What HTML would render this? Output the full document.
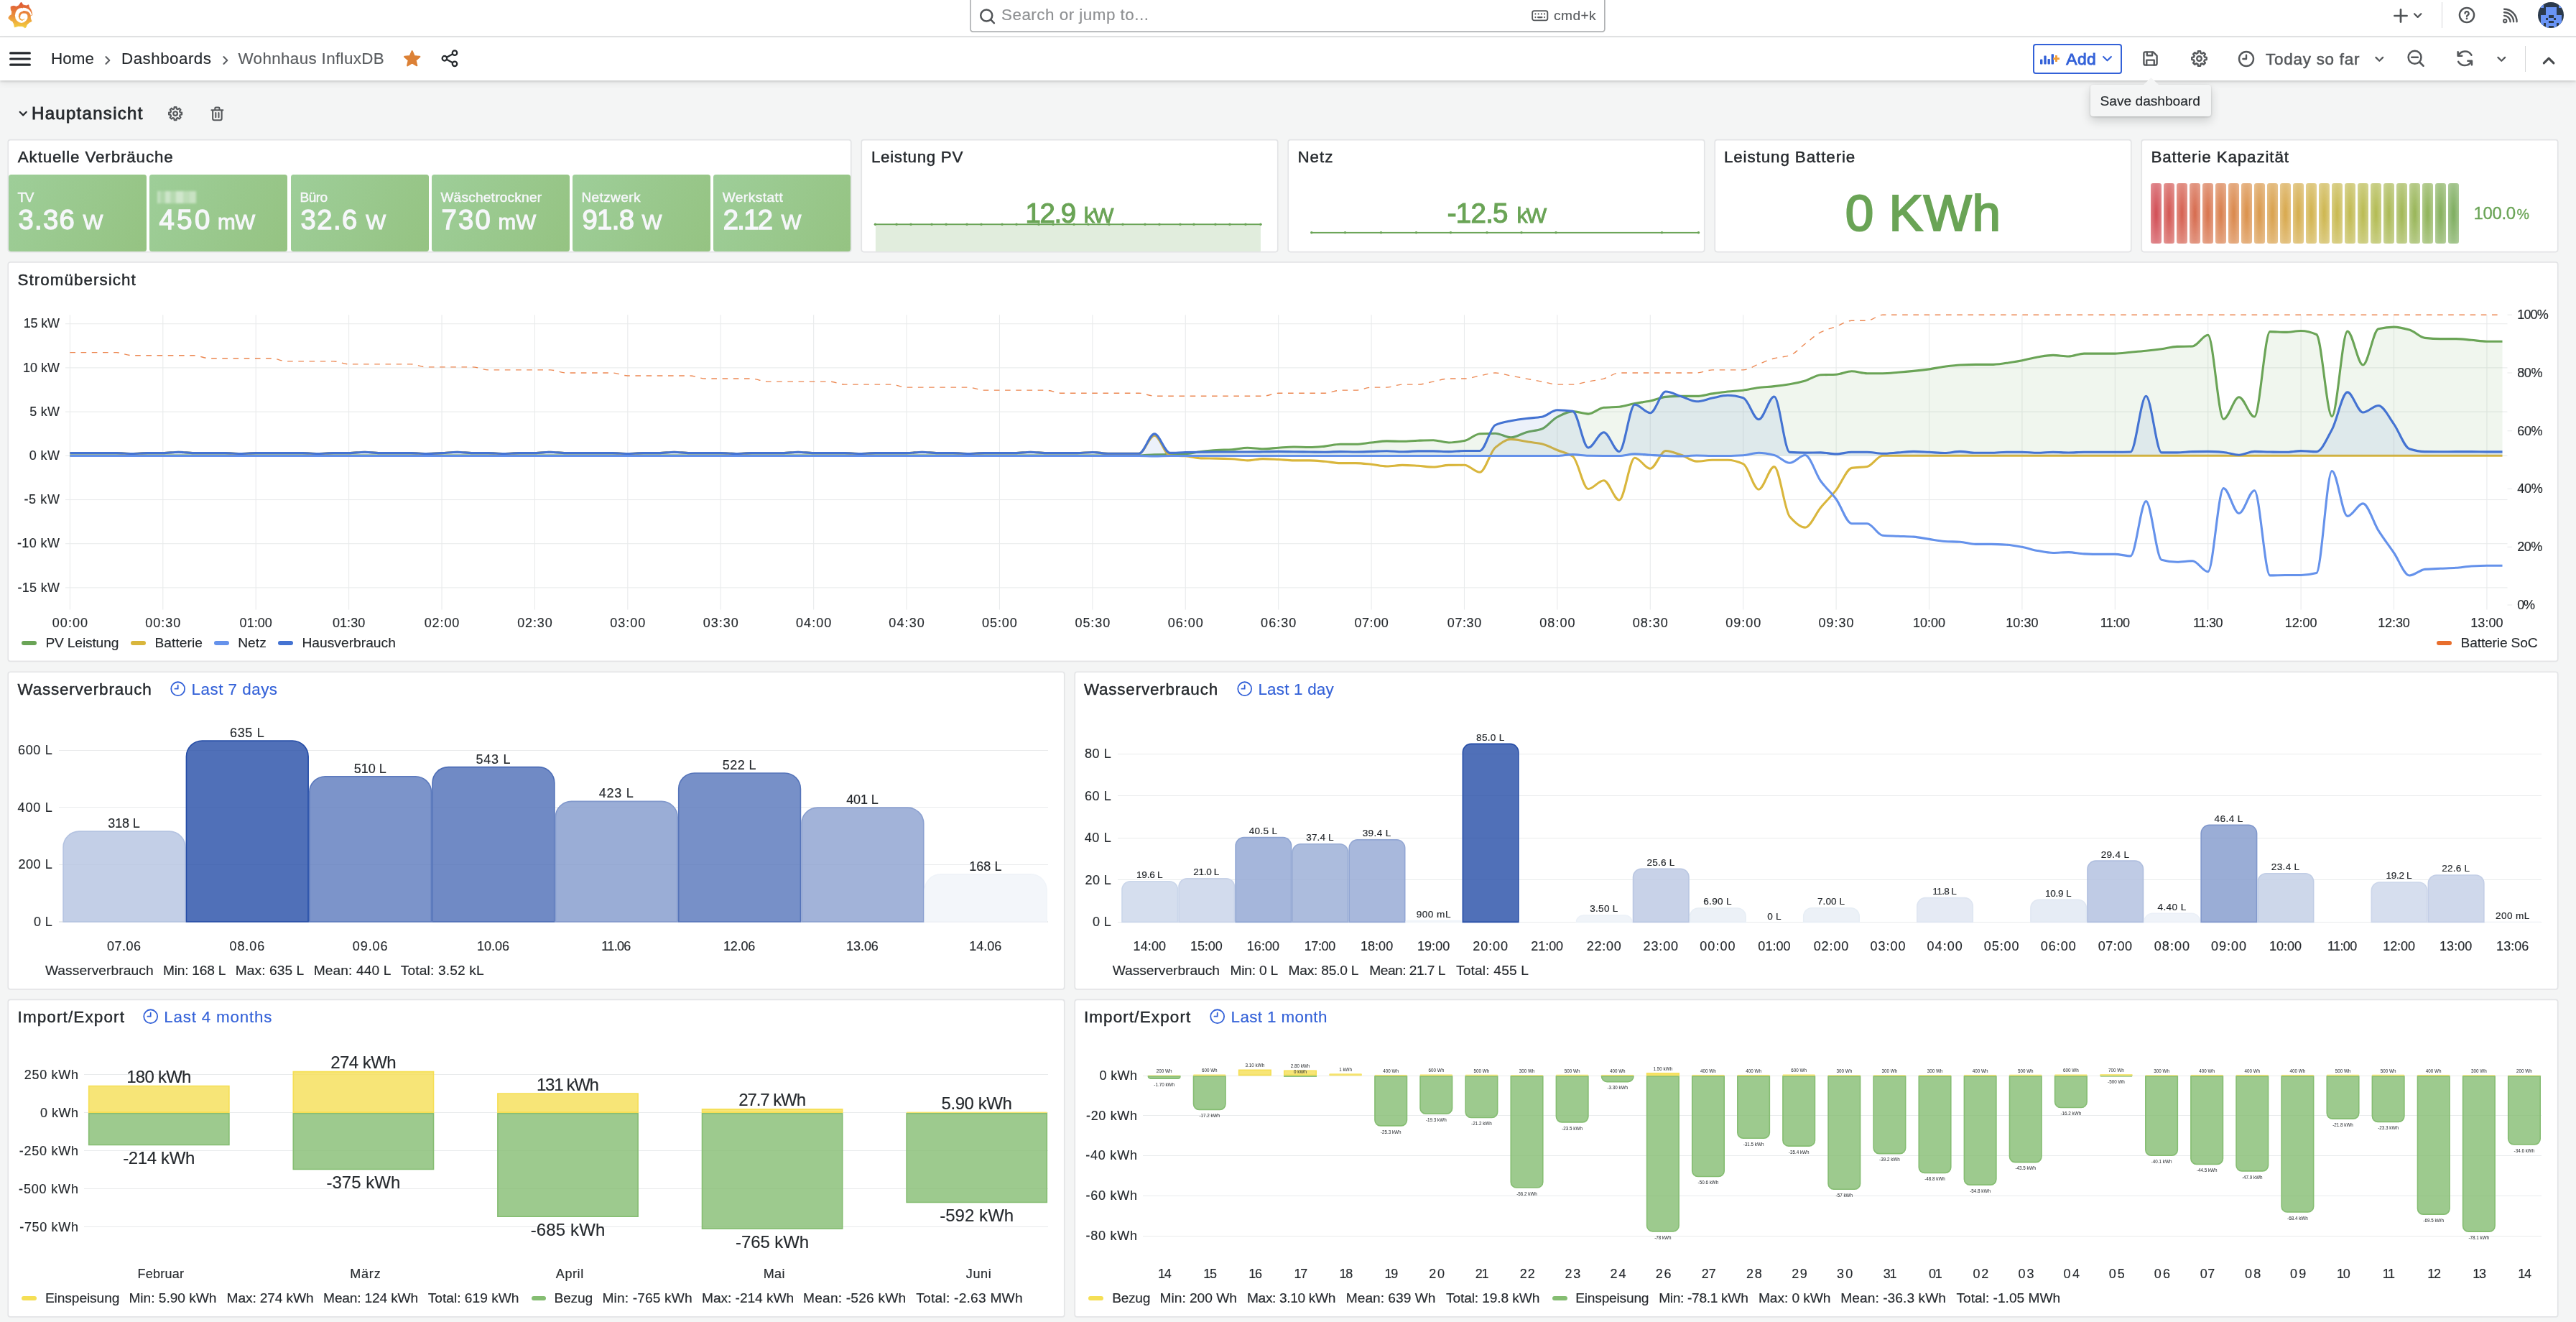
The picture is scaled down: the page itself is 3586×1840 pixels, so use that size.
<!DOCTYPE html>
<html><head><meta charset="utf-8"><title>Wohnhaus InfluxDB - Dashboards - Grafana</title><style>
html,body{margin:0;padding:0}
body{width:3586px;height:1840px;overflow:hidden;position:relative;background:rgb(244,245,245);font-family:"Liberation Sans",sans-serif;will-change:transform;}
.a{position:absolute;display:block}
.t{position:absolute;line-height:1;white-space:nowrap;}
</style></head><body>
<div class="a" style="left:0.00px;top:0.00px;width:3586.00px;height:50.40px;background:rgb(255,255,255);"></div>
<div class="a" style="left:0.00px;top:50.00px;width:3586.00px;height:1.70px;background:rgb(226,227,228);"></div>
<div class="a" style="left:0.00px;top:51.60px;width:3586.00px;height:60.40px;background:rgb(255,255,255);box-shadow:0 1.5px 3px rgba(24,26,27,0.16),0 4px 9px rgba(24,26,27,0.07);"></div>
<svg class="a" style="left:0.00px;top:0.00px;" width="56.00" height="44.00" viewBox="0 0 56 44"><defs><linearGradient id="lg" gradientUnits="userSpaceOnUse" x1="0" y1="39" x2="0" y2="3"><stop offset="0" stop-color="rgb(243,208,62)"/><stop offset="0.5" stop-color="rgb(234,140,60)"/><stop offset="1" stop-color="rgb(222,84,50)"/></linearGradient></defs><path d="M29.5 3.0L32.2 6.9L36.5 8.0L39.8 6.8L40.4 9.8L42.7 13.0L44.1 16.6L44.9 21.0L42.8 21.5L42.1 23.0L42.4 24.4L42.7 26.6L44.1 29.5L40.6 31.4L37.3 34.6L36.2 37.8L34.8 38.8L32.0 36.8L29.5 36.3L25.5 36.3L20.3 37.8L19.6 33.6L17.6 29.7L14.5 28.1L11.7 25.3L13.4 22.0L16.2 20.5L16.6 16.6L15.2 13.0L15.1 9.3L19.0 8.3L22.8 9.3L26.0 7.9Z" fill="url(#lg)" stroke="url(#lg)" stroke-width="0.9" stroke-linejoin="round"/><ellipse cx="29.9" cy="21.4" rx="9.0" ry="10.5" fill="#fff"/><path d="M32.0 10.9C35.6 10.6 38.8 12.2 40.8 13.9C42.4 15.4 43.8 18.0 44.5 20.9L42.8 21.6C42.0 19.4 40.8 17.7 39.3 16.6C37.4 15.3 35.3 15.0 32.0 15.2Z" fill="#fff"/><path d="M40.4 23.6C40.3 19.5 37.5 16.7 33.1 16.8" fill="none" stroke="url(#lg)" stroke-width="3.4" stroke-linecap="round"/><path d="M33.1 16.8C29.3 16.9 26.8 19.8 27.0 23.2" fill="none" stroke="url(#lg)" stroke-width="2.7" stroke-linecap="round"/><path d="M27.0 23.2C27.2 26.0 28.8 27.8 30.9 27.9" fill="none" stroke="url(#lg)" stroke-width="1.8" stroke-linecap="round"/><path d="M30.9 27.9C32.3 27.9 33.3 27.3 33.7 26.4" fill="none" stroke="url(#lg)" stroke-width="1.1" stroke-linecap="round"/></svg>
<svg class="a" style="left:1349.00px;top:0.00px;" width="888.00" height="47.00" viewBox="0 0 888 47"><rect x="1.95" y="-10" width="882.9" height="54.1" rx="3.6" fill="#fff" stroke="rgb(176,178,180)" stroke-width="1.7"/></svg>
<svg class="a" style="left:1362.80px;top:10.60px;overflow:visible;" width="23.20" height="23.20" viewBox="0 0 24 24"><g fill="none" stroke="rgb(81,84,87)" stroke-width="2.60" stroke-linecap="round" stroke-linejoin="round"><circle cx="10.6" cy="10.8" r="8.3"/><path d="M16.8 17.0L21.6 21.8"/></g></svg>
<div class="t" style="left:1394.00px;top:8px;font-size:22.40px;line-height:25px;color:rgb(142,144,146);letter-spacing:0.502px;-webkit-text-stroke:0.16px rgb(142,144,146);">Search or jump to...</div>
<svg class="a" style="left:2132.05px;top:10.05px;overflow:visible;" width="23.50" height="23.50" viewBox="0 0 24 24"><g fill="none" stroke="rgb(85,88,91)" stroke-width="1.90" stroke-linecap="round" stroke-linejoin="round"><rect x="1.2" y="5.2" width="21.6" height="13.6" rx="2.6"/><path d="M5.5 9.6h.1M9.8 9.6h.1M14.1 9.6h.1M18.4 9.6h.1M5.5 14.4h.1M18.4 14.4h.1M9.2 14.4h5.6" stroke-width="2.1"/></g></svg>
<div class="t" style="left:2163.00px;top:11px;font-size:19.20px;line-height:21px;color:rgb(89,92,95);letter-spacing:0.404px;-webkit-text-stroke:0.16px rgb(89,92,95);">cmd+k</div>
<svg class="a" style="left:3329.50px;top:9.60px;overflow:visible;" width="24.00" height="24.00" viewBox="0 0 24 24"><g fill="none" stroke="rgb(81,84,87)" stroke-width="2.70" stroke-linecap="round" stroke-linejoin="round"><path d="M12 3.4V20.6M3.4 12H20.6"/></g></svg>
<svg class="a" style="left:3358.30px;top:14.30px;overflow:visible;" width="15.40" height="15.40" viewBox="0 0 24 24"><g fill="none" stroke="rgb(81,84,87)" stroke-width="3.50" stroke-linecap="round" stroke-linejoin="round"><path d="M4.8 8.2L12 15.4L19.2 8.2"/></g></svg>
<div class="a" style="left:3398.80px;top:3.00px;width:1.60px;height:36.00px;background:rgb(214,215,216);"></div>
<svg class="a" style="left:3421.60px;top:9.40px;overflow:visible;" width="24.00" height="24.00" viewBox="0 0 24 24"><g fill="none" stroke="rgb(81,84,87)" stroke-width="2.40" stroke-linecap="round" stroke-linejoin="round"><circle cx="12" cy="12" r="10.1"/><path d="M9.5 9.8a2.6 2.6 0 1 1 3.9 2.2c-.8.5-1.4 1.0-1.4 1.9" stroke-width="2.2"/><path d="M12 16.8v.1" stroke-width="2.6"/></g></svg>
<svg class="a" style="left:3484.20px;top:12.20px;overflow:visible;" width="20.40" height="20.40" viewBox="0 0 24 24"><g fill="none" stroke="rgb(81,84,87)" stroke-width="2.40" stroke-linecap="round" stroke-linejoin="round"><circle cx="3.8" cy="20.2" r="2.5"/><path d="M2.4 11.6a10 10 0 0 1 10 10M2.4 6.2a15.4 15.4 0 0 1 15.4 15.4M2.4 .9a20.7 20.7 0 0 1 20.7 20.7" stroke-width="2.7"/></g></svg>
<svg class="a" style="left:3533.00px;top:3.00px;" width="36.00" height="36.00" viewBox="0 0 36 36"><defs><clipPath id="avc"><circle cx="18" cy="18" r="18"/></clipPath></defs><g clip-path="url(#avc)"><rect width="36" height="36" fill="rgb(43,58,76)"/><g shape-rendering="crispEdges"><rect x="3.60" y="3.60" width="4" height="4" fill="rgb(105,148,245)"/><rect x="28.80" y="3.60" width="4" height="4" fill="rgb(105,148,245)"/><rect x="10.80" y="7.20" width="4" height="4" fill="rgb(105,148,245)"/><rect x="14.40" y="7.20" width="4" height="4" fill="rgb(105,148,245)"/><rect x="18.00" y="7.20" width="4" height="4" fill="rgb(105,148,245)"/><rect x="21.60" y="7.20" width="4" height="4" fill="rgb(105,148,245)"/><rect x="10.80" y="10.80" width="4" height="4" fill="rgb(105,148,245)"/><rect x="14.40" y="10.80" width="4" height="4" fill="rgb(105,148,245)"/><rect x="18.00" y="10.80" width="4" height="4" fill="rgb(105,148,245)"/><rect x="21.60" y="10.80" width="4" height="4" fill="rgb(105,148,245)"/><rect x="10.80" y="14.40" width="4" height="4" fill="rgb(105,148,245)"/><rect x="14.40" y="14.40" width="4" height="4" fill="rgb(105,148,245)"/><rect x="18.00" y="14.40" width="4" height="4" fill="rgb(105,148,245)"/><rect x="21.60" y="14.40" width="4" height="4" fill="rgb(105,148,245)"/><rect x="3.60" y="18.00" width="4" height="4" fill="rgb(105,148,245)"/><rect x="7.20" y="18.00" width="4" height="4" fill="rgb(105,148,245)"/><rect x="10.80" y="18.00" width="4" height="4" fill="rgb(105,148,245)"/><rect x="21.60" y="18.00" width="4" height="4" fill="rgb(105,148,245)"/><rect x="25.20" y="18.00" width="4" height="4" fill="rgb(105,148,245)"/><rect x="28.80" y="18.00" width="4" height="4" fill="rgb(105,148,245)"/><rect x="3.60" y="21.60" width="4" height="4" fill="rgb(105,148,245)"/><rect x="7.20" y="21.60" width="4" height="4" fill="rgb(105,148,245)"/><rect x="14.40" y="21.60" width="4" height="4" fill="rgb(105,148,245)"/><rect x="18.00" y="21.60" width="4" height="4" fill="rgb(105,148,245)"/><rect x="25.20" y="21.60" width="4" height="4" fill="rgb(105,148,245)"/><rect x="28.80" y="21.60" width="4" height="4" fill="rgb(105,148,245)"/><rect x="3.60" y="25.20" width="4" height="4" fill="rgb(105,148,245)"/><rect x="7.20" y="25.20" width="4" height="4" fill="rgb(105,148,245)"/><rect x="10.80" y="25.20" width="4" height="4" fill="rgb(105,148,245)"/><rect x="21.60" y="25.20" width="4" height="4" fill="rgb(105,148,245)"/><rect x="25.20" y="25.20" width="4" height="4" fill="rgb(105,148,245)"/><rect x="28.80" y="25.20" width="4" height="4" fill="rgb(105,148,245)"/><rect x="0.00" y="28.80" width="4" height="4" fill="rgb(105,148,245)"/><rect x="3.60" y="28.80" width="4" height="4" fill="rgb(105,148,245)"/><rect x="10.80" y="28.80" width="4" height="4" fill="rgb(105,148,245)"/><rect x="14.40" y="28.80" width="4" height="4" fill="rgb(105,148,245)"/><rect x="18.00" y="28.80" width="4" height="4" fill="rgb(105,148,245)"/><rect x="21.60" y="28.80" width="4" height="4" fill="rgb(105,148,245)"/><rect x="28.80" y="28.80" width="4" height="4" fill="rgb(105,148,245)"/><rect x="32.40" y="28.80" width="4" height="4" fill="rgb(105,148,245)"/><rect x="0.00" y="32.40" width="4" height="4" fill="rgb(105,148,245)"/><rect x="3.60" y="32.40" width="4" height="4" fill="rgb(105,148,245)"/><rect x="10.80" y="32.40" width="4" height="4" fill="rgb(105,148,245)"/><rect x="21.60" y="32.40" width="4" height="4" fill="rgb(105,148,245)"/><rect x="28.80" y="32.40" width="4" height="4" fill="rgb(105,148,245)"/><rect x="32.40" y="32.40" width="4" height="4" fill="rgb(105,148,245)"/></g></g></svg>
<svg class="a" style="left:13.10px;top:66.80px;overflow:visible;" width="30.00" height="30.00" viewBox="0 0 24 24"><g fill="none" stroke="rgb(37,41,45)" stroke-width="2.50" stroke-linecap="round" stroke-linejoin="round"><path d="M1.3 5.5H22.7M1.3 12H22.7M1.3 18.5H22.7"/></g></svg>
<div class="t" style="left:71.00px;top:69px;font-size:22.40px;line-height:25px;color:rgb(37,41,45);letter-spacing:0.082px;-webkit-text-stroke:0.16px rgb(37,41,45);">Home</div>
<svg class="a" style="left:143.00px;top:76.60px;overflow:visible;" width="14.00" height="14.00" viewBox="0 0 24 24"><g fill="none" stroke="rgb(92,94,98)" stroke-width="3.50" stroke-linecap="round" stroke-linejoin="round"><path d="M7.5 3.6L16 12L7.5 20.4"/></g></svg>
<div class="t" style="left:169.00px;top:69px;font-size:22.40px;line-height:25px;color:rgb(37,41,45);letter-spacing:0.468px;-webkit-text-stroke:0.16px rgb(37,41,45);">Dashboards</div>
<svg class="a" style="left:306.60px;top:76.60px;overflow:visible;" width="14.00" height="14.00" viewBox="0 0 24 24"><g fill="none" stroke="rgb(92,94,98)" stroke-width="3.50" stroke-linecap="round" stroke-linejoin="round"><path d="M7.5 3.6L16 12L7.5 20.4"/></g></svg>
<div class="t" style="left:331.50px;top:69px;font-size:22.40px;line-height:25px;color:rgb(89,92,95);letter-spacing:0.358px;-webkit-text-stroke:0.16px rgb(89,92,95);">Wohnhaus InfluxDB</div>
<svg class="a" style="left:561.70px;top:69.90px;overflow:visible;" width="23.40" height="23.40" viewBox="0 0 24 24"><g fill="rgb(220,129,54)" stroke="rgb(220,129,54)" stroke-width="2.20" stroke-linecap="round" stroke-linejoin="round"><path d="M12.00 1.20L15.12 8.31L22.84 9.08L17.04 14.24L18.70 21.82L12.00 17.90L5.30 21.82L6.96 14.24L1.16 9.08L8.88 8.31Z"/></g></svg>
<svg class="a" style="left:613.55px;top:69.25px;overflow:visible;" width="24.50" height="24.50" viewBox="0 0 24 24"><g fill="none" stroke="rgb(37,41,45)" stroke-width="2.20" stroke-linecap="round" stroke-linejoin="round"><circle cx="18.6" cy="4.6" r="3.2"/><circle cx="4.8" cy="12" r="3.2"/><circle cx="18.6" cy="19.4" r="3.2"/><path d="M7.6 10.5L15.8 6.1M7.6 13.5L15.8 17.9"/></g></svg>
<div class="a" style="left:2830.00px;top:61.20px;width:124.00px;height:41.80px;background:rgb(255,255,255);border:2px solid rgb(51,97,216);border-radius:4px;box-sizing:border-box;"></div>
<svg class="a" style="left:2839.70px;top:74.80px;overflow:visible;" width="27.40" height="14.60" viewBox="0 0 27.4 14.6"><rect x="0.0" y="7.6" width="3.4" height="7.0" rx="0.8" fill="rgb(51,97,216)"/><rect x="5.3" y="2.6" width="3.4" height="12.0" rx="0.8" fill="rgb(51,97,216)"/><rect x="10.5" y="7.0" width="3.4" height="7.6" rx="0.8" fill="rgb(51,97,216)"/><rect x="15.6" y="0.2" width="3.4" height="14.4" rx="0.8" fill="rgb(51,97,216)"/><path d="M18.0 6.6H27.0M22.5 2.1V11.1" stroke="rgb(241,158,56)" stroke-width="2.9" fill="none"/></svg>
<div class="t" style="left:2876.30px;top:69px;font-size:22.80px;line-height:26px;color:rgb(51,97,216);letter-spacing:0.416px;-webkit-text-stroke:0.90px rgb(51,97,216);">Add</div>
<svg class="a" style="left:2925.10px;top:73.10px;overflow:visible;" width="17.00" height="17.00" viewBox="0 0 24 24"><g fill="none" stroke="rgb(51,97,216)" stroke-width="2.90" stroke-linecap="round" stroke-linejoin="round"><path d="M4.4 8.4L12 16L19.6 8.4"/></g></svg>
<svg class="a" style="left:2982.90px;top:71.10px;overflow:visible;" width="21.00" height="21.00" viewBox="0 0 24 24"><g fill="none" stroke="rgb(85,88,91)" stroke-width="2.70" stroke-linecap="round" stroke-linejoin="round"><path d="M3.5 1.6H16.5L22.4 7.5V19.6A2.8 2.8 0 0 1 19.6 22.4H4.4A2.8 2.8 0 0 1 1.6 19.6V3.5A1.9 1.9 0 0 1 3.5 1.6Z"/><path d="M6.6 1.8V7.2H15V1.8M6 22.2V14.4H18V22.2"/></g></svg>
<svg class="a" style="left:3050.10px;top:70.10px;overflow:visible;" width="23.00" height="23.00" viewBox="0 0 24 24"><g fill="none" stroke="rgb(85,88,91)" stroke-width="2.50" stroke-linecap="round" stroke-linejoin="round"><path d="M10.31 1.33L13.69 1.33L14.04 4.06L16.17 4.94L18.35 3.26L20.74 5.65L19.06 7.83L19.94 9.96L22.67 10.31L22.67 13.69L19.94 14.04L19.06 16.17L20.74 18.35L18.35 20.74L16.17 19.06L14.04 19.94L13.69 22.67L10.31 22.67L9.96 19.94L7.83 19.06L5.65 20.74L3.26 18.35L4.94 16.17L4.06 14.04L1.33 13.69L1.33 10.31L4.06 9.96L4.94 7.83L3.26 5.65L5.65 3.26L7.83 4.94L9.96 4.06Z"/><circle cx="12" cy="12" r="3.4"/></g></svg>
<svg class="a" style="left:3115.20px;top:69.60px;overflow:visible;" width="24.00" height="24.00" viewBox="0 0 24 24"><g fill="none" stroke="rgb(85,88,91)" stroke-width="2.40" stroke-linecap="round" stroke-linejoin="round"><circle cx="12" cy="12" r="10.0"/><path d="M12 6.6V12H7.4"/></g></svg>
<div class="t" style="left:3154.00px;top:70px;font-size:22.40px;line-height:25px;color:rgb(85,88,91);letter-spacing:0.780px;-webkit-text-stroke:0.50px rgb(85,88,91);">Today so far</div>
<svg class="a" style="left:3304.90px;top:74.90px;overflow:visible;" width="14.60" height="14.60" viewBox="0 0 24 24"><g fill="none" stroke="rgb(85,88,91)" stroke-width="3.70" stroke-linecap="round" stroke-linejoin="round"><path d="M4 8L12 16L20 8"/></g></svg>
<svg class="a" style="left:3351.20px;top:69.40px;overflow:visible;" width="24.40" height="24.40" viewBox="0 0 24 24"><g fill="none" stroke="rgb(85,88,91)" stroke-width="2.50" stroke-linecap="round" stroke-linejoin="round"><circle cx="10.4" cy="10.6" r="8.8"/><path d="M17 17.2L22.2 22.4M6.2 10.6H14.6"/></g></svg>
<svg class="a" style="left:3419.20px;top:69.30px;overflow:visible;" width="24.60" height="24.60" viewBox="0 0 24 24"><g fill="none" stroke="rgb(85,88,91)" stroke-width="2.50" stroke-linecap="round" stroke-linejoin="round"><path d="M20.9 7.5A10 10 0 0 0 3.2 8.2M3.1 16.5A10 10 0 0 0 20.8 15.8"/><path d="M2.6 3.2V8.6H8M21.4 20.8V15.4H16"/></g></svg>
<svg class="a" style="left:3475.00px;top:74.90px;overflow:visible;" width="14.60" height="14.60" viewBox="0 0 24 24"><g fill="none" stroke="rgb(85,88,91)" stroke-width="3.70" stroke-linecap="round" stroke-linejoin="round"><path d="M4 8L12 16L20 8"/></g></svg>
<div class="a" style="left:3514.80px;top:64.00px;width:1.60px;height:36.00px;background:rgb(214,215,216);"></div>
<svg class="a" style="left:3538.90px;top:74.70px;overflow:visible;" width="18.20" height="18.20" viewBox="0 0 24 24"><g fill="none" stroke="rgb(70,73,76)" stroke-width="4.00" stroke-linecap="round" stroke-linejoin="round"><path d="M3 17.0L12 8.0L21 17.0"/></g></svg>
<div class="a" style="left:2909.9px;top:118px;width:168.6px;height:43.8px;background:rgb(244,245,245);border-radius:4px;box-shadow:0 6px 14px rgba(24,26,27,0.18),0 1px 3px rgba(24,26,27,0.18);"></div>
<svg class="a" style="left:2982px;top:107.6px" width="25" height="12" viewBox="0 0 25 12"><path d="M0 12L12.5 0L25 12Z" fill="rgb(244,245,245)"/></svg>
<div class="t" style="left:2923.60px;top:130px;font-size:19.20px;line-height:21px;color:rgb(37,41,45);letter-spacing:-0.034px;-webkit-text-stroke:0.16px rgb(37,41,45);">Save dashboard</div>
<svg class="a" style="left:26.00px;top:151.70px;overflow:visible;" width="12.40" height="12.40" viewBox="0 0 24 24"><g fill="none" stroke="rgb(37,41,45)" stroke-width="4.20" stroke-linecap="round" stroke-linejoin="round"><path d="M3.2 7.4L12 16.2L20.8 7.4"/></g></svg>
<div class="t" style="left:44.00px;top:144px;font-size:24.00px;line-height:27px;color:rgb(37,41,45);letter-spacing:1.301px;-webkit-text-stroke:0.80px rgb(37,41,45);">Hauptansicht</div>
<svg class="a" style="left:233.90px;top:148.10px;overflow:visible;" width="20.20" height="20.20" viewBox="0 0 24 24"><g fill="none" stroke="rgb(85,88,91)" stroke-width="2.60" stroke-linecap="round" stroke-linejoin="round"><path d="M10.31 1.33L13.69 1.33L14.04 4.06L16.17 4.94L18.35 3.26L20.74 5.65L19.06 7.83L19.94 9.96L22.67 10.31L22.67 13.69L19.94 14.04L19.06 16.17L20.74 18.35L18.35 20.74L16.17 19.06L14.04 19.94L13.69 22.67L10.31 22.67L9.96 19.94L7.83 19.06L5.65 20.74L3.26 18.35L4.94 16.17L4.06 14.04L1.33 13.69L1.33 10.31L4.06 9.96L4.94 7.83L3.26 5.65L5.65 3.26L7.83 4.94L9.96 4.06Z"/><circle cx="12" cy="12" r="3.4"/></g></svg>
<svg class="a" style="left:291.60px;top:147.80px;overflow:visible;" width="20.80" height="20.80" viewBox="0 0 24 24"><g fill="none" stroke="rgb(85,88,91)" stroke-width="2.40" stroke-linecap="round" stroke-linejoin="round"><path d="M2.8 6H21.2M8.4 5.6V3.4A1.6 1.6 0 0 1 10 1.8H14A1.6 1.6 0 0 1 15.6 3.4V5.6M4.8 6.2V19.6A2.6 2.6 0 0 0 7.4 22.2H16.6A2.6 2.6 0 0 0 19.2 19.6V6.2M9.6 10.4V17.6M14.4 10.4V17.6"/></g></svg>
<svg class="a" style="left:10.00px;top:193.00px;" width="1177.00" height="160.00" viewBox="0 0 1177 160"><rect x="1.25" y="1.65" width="1173.50" height="155.90" rx="3.2" fill="#fff" stroke="rgb(227,228,230)" stroke-width="1.70"/></svg>
<div class="t" style="left:24.80px;top:206px;font-size:22.40px;line-height:25px;color:rgb(37,41,45);letter-spacing:0.862px;-webkit-text-stroke:0.45px rgb(37,41,45);">Aktuelle Verbräuche</div>
<div class="a" style="left:12.10px;top:243.00px;width:191.60px;height:106.70px;background:linear-gradient(118deg,rgb(158,206,153),rgb(149,195,130));border-radius:3.5px;"></div>
<div class="t" style="left:24.50px;top:264px;font-size:19.00px;line-height:21px;color:rgb(246,247,250);letter-spacing:-1.330px;-webkit-text-stroke:0.50px rgb(246,247,250);">TV</div>
<div class="t" style="left:25.50px;top:284px;font-size:38.20px;line-height:43px;color:rgb(246,247,250);letter-spacing:1.283px;-webkit-text-stroke:1.35px rgb(246,247,250);">3.36</div>
<div class="t" style="left:115.50px;top:292px;font-size:29.60px;line-height:33px;color:rgb(246,247,250);-webkit-text-stroke:1.00px rgb(246,247,250);">W</div>
<div class="a" style="left:208.00px;top:243.00px;width:191.60px;height:106.70px;background:linear-gradient(118deg,rgb(158,206,153),rgb(149,195,130));border-radius:3.5px;"></div>
<div class="a" style="left:219.0px;top:265.5px;width:54px;height:17px;filter:blur(1.6px);opacity:.75;background:linear-gradient(90deg,rgba(255,255,255,.55) 0 8%,rgba(255,255,255,.25) 8% 20%,rgba(255,255,255,.65) 20% 34%,rgba(255,255,255,.35) 34% 48%,rgba(255,255,255,.7) 48% 66%,rgba(255,255,255,.45) 66% 84%,rgba(255,255,255,.6) 84%);"></div>
<div class="t" style="left:221.40px;top:284px;font-size:38.20px;line-height:43px;color:rgb(246,247,250);letter-spacing:3.531px;-webkit-text-stroke:1.35px rgb(246,247,250);">450</div>
<div class="t" style="left:303.10px;top:292px;font-size:29.60px;line-height:33px;color:rgb(246,247,250);letter-spacing:-0.395px;-webkit-text-stroke:1.00px rgb(246,247,250);">mW</div>
<div class="a" style="left:405.20px;top:243.00px;width:191.60px;height:106.70px;background:linear-gradient(118deg,rgb(158,206,153),rgb(149,195,130));border-radius:3.5px;"></div>
<div class="t" style="left:417.60px;top:264px;font-size:19.00px;line-height:21px;color:rgb(246,247,250);letter-spacing:-0.512px;-webkit-text-stroke:0.50px rgb(246,247,250);">Büro</div>
<div class="t" style="left:418.60px;top:284px;font-size:38.20px;line-height:43px;color:rgb(246,247,250);letter-spacing:1.416px;-webkit-text-stroke:1.35px rgb(246,247,250);">32.6</div>
<div class="t" style="left:509.30px;top:292px;font-size:29.60px;line-height:33px;color:rgb(246,247,250);-webkit-text-stroke:1.00px rgb(246,247,250);">W</div>
<div class="a" style="left:601.00px;top:243.00px;width:191.60px;height:106.70px;background:linear-gradient(118deg,rgb(158,206,153),rgb(149,195,130));border-radius:3.5px;"></div>
<div class="t" style="left:613.40px;top:264px;font-size:19.00px;line-height:21px;color:rgb(246,247,250);letter-spacing:0.264px;-webkit-text-stroke:0.50px rgb(246,247,250);">Wäschetrockner</div>
<div class="t" style="left:614.40px;top:284px;font-size:38.20px;line-height:43px;color:rgb(246,247,250);letter-spacing:2.281px;-webkit-text-stroke:1.35px rgb(246,247,250);">730</div>
<div class="t" style="left:693.50px;top:292px;font-size:29.60px;line-height:33px;color:rgb(246,247,250);letter-spacing:0.204px;-webkit-text-stroke:1.00px rgb(246,247,250);">mW</div>
<div class="a" style="left:797.00px;top:243.00px;width:191.60px;height:106.70px;background:linear-gradient(118deg,rgb(158,206,153),rgb(149,195,130));border-radius:3.5px;"></div>
<div class="t" style="left:809.40px;top:264px;font-size:19.00px;line-height:21px;color:rgb(246,247,250);letter-spacing:0.402px;-webkit-text-stroke:0.50px rgb(246,247,250);">Netzwerk</div>
<div class="t" style="left:810.40px;top:284px;font-size:38.20px;line-height:43px;color:rgb(246,247,250);letter-spacing:-0.617px;-webkit-text-stroke:1.35px rgb(246,247,250);">91.8</div>
<div class="t" style="left:893.60px;top:292px;font-size:29.60px;line-height:33px;color:rgb(246,247,250);-webkit-text-stroke:1.00px rgb(246,247,250);">W</div>
<div class="a" style="left:993.30px;top:243.00px;width:190.80px;height:106.70px;background:linear-gradient(118deg,rgb(158,206,153),rgb(149,195,130));border-radius:3.5px;"></div>
<div class="t" style="left:1005.70px;top:264px;font-size:19.00px;line-height:21px;color:rgb(246,247,250);letter-spacing:0.514px;-webkit-text-stroke:0.50px rgb(246,247,250);">Werkstatt</div>
<div class="t" style="left:1006.70px;top:284px;font-size:38.20px;line-height:43px;color:rgb(246,247,250);letter-spacing:-1.684px;-webkit-text-stroke:1.35px rgb(246,247,250);">2.12</div>
<div class="t" style="left:1087.60px;top:292px;font-size:29.60px;line-height:33px;color:rgb(246,247,250);-webkit-text-stroke:1.00px rgb(246,247,250);">W</div>
<svg class="a" style="left:1198.00px;top:193.00px;" width="583.00" height="160.00" viewBox="0 0 583 160"><rect x="1.25" y="1.65" width="579.50" height="155.90" rx="3.2" fill="#fff" stroke="rgb(227,228,230)" stroke-width="1.70"/></svg>
<div class="t" style="left:1212.90px;top:206px;font-size:22.40px;line-height:25px;color:rgb(37,41,45);letter-spacing:0.670px;-webkit-text-stroke:0.45px rgb(37,41,45);">Leistung PV</div>
<svg class="a" style="left:1200.00px;top:300.00px;" width="570.00" height="49.70" viewBox="0 0 570 49.7"><rect x="18.8" y="12.3" width="536.2" height="38" fill="rgb(225,237,221)"/><rect x="18.2" y="11.3" width="537.4" height="1.9" fill="rgb(106,164,86)"/><circle cx="18.4" cy="12.25" r="1.75" fill="rgb(106,164,86)"/><circle cx="48.0" cy="12.25" r="1.75" fill="rgb(106,164,86)"/><circle cx="68.0" cy="12.25" r="1.75" fill="rgb(106,164,86)"/><circle cx="97.0" cy="12.25" r="1.75" fill="rgb(106,164,86)"/><circle cx="117.0" cy="12.25" r="1.75" fill="rgb(106,164,86)"/><circle cx="146.0" cy="12.25" r="1.75" fill="rgb(106,164,86)"/><circle cx="166.0" cy="12.25" r="1.75" fill="rgb(106,164,86)"/><circle cx="195.0" cy="12.25" r="1.75" fill="rgb(106,164,86)"/><circle cx="215.0" cy="12.25" r="1.75" fill="rgb(106,164,86)"/><circle cx="246.0" cy="12.25" r="1.75" fill="rgb(106,164,86)"/><circle cx="266.0" cy="12.25" r="1.75" fill="rgb(106,164,86)"/><circle cx="295.0" cy="12.25" r="1.75" fill="rgb(106,164,86)"/><circle cx="315.0" cy="12.25" r="1.75" fill="rgb(106,164,86)"/><circle cx="344.0" cy="12.25" r="1.75" fill="rgb(106,164,86)"/><circle cx="363.0" cy="12.25" r="1.75" fill="rgb(106,164,86)"/><circle cx="394.0" cy="12.25" r="1.75" fill="rgb(106,164,86)"/><circle cx="414.0" cy="12.25" r="1.75" fill="rgb(106,164,86)"/><circle cx="443.0" cy="12.25" r="1.75" fill="rgb(106,164,86)"/><circle cx="462.0" cy="12.25" r="1.75" fill="rgb(106,164,86)"/><circle cx="492.0" cy="12.25" r="1.75" fill="rgb(106,164,86)"/><circle cx="512.0" cy="12.25" r="1.75" fill="rgb(106,164,86)"/><circle cx="534.0" cy="12.25" r="1.75" fill="rgb(106,164,86)"/><circle cx="555.0" cy="12.25" r="1.75" fill="rgb(106,164,86)"/></svg>
<div class="t" style="left:1427.50px;top:275px;font-size:38.40px;line-height:43px;color:rgb(106,164,86);letter-spacing:-1.413px;-webkit-text-stroke:1.20px rgb(106,164,86);">12.9</div>
<div class="t" style="left:1508.70px;top:282px;font-size:30.40px;line-height:34px;color:rgb(106,164,86);letter-spacing:-2.128px;-webkit-text-stroke:0.90px rgb(106,164,86);">kW</div>
<svg class="a" style="left:1792.00px;top:193.00px;" width="583.00" height="160.00" viewBox="0 0 583 160"><rect x="1.25" y="1.65" width="579.50" height="155.90" rx="3.2" fill="#fff" stroke="rgb(227,228,230)" stroke-width="1.70"/></svg>
<div class="t" style="left:1806.40px;top:206px;font-size:22.40px;line-height:25px;color:rgb(37,41,45);letter-spacing:0.980px;-webkit-text-stroke:0.45px rgb(37,41,45);">Netz</div>
<svg class="a" style="left:1800.00px;top:300.00px;" width="570.00" height="40.00" viewBox="0 0 570 40"><rect x="25.4" y="22.9" width="539.6" height="1.9" fill="rgb(106,164,86)"/><circle cx="25.8" cy="23.85" r="1.75" fill="rgb(106,164,86)"/><circle cx="72.5" cy="23.85" r="1.75" fill="rgb(106,164,86)"/><circle cx="122.5" cy="23.85" r="1.75" fill="rgb(106,164,86)"/><circle cx="171.5" cy="23.85" r="1.75" fill="rgb(106,164,86)"/><circle cx="219.5" cy="23.85" r="1.75" fill="rgb(106,164,86)"/><circle cx="270.0" cy="23.85" r="1.75" fill="rgb(106,164,86)"/><circle cx="318.0" cy="23.85" r="1.75" fill="rgb(106,164,86)"/><circle cx="366.0" cy="23.85" r="1.75" fill="rgb(106,164,86)"/><circle cx="513.5" cy="23.85" r="1.75" fill="rgb(106,164,86)"/><circle cx="564.5" cy="23.85" r="1.75" fill="rgb(106,164,86)"/></svg>
<div class="t" style="left:2014.80px;top:275px;font-size:38.40px;line-height:43px;color:rgb(106,164,86);letter-spacing:-0.707px;-webkit-text-stroke:1.20px rgb(106,164,86);">-12.5</div>
<div class="t" style="left:2111.40px;top:282px;font-size:30.40px;line-height:34px;color:rgb(106,164,86);letter-spacing:-2.128px;-webkit-text-stroke:0.90px rgb(106,164,86);">kW</div>
<svg class="a" style="left:2386.00px;top:193.00px;" width="583.00" height="160.00" viewBox="0 0 583 160"><rect x="1.25" y="1.65" width="579.50" height="155.90" rx="3.2" fill="#fff" stroke="rgb(227,228,230)" stroke-width="1.70"/></svg>
<div class="t" style="left:2399.90px;top:206px;font-size:22.40px;line-height:25px;color:rgb(37,41,45);letter-spacing:0.899px;-webkit-text-stroke:0.45px rgb(37,41,45);">Leistung Batterie</div>
<div class="t" style="left:2568.80px;top:257px;font-size:71.00px;line-height:79px;color:rgb(106,164,86);letter-spacing:0.781px;-webkit-text-stroke:2.20px rgb(106,164,86);">0 KWh</div>
<svg class="a" style="left:2980.00px;top:193.00px;" width="583.00" height="160.00" viewBox="0 0 583 160"><rect x="1.25" y="1.65" width="579.50" height="155.90" rx="3.2" fill="#fff" stroke="rgb(227,228,230)" stroke-width="1.70"/></svg>
<div class="t" style="left:2994.50px;top:206px;font-size:22.40px;line-height:25px;color:rgb(37,41,45);letter-spacing:0.863px;-webkit-text-stroke:0.45px rgb(37,41,45);">Batterie Kapazität</div>
<div class="a" style="left:2994.00px;top:255.00px;width:14.70px;height:83.60px;background:radial-gradient(rgba(206,65,73,0.9) 10%,rgba(206,65,73,0.56));border-radius:3px;"></div>
<div class="a" style="left:3012.00px;top:255.00px;width:14.70px;height:83.60px;background:radial-gradient(rgba(208,74,70,0.9) 10%,rgba(208,74,70,0.56));border-radius:3px;"></div>
<div class="a" style="left:3030.00px;top:255.00px;width:14.70px;height:83.60px;background:radial-gradient(rgba(210,85,68,0.9) 10%,rgba(210,85,68,0.56));border-radius:3px;"></div>
<div class="a" style="left:3048.00px;top:255.00px;width:14.70px;height:83.60px;background:radial-gradient(rgba(211,96,65,0.9) 10%,rgba(211,96,65,0.56));border-radius:3px;"></div>
<div class="a" style="left:3066.00px;top:255.00px;width:14.70px;height:83.60px;background:radial-gradient(rgba(213,106,64,0.9) 10%,rgba(213,106,64,0.56));border-radius:3px;"></div>
<div class="a" style="left:3084.00px;top:255.00px;width:14.70px;height:83.60px;background:radial-gradient(rgba(214,117,63,0.9) 10%,rgba(214,117,63,0.56));border-radius:3px;"></div>
<div class="a" style="left:3102.00px;top:255.00px;width:14.70px;height:83.60px;background:radial-gradient(rgba(215,127,62,0.9) 10%,rgba(215,127,62,0.56));border-radius:3px;"></div>
<div class="a" style="left:3120.00px;top:255.00px;width:14.70px;height:83.60px;background:radial-gradient(rgba(216,137,62,0.9) 10%,rgba(216,137,62,0.56));border-radius:3px;"></div>
<div class="a" style="left:3138.00px;top:255.00px;width:14.70px;height:83.60px;background:radial-gradient(rgba(215,146,63,0.9) 10%,rgba(215,146,63,0.56));border-radius:3px;"></div>
<div class="a" style="left:3156.00px;top:255.00px;width:14.70px;height:83.60px;background:radial-gradient(rgba(214,154,63,0.9) 10%,rgba(214,154,63,0.56));border-radius:3px;"></div>
<div class="a" style="left:3174.00px;top:255.00px;width:14.70px;height:83.60px;background:radial-gradient(rgba(213,162,64,0.9) 10%,rgba(213,162,64,0.56));border-radius:3px;"></div>
<div class="a" style="left:3192.00px;top:255.00px;width:14.70px;height:83.60px;background:radial-gradient(rgba(210,168,65,0.9) 10%,rgba(210,168,65,0.56));border-radius:3px;"></div>
<div class="a" style="left:3210.00px;top:255.00px;width:14.70px;height:83.60px;background:radial-gradient(rgba(207,174,66,0.9) 10%,rgba(207,174,66,0.56));border-radius:3px;"></div>
<div class="a" style="left:3228.00px;top:255.00px;width:14.70px;height:83.60px;background:radial-gradient(rgba(202,177,67,0.9) 10%,rgba(202,177,67,0.56));border-radius:3px;"></div>
<div class="a" style="left:3246.00px;top:255.00px;width:14.70px;height:83.60px;background:radial-gradient(rgba(196,180,67,0.9) 10%,rgba(196,180,67,0.56));border-radius:3px;"></div>
<div class="a" style="left:3264.00px;top:255.00px;width:14.70px;height:83.60px;background:radial-gradient(rgba(189,181,68,0.9) 10%,rgba(189,181,68,0.56));border-radius:3px;"></div>
<div class="a" style="left:3282.00px;top:255.00px;width:14.70px;height:83.60px;background:radial-gradient(rgba(181,182,69,0.9) 10%,rgba(181,182,69,0.56));border-radius:3px;"></div>
<div class="a" style="left:3300.00px;top:255.00px;width:14.70px;height:83.60px;background:radial-gradient(rgba(173,182,70,0.9) 10%,rgba(173,182,70,0.56));border-radius:3px;"></div>
<div class="a" style="left:3318.00px;top:255.00px;width:14.70px;height:83.60px;background:radial-gradient(rgba(164,180,72,0.9) 10%,rgba(164,180,72,0.56));border-radius:3px;"></div>
<div class="a" style="left:3336.00px;top:255.00px;width:14.70px;height:83.60px;background:radial-gradient(rgba(155,178,73,0.9) 10%,rgba(155,178,73,0.56));border-radius:3px;"></div>
<div class="a" style="left:3354.00px;top:255.00px;width:14.70px;height:83.60px;background:radial-gradient(rgba(145,176,75,0.9) 10%,rgba(145,176,75,0.56));border-radius:3px;"></div>
<div class="a" style="left:3372.00px;top:255.00px;width:14.70px;height:83.60px;background:radial-gradient(rgba(136,174,78,0.9) 10%,rgba(136,174,78,0.56));border-radius:3px;"></div>
<div class="a" style="left:3390.00px;top:255.00px;width:14.70px;height:83.60px;background:radial-gradient(rgba(125,170,80,0.9) 10%,rgba(125,170,80,0.56));border-radius:3px;"></div>
<div class="a" style="left:3408.00px;top:255.00px;width:14.70px;height:83.60px;background:radial-gradient(rgba(116,167,83,0.9) 10%,rgba(116,167,83,0.56));border-radius:3px;"></div>
<div class="t" style="left:3443.60px;top:283px;font-size:24.00px;line-height:27px;color:rgb(106,164,86);letter-spacing:-0.390px;-webkit-text-stroke:0.30px rgb(106,164,86);">100.0</div>
<div class="t" style="left:3503.40px;top:287px;font-size:19.60px;line-height:22px;color:rgb(106,164,86);-webkit-text-stroke:0.30px rgb(106,164,86);">%</div>
<svg class="a" style="left:10.00px;top:364.00px;" width="3553.00" height="559.00" viewBox="0 0 3553 559"><rect x="1.25" y="0.85" width="3549.50" height="555.50" rx="3.2" fill="#fff" stroke="rgb(227,228,230)" stroke-width="1.70"/></svg>
<div class="t" style="left:24.50px;top:377px;font-size:22.40px;line-height:25px;color:rgb(37,41,45);letter-spacing:1.043px;-webkit-text-stroke:0.45px rgb(37,41,45);">Stromübersicht</div>
<svg class="a" style="left:0.00px;top:365.00px;" width="3586.00" height="560.00" viewBox="0 0 3586 560"><rect x="96.85" y="73.20" width="1.1" height="410.40" fill="rgb(233,235,236)"/><rect x="226.25" y="73.20" width="1.1" height="410.40" fill="rgb(233,235,236)"/><rect x="355.66" y="73.20" width="1.1" height="410.40" fill="rgb(233,235,236)"/><rect x="485.06" y="73.20" width="1.1" height="410.40" fill="rgb(233,235,236)"/><rect x="614.47" y="73.20" width="1.1" height="410.40" fill="rgb(233,235,236)"/><rect x="743.88" y="73.20" width="1.1" height="410.40" fill="rgb(233,235,236)"/><rect x="873.28" y="73.20" width="1.1" height="410.40" fill="rgb(233,235,236)"/><rect x="1002.69" y="73.20" width="1.1" height="410.40" fill="rgb(233,235,236)"/><rect x="1132.09" y="73.20" width="1.1" height="410.40" fill="rgb(233,235,236)"/><rect x="1261.50" y="73.20" width="1.1" height="410.40" fill="rgb(233,235,236)"/><rect x="1390.90" y="73.20" width="1.1" height="410.40" fill="rgb(233,235,236)"/><rect x="1520.31" y="73.20" width="1.1" height="410.40" fill="rgb(233,235,236)"/><rect x="1649.71" y="73.20" width="1.1" height="410.40" fill="rgb(233,235,236)"/><rect x="1779.12" y="73.20" width="1.1" height="410.40" fill="rgb(233,235,236)"/><rect x="1908.52" y="73.20" width="1.1" height="410.40" fill="rgb(233,235,236)"/><rect x="2037.93" y="73.20" width="1.1" height="410.40" fill="rgb(233,235,236)"/><rect x="2167.33" y="73.20" width="1.1" height="410.40" fill="rgb(233,235,236)"/><rect x="2296.74" y="73.20" width="1.1" height="410.40" fill="rgb(233,235,236)"/><rect x="2426.14" y="73.20" width="1.1" height="410.40" fill="rgb(233,235,236)"/><rect x="2555.55" y="73.20" width="1.1" height="410.40" fill="rgb(233,235,236)"/><rect x="2684.95" y="73.20" width="1.1" height="410.40" fill="rgb(233,235,236)"/><rect x="2814.36" y="73.20" width="1.1" height="410.40" fill="rgb(233,235,236)"/><rect x="2943.76" y="73.20" width="1.1" height="410.40" fill="rgb(233,235,236)"/><rect x="3073.16" y="73.20" width="1.1" height="410.40" fill="rgb(233,235,236)"/><rect x="3202.57" y="73.20" width="1.1" height="410.40" fill="rgb(233,235,236)"/><rect x="3331.98" y="73.20" width="1.1" height="410.40" fill="rgb(233,235,236)"/><rect x="3461.38" y="73.20" width="1.1" height="410.40" fill="rgb(233,235,236)"/><rect x="91.00" y="85.15" width="3399.50" height="1.1" fill="rgb(233,235,236)"/><rect x="91.00" y="146.35" width="3399.50" height="1.1" fill="rgb(233,235,236)"/><rect x="91.00" y="207.55" width="3399.50" height="1.1" fill="rgb(233,235,236)"/><rect x="91.00" y="268.75" width="3399.50" height="1.1" fill="rgb(233,235,236)"/><rect x="91.00" y="329.95" width="3399.50" height="1.1" fill="rgb(233,235,236)"/><rect x="91.00" y="391.15" width="3399.50" height="1.1" fill="rgb(233,235,236)"/><rect x="91.00" y="452.35" width="3399.50" height="1.1" fill="rgb(233,235,236)"/><rect x="3490.50" y="72.65" width="6.6" height="1.1" fill="rgb(233,235,236)"/><rect x="3490.50" y="153.41" width="6.6" height="1.1" fill="rgb(233,235,236)"/><rect x="3490.50" y="234.17" width="6.6" height="1.1" fill="rgb(233,235,236)"/><rect x="3490.50" y="314.93" width="6.6" height="1.1" fill="rgb(233,235,236)"/><rect x="3490.50" y="395.69" width="6.6" height="1.1" fill="rgb(233,235,236)"/><rect x="3490.50" y="476.45" width="6.6" height="1.1" fill="rgb(233,235,236)"/><path d="M97.40 269.00C104.59 269.00 111.78 269.00 118.97 269.00C126.16 269.00 133.35 269.00 140.54 269.00C147.72 269.00 154.91 269.00 162.10 269.00C169.29 269.00 176.48 269.00 183.67 269.00C190.86 269.00 198.05 269.00 205.24 269.00C212.43 269.00 219.62 269.00 226.81 269.00C233.99 269.00 241.18 269.00 248.37 269.00C255.56 269.00 262.75 269.00 269.94 269.00C277.13 269.00 284.32 269.00 291.51 269.00C298.70 269.00 305.89 269.00 313.08 269.00C320.26 269.00 327.45 269.00 334.64 269.00C341.83 269.00 349.02 269.00 356.21 269.00C363.40 269.00 370.59 269.00 377.78 269.00C384.97 269.00 392.16 269.00 399.35 269.00C406.53 269.00 413.72 269.00 420.91 269.00C428.10 269.00 435.29 269.00 442.48 269.00C449.67 269.00 456.86 269.00 464.05 269.00C471.24 269.00 478.43 269.00 485.62 269.00C492.80 269.00 499.99 269.00 507.18 269.00C514.37 269.00 521.56 269.00 528.75 269.00C535.94 269.00 543.13 269.00 550.32 269.00C557.51 269.00 564.70 269.00 571.88 269.00C579.07 269.00 586.26 269.00 593.45 269.00C600.64 269.00 607.83 269.00 615.02 269.00C622.21 269.00 629.40 269.00 636.59 269.00C643.78 269.00 650.97 269.00 658.15 269.00C665.34 269.00 672.53 269.00 679.72 269.00C686.91 269.00 694.10 269.00 701.29 269.00C708.48 269.00 715.67 269.00 722.86 269.00C730.05 269.00 737.24 269.00 744.43 269.00C751.61 269.00 758.80 269.00 765.99 269.00C773.18 269.00 780.37 269.00 787.56 269.00C794.75 269.00 801.94 269.00 809.13 269.00C816.32 269.00 823.51 269.00 830.70 269.00C837.88 269.00 845.07 269.00 852.26 269.00C859.45 269.00 866.64 269.00 873.83 269.00C881.02 269.00 888.21 269.00 895.40 269.00C902.59 269.00 909.78 269.00 916.97 269.00C924.15 269.00 931.34 269.00 938.53 269.00C945.72 269.00 952.91 269.00 960.10 269.00C967.29 269.00 974.48 269.00 981.67 269.00C988.86 269.00 996.05 269.00 1003.24 269.00C1010.42 269.00 1017.61 269.00 1024.80 269.00C1031.99 269.00 1039.18 269.00 1046.37 269.00C1053.56 269.00 1060.75 269.00 1067.94 269.00C1075.13 269.00 1082.32 269.00 1089.51 269.00C1096.69 269.00 1103.88 269.00 1111.07 269.00C1118.26 269.00 1125.45 269.00 1132.64 269.00C1139.83 269.00 1147.02 269.00 1154.21 269.00C1161.40 269.00 1168.59 269.00 1175.78 269.00C1182.96 269.00 1190.15 269.00 1197.34 269.00C1204.53 269.00 1211.72 269.00 1218.91 269.00C1226.10 269.00 1233.29 269.00 1240.48 269.00C1247.67 269.00 1254.86 269.00 1262.05 269.00C1269.23 269.00 1276.42 269.00 1283.61 269.00C1290.80 269.00 1297.99 269.00 1305.18 269.00C1312.37 269.00 1319.56 269.00 1326.75 269.00C1333.94 269.00 1341.13 269.00 1348.32 269.00C1355.50 269.00 1362.69 269.00 1369.88 269.00C1377.07 269.00 1384.26 269.00 1391.45 269.00C1398.64 269.00 1405.83 269.00 1413.02 269.00C1420.21 269.00 1427.40 269.00 1434.59 269.00C1441.77 269.00 1448.96 269.00 1456.15 269.00C1463.34 269.00 1470.53 269.00 1477.72 269.00C1484.91 269.00 1492.10 269.00 1499.29 269.00C1506.48 269.00 1513.67 269.00 1520.86 269.00C1528.04 269.00 1535.23 269.00 1542.42 269.00C1549.61 269.00 1556.80 269.00 1563.99 269.00C1571.18 269.00 1578.37 269.00 1585.56 269.00C1592.75 269.00 1599.94 267.91 1607.13 267.80C1614.31 267.69 1621.50 267.71 1628.69 267.60C1635.88 267.49 1643.07 267.23 1650.26 266.80C1657.45 266.37 1664.64 264.33 1671.83 263.50C1679.02 262.67 1686.21 261.85 1693.40 261.50C1700.58 261.15 1707.77 261.17 1714.96 260.80C1722.15 260.43 1729.34 258.20 1736.53 258.20C1743.72 258.20 1750.91 259.80 1758.10 259.80C1765.29 259.80 1772.48 258.66 1779.67 258.20C1786.85 257.74 1794.04 257.00 1801.23 257.00C1808.42 257.00 1815.61 257.50 1822.80 257.50C1829.99 257.50 1837.18 256.72 1844.37 256.10C1851.56 255.48 1858.75 253.30 1865.94 253.30C1873.12 253.30 1880.31 253.30 1887.50 253.30C1894.69 253.30 1901.88 251.73 1909.07 251.00C1916.26 250.27 1923.45 248.90 1930.64 248.90C1937.83 248.90 1945.02 249.30 1952.21 249.30C1959.39 249.30 1966.58 248.43 1973.77 248.20C1980.96 247.97 1988.15 247.70 1995.34 247.70C2002.53 247.70 2009.72 251.00 2016.91 251.00C2024.10 251.00 2031.29 249.83 2038.48 248.50C2045.66 247.17 2052.85 239.02 2060.04 238.70C2067.23 238.38 2074.42 238.20 2081.61 238.20C2088.80 238.20 2095.99 243.90 2103.18 243.90C2110.37 243.90 2117.56 238.60 2124.75 236.70C2131.93 234.80 2139.12 234.45 2146.31 232.00C2153.50 229.55 2160.69 218.81 2167.88 215.30C2175.07 211.79 2182.26 207.60 2189.45 207.60C2196.64 207.60 2203.83 211.10 2211.02 211.10C2218.20 211.10 2225.39 202.95 2232.58 202.30C2239.77 201.65 2246.96 201.79 2254.15 201.20C2261.34 200.61 2268.53 197.84 2275.72 196.50C2282.91 195.16 2290.10 194.44 2297.29 193.00C2304.47 191.56 2311.66 187.97 2318.85 187.40C2326.04 186.83 2333.23 186.40 2340.42 186.40C2347.61 186.40 2354.80 186.40 2361.99 186.40C2369.18 186.40 2376.37 183.96 2383.56 182.90C2390.74 181.84 2397.93 180.74 2405.12 180.00C2412.31 179.26 2419.50 179.01 2426.69 178.20C2433.88 177.39 2441.07 175.34 2448.26 174.50C2455.45 173.66 2462.64 173.35 2469.83 172.60C2477.01 171.85 2484.20 170.98 2491.39 169.80C2498.58 168.62 2505.77 167.02 2512.96 165.00C2520.15 162.98 2527.34 157.17 2534.53 156.80C2541.72 156.43 2548.91 156.55 2556.10 156.20C2563.28 155.85 2570.47 151.80 2577.66 151.80C2584.85 151.80 2592.04 154.70 2599.23 154.70C2606.42 154.70 2613.61 154.70 2620.80 154.70C2627.99 154.70 2635.18 153.84 2642.37 153.30C2649.55 152.76 2656.74 152.12 2663.93 151.40C2671.12 150.68 2678.31 149.89 2685.50 148.90C2692.69 147.91 2699.88 146.12 2707.07 145.20C2714.26 144.28 2721.45 143.31 2728.64 143.00C2735.82 142.69 2743.01 142.40 2750.20 142.40C2757.39 142.40 2764.58 142.40 2771.77 142.40C2778.96 142.40 2786.15 141.17 2793.34 140.30C2800.53 139.43 2807.72 138.15 2814.91 136.80C2822.09 135.45 2829.28 133.12 2836.47 132.00C2843.66 130.88 2850.85 129.40 2858.04 129.40C2865.23 129.40 2872.42 131.00 2879.61 131.00C2886.80 131.00 2893.99 127.10 2901.18 127.10C2908.36 127.10 2915.55 127.10 2922.74 127.10C2929.93 127.10 2937.12 127.10 2944.31 127.10C2951.50 127.10 2958.69 125.85 2965.88 125.20C2973.07 124.55 2980.26 123.94 2987.45 123.20C2994.63 122.46 3001.82 121.65 3009.01 120.70C3016.20 119.75 3023.39 117.64 3030.58 117.40C3037.77 117.16 3044.96 117.26 3052.15 117.00C3059.34 116.74 3066.53 101.30 3073.72 101.30C3080.90 101.30 3088.09 218.30 3095.28 218.30C3102.47 218.30 3109.66 187.70 3116.85 187.70C3124.04 187.70 3131.23 215.00 3138.42 215.00C3145.61 215.00 3152.80 96.60 3159.99 96.60C3167.17 96.60 3174.36 97.40 3181.55 97.40C3188.74 97.40 3195.93 95.50 3203.12 95.50C3210.31 95.50 3217.50 97.31 3224.69 100.50C3231.88 103.69 3239.07 214.50 3246.26 214.50C3253.44 214.50 3260.63 96.10 3267.82 96.10C3275.01 96.10 3282.20 143.00 3289.39 143.00C3296.58 143.00 3303.77 94.51 3310.96 92.80C3318.15 91.09 3325.34 90.10 3332.53 90.10C3339.71 90.10 3346.90 92.06 3354.09 94.00C3361.28 95.94 3368.47 104.68 3375.66 105.40C3382.85 106.12 3390.04 106.60 3397.23 106.60C3404.42 106.60 3411.61 106.60 3418.80 106.60C3425.98 106.60 3433.17 107.69 3440.36 108.30C3447.55 108.91 3454.74 110.30 3461.93 110.30C3469.12 110.30 3476.31 110.30 3483.50 110.30L3483.50 269.30 L97.40 269.30Z" fill="rgba(106,164,86,0.1)"/><path d="M97.40 269.00C104.59 269.00 111.78 269.00 118.97 269.00C126.16 269.00 133.35 269.00 140.54 269.00C147.72 269.00 154.91 269.00 162.10 269.00C169.29 269.00 176.48 269.00 183.67 269.00C190.86 269.00 198.05 269.00 205.24 269.00C212.43 269.00 219.62 269.00 226.81 269.00C233.99 269.00 241.18 269.00 248.37 269.00C255.56 269.00 262.75 269.00 269.94 269.00C277.13 269.00 284.32 269.00 291.51 269.00C298.70 269.00 305.89 269.00 313.08 269.00C320.26 269.00 327.45 269.00 334.64 269.00C341.83 269.00 349.02 269.00 356.21 269.00C363.40 269.00 370.59 269.00 377.78 269.00C384.97 269.00 392.16 269.00 399.35 269.00C406.53 269.00 413.72 269.00 420.91 269.00C428.10 269.00 435.29 269.00 442.48 269.00C449.67 269.00 456.86 269.00 464.05 269.00C471.24 269.00 478.43 269.00 485.62 269.00C492.80 269.00 499.99 269.00 507.18 269.00C514.37 269.00 521.56 269.00 528.75 269.00C535.94 269.00 543.13 269.00 550.32 269.00C557.51 269.00 564.70 269.00 571.88 269.00C579.07 269.00 586.26 269.00 593.45 269.00C600.64 269.00 607.83 269.00 615.02 269.00C622.21 269.00 629.40 269.00 636.59 269.00C643.78 269.00 650.97 269.00 658.15 269.00C665.34 269.00 672.53 269.00 679.72 269.00C686.91 269.00 694.10 269.00 701.29 269.00C708.48 269.00 715.67 269.00 722.86 269.00C730.05 269.00 737.24 269.00 744.43 269.00C751.61 269.00 758.80 269.00 765.99 269.00C773.18 269.00 780.37 269.00 787.56 269.00C794.75 269.00 801.94 269.00 809.13 269.00C816.32 269.00 823.51 269.00 830.70 269.00C837.88 269.00 845.07 269.00 852.26 269.00C859.45 269.00 866.64 269.00 873.83 269.00C881.02 269.00 888.21 269.00 895.40 269.00C902.59 269.00 909.78 269.00 916.97 269.00C924.15 269.00 931.34 269.00 938.53 269.00C945.72 269.00 952.91 269.00 960.10 269.00C967.29 269.00 974.48 269.00 981.67 269.00C988.86 269.00 996.05 269.00 1003.24 269.00C1010.42 269.00 1017.61 269.00 1024.80 269.00C1031.99 269.00 1039.18 269.00 1046.37 269.00C1053.56 269.00 1060.75 269.00 1067.94 269.00C1075.13 269.00 1082.32 269.00 1089.51 269.00C1096.69 269.00 1103.88 269.00 1111.07 269.00C1118.26 269.00 1125.45 269.00 1132.64 269.00C1139.83 269.00 1147.02 269.00 1154.21 269.00C1161.40 269.00 1168.59 269.00 1175.78 269.00C1182.96 269.00 1190.15 269.00 1197.34 269.00C1204.53 269.00 1211.72 269.00 1218.91 269.00C1226.10 269.00 1233.29 269.00 1240.48 269.00C1247.67 269.00 1254.86 269.00 1262.05 269.00C1269.23 269.00 1276.42 269.00 1283.61 269.00C1290.80 269.00 1297.99 269.00 1305.18 269.00C1312.37 269.00 1319.56 269.00 1326.75 269.00C1333.94 269.00 1341.13 269.00 1348.32 269.00C1355.50 269.00 1362.69 269.00 1369.88 269.00C1377.07 269.00 1384.26 269.00 1391.45 269.00C1398.64 269.00 1405.83 269.00 1413.02 269.00C1420.21 269.00 1427.40 269.00 1434.59 269.00C1441.77 269.00 1448.96 269.00 1456.15 269.00C1463.34 269.00 1470.53 269.00 1477.72 269.00C1484.91 269.00 1492.10 269.00 1499.29 269.00C1506.48 269.00 1513.67 269.00 1520.86 269.00C1528.04 269.00 1535.23 269.00 1542.42 269.00C1549.61 269.00 1556.80 269.00 1563.99 269.00C1571.18 269.00 1578.37 269.00 1585.56 269.00C1592.75 269.00 1599.94 267.91 1607.13 267.80C1614.31 267.69 1621.50 267.71 1628.69 267.60C1635.88 267.49 1643.07 267.23 1650.26 266.80C1657.45 266.37 1664.64 264.33 1671.83 263.50C1679.02 262.67 1686.21 261.85 1693.40 261.50C1700.58 261.15 1707.77 261.17 1714.96 260.80C1722.15 260.43 1729.34 258.20 1736.53 258.20C1743.72 258.20 1750.91 259.80 1758.10 259.80C1765.29 259.80 1772.48 258.66 1779.67 258.20C1786.85 257.74 1794.04 257.00 1801.23 257.00C1808.42 257.00 1815.61 257.50 1822.80 257.50C1829.99 257.50 1837.18 256.72 1844.37 256.10C1851.56 255.48 1858.75 253.30 1865.94 253.30C1873.12 253.30 1880.31 253.30 1887.50 253.30C1894.69 253.30 1901.88 251.73 1909.07 251.00C1916.26 250.27 1923.45 248.90 1930.64 248.90C1937.83 248.90 1945.02 249.30 1952.21 249.30C1959.39 249.30 1966.58 248.43 1973.77 248.20C1980.96 247.97 1988.15 247.70 1995.34 247.70C2002.53 247.70 2009.72 251.00 2016.91 251.00C2024.10 251.00 2031.29 249.83 2038.48 248.50C2045.66 247.17 2052.85 239.02 2060.04 238.70C2067.23 238.38 2074.42 238.20 2081.61 238.20C2088.80 238.20 2095.99 243.90 2103.18 243.90C2110.37 243.90 2117.56 238.60 2124.75 236.70C2131.93 234.80 2139.12 234.45 2146.31 232.00C2153.50 229.55 2160.69 218.81 2167.88 215.30C2175.07 211.79 2182.26 207.60 2189.45 207.60C2196.64 207.60 2203.83 211.10 2211.02 211.10C2218.20 211.10 2225.39 202.95 2232.58 202.30C2239.77 201.65 2246.96 201.79 2254.15 201.20C2261.34 200.61 2268.53 197.84 2275.72 196.50C2282.91 195.16 2290.10 194.44 2297.29 193.00C2304.47 191.56 2311.66 187.97 2318.85 187.40C2326.04 186.83 2333.23 186.40 2340.42 186.40C2347.61 186.40 2354.80 186.40 2361.99 186.40C2369.18 186.40 2376.37 183.96 2383.56 182.90C2390.74 181.84 2397.93 180.74 2405.12 180.00C2412.31 179.26 2419.50 179.01 2426.69 178.20C2433.88 177.39 2441.07 175.34 2448.26 174.50C2455.45 173.66 2462.64 173.35 2469.83 172.60C2477.01 171.85 2484.20 170.98 2491.39 169.80C2498.58 168.62 2505.77 167.02 2512.96 165.00C2520.15 162.98 2527.34 157.17 2534.53 156.80C2541.72 156.43 2548.91 156.55 2556.10 156.20C2563.28 155.85 2570.47 151.80 2577.66 151.80C2584.85 151.80 2592.04 154.70 2599.23 154.70C2606.42 154.70 2613.61 154.70 2620.80 154.70C2627.99 154.70 2635.18 153.84 2642.37 153.30C2649.55 152.76 2656.74 152.12 2663.93 151.40C2671.12 150.68 2678.31 149.89 2685.50 148.90C2692.69 147.91 2699.88 146.12 2707.07 145.20C2714.26 144.28 2721.45 143.31 2728.64 143.00C2735.82 142.69 2743.01 142.40 2750.20 142.40C2757.39 142.40 2764.58 142.40 2771.77 142.40C2778.96 142.40 2786.15 141.17 2793.34 140.30C2800.53 139.43 2807.72 138.15 2814.91 136.80C2822.09 135.45 2829.28 133.12 2836.47 132.00C2843.66 130.88 2850.85 129.40 2858.04 129.40C2865.23 129.40 2872.42 131.00 2879.61 131.00C2886.80 131.00 2893.99 127.10 2901.18 127.10C2908.36 127.10 2915.55 127.10 2922.74 127.10C2929.93 127.10 2937.12 127.10 2944.31 127.10C2951.50 127.10 2958.69 125.85 2965.88 125.20C2973.07 124.55 2980.26 123.94 2987.45 123.20C2994.63 122.46 3001.82 121.65 3009.01 120.70C3016.20 119.75 3023.39 117.64 3030.58 117.40C3037.77 117.16 3044.96 117.26 3052.15 117.00C3059.34 116.74 3066.53 101.30 3073.72 101.30C3080.90 101.30 3088.09 218.30 3095.28 218.30C3102.47 218.30 3109.66 187.70 3116.85 187.70C3124.04 187.70 3131.23 215.00 3138.42 215.00C3145.61 215.00 3152.80 96.60 3159.99 96.60C3167.17 96.60 3174.36 97.40 3181.55 97.40C3188.74 97.40 3195.93 95.50 3203.12 95.50C3210.31 95.50 3217.50 97.31 3224.69 100.50C3231.88 103.69 3239.07 214.50 3246.26 214.50C3253.44 214.50 3260.63 96.10 3267.82 96.10C3275.01 96.10 3282.20 143.00 3289.39 143.00C3296.58 143.00 3303.77 94.51 3310.96 92.80C3318.15 91.09 3325.34 90.10 3332.53 90.10C3339.71 90.10 3346.90 92.06 3354.09 94.00C3361.28 95.94 3368.47 104.68 3375.66 105.40C3382.85 106.12 3390.04 106.60 3397.23 106.60C3404.42 106.60 3411.61 106.60 3418.80 106.60C3425.98 106.60 3433.17 107.69 3440.36 108.30C3447.55 108.91 3454.74 110.30 3461.93 110.30C3469.12 110.30 3476.31 110.30 3483.50 110.30" fill="none" stroke="rgb(106,164,86)" stroke-width="3.1" stroke-linejoin="round"/><path d="M97.40 265.60C104.59 265.60 111.78 265.60 118.97 265.60C126.16 265.60 133.35 265.60 140.54 265.60C147.72 265.60 154.91 265.60 162.10 265.60C169.29 265.60 176.48 266.50 183.67 266.50C190.86 266.50 198.05 265.60 205.24 265.60C212.43 265.60 219.62 265.60 226.81 265.60C233.99 265.60 241.18 264.20 248.37 264.20C255.56 264.20 262.75 265.60 269.94 265.60C277.13 265.60 284.32 265.60 291.51 265.60C298.70 265.60 305.89 265.60 313.08 265.60C320.26 265.60 327.45 266.50 334.64 266.50C341.83 266.50 349.02 265.60 356.21 265.60C363.40 265.60 370.59 265.60 377.78 265.60C384.97 265.60 392.16 265.60 399.35 265.60C406.53 265.60 413.72 265.60 420.91 265.60C428.10 265.60 435.29 266.50 442.48 266.50C449.67 266.50 456.86 265.60 464.05 265.60C471.24 265.60 478.43 265.60 485.62 265.60C492.80 265.60 499.99 264.20 507.18 264.20C514.37 264.20 521.56 265.60 528.75 265.60C535.94 265.60 543.13 265.60 550.32 265.60C557.51 265.60 564.70 265.60 571.88 265.60C579.07 265.60 586.26 266.50 593.45 266.50C600.64 266.50 607.83 265.97 615.02 265.60C622.21 265.23 629.40 264.20 636.59 264.20C643.78 264.20 650.97 265.60 658.15 265.60C665.34 265.60 672.53 265.60 679.72 265.60C686.91 265.60 694.10 266.50 701.29 266.50C708.48 266.50 715.67 265.60 722.86 265.60C730.05 265.60 737.24 265.60 744.43 265.60C751.61 265.60 758.80 264.20 765.99 264.20C773.18 264.20 780.37 265.60 787.56 265.60C794.75 265.60 801.94 265.60 809.13 265.60C816.32 265.60 823.51 265.60 830.70 265.60C837.88 265.60 845.07 265.60 852.26 265.60C859.45 265.60 866.64 266.50 873.83 266.50C881.02 266.50 888.21 265.60 895.40 265.60C902.59 265.60 909.78 265.60 916.97 265.60C924.15 265.60 931.34 264.20 938.53 264.20C945.72 264.20 952.91 265.60 960.10 265.60C967.29 265.60 974.48 265.60 981.67 265.60C988.86 265.60 996.05 265.60 1003.24 265.60C1010.42 265.60 1017.61 266.50 1024.80 266.50C1031.99 266.50 1039.18 265.60 1046.37 265.60C1053.56 265.60 1060.75 265.60 1067.94 265.60C1075.13 265.60 1082.32 265.60 1089.51 265.60C1096.69 265.60 1103.88 264.20 1111.07 264.20C1118.26 264.20 1125.45 265.60 1132.64 265.60C1139.83 265.60 1147.02 265.60 1154.21 265.60C1161.40 265.60 1168.59 265.60 1175.78 265.60C1182.96 265.60 1190.15 266.50 1197.34 266.50C1204.53 266.50 1211.72 265.60 1218.91 265.60C1226.10 265.60 1233.29 265.60 1240.48 265.60C1247.67 265.60 1254.86 265.60 1262.05 265.60C1269.23 265.60 1276.42 264.20 1283.61 264.20C1290.80 264.20 1297.99 265.60 1305.18 265.60C1312.37 265.60 1319.56 265.60 1326.75 265.60C1333.94 265.60 1341.13 266.50 1348.32 266.50C1355.50 266.50 1362.69 265.60 1369.88 265.60C1377.07 265.60 1384.26 265.60 1391.45 265.60C1398.64 265.60 1405.83 265.60 1413.02 265.60C1420.21 265.60 1427.40 264.20 1434.59 264.20C1441.77 264.20 1448.96 265.60 1456.15 265.60C1463.34 265.60 1470.53 265.60 1477.72 265.60C1484.91 265.60 1492.10 265.60 1499.29 265.60C1506.48 265.60 1513.67 264.50 1520.86 264.50C1528.04 264.50 1535.23 266.30 1542.42 266.30C1549.61 266.30 1556.80 266.30 1563.99 266.30C1571.18 266.30 1578.37 266.30 1585.56 266.30C1592.75 266.30 1599.94 241.20 1607.13 241.20C1614.31 241.20 1621.50 268.64 1628.69 269.10C1635.88 269.56 1643.07 269.42 1650.26 269.80C1657.45 270.18 1664.64 272.77 1671.83 272.90C1679.02 273.03 1686.21 273.00 1693.40 273.10C1700.58 273.20 1707.77 273.45 1714.96 273.80C1722.15 274.15 1729.34 275.90 1736.53 275.90C1743.72 275.90 1750.91 273.60 1758.10 273.60C1765.29 273.60 1772.48 274.13 1779.67 274.50C1786.85 274.87 1794.04 275.90 1801.23 275.90C1808.42 275.90 1815.61 275.90 1822.80 275.90C1829.99 275.90 1837.18 276.72 1844.37 277.30C1851.56 277.88 1858.75 279.60 1865.94 279.60C1873.12 279.60 1880.31 279.60 1887.50 279.60C1894.69 279.60 1901.88 280.60 1909.07 281.30C1916.26 282.00 1923.45 284.00 1930.64 284.00C1937.83 284.00 1945.02 282.40 1952.21 282.40C1959.39 282.40 1966.58 282.91 1973.77 283.30C1980.96 283.69 1988.15 285.00 1995.34 285.00C2002.53 285.00 2009.72 282.46 2016.91 282.40C2024.10 282.34 2031.29 282.30 2038.48 282.30C2045.66 282.30 2052.85 292.30 2060.04 292.30C2067.23 292.30 2074.42 263.65 2081.61 257.90C2088.80 252.15 2095.99 246.40 2103.18 246.40C2110.37 246.40 2117.56 248.43 2124.75 249.50C2131.93 250.57 2139.12 251.20 2146.31 252.80C2153.50 254.39 2160.69 258.58 2167.88 261.50C2175.07 264.42 2182.26 265.39 2189.45 270.30C2196.64 275.21 2203.83 315.50 2211.02 315.50C2218.20 315.50 2225.39 303.70 2232.58 303.70C2239.77 303.70 2246.96 331.00 2254.15 331.00C2261.34 331.00 2268.53 272.20 2275.72 272.20C2282.91 272.20 2290.10 287.20 2297.29 287.20C2304.47 287.20 2311.66 262.50 2318.85 262.50C2326.04 262.50 2333.23 265.97 2340.42 268.30C2347.61 270.63 2354.80 277.10 2361.99 277.10C2369.18 277.10 2376.37 275.36 2383.56 275.30C2390.74 275.24 2397.93 275.20 2405.12 275.20C2412.31 275.20 2419.50 277.47 2426.69 280.60C2433.88 283.73 2441.07 316.20 2448.26 316.20C2455.45 316.20 2462.64 284.60 2469.83 284.60C2477.01 284.60 2484.20 345.73 2491.39 354.00C2498.58 362.27 2505.77 369.10 2512.96 369.10C2520.15 369.10 2527.34 350.03 2534.53 341.40C2541.72 332.77 2548.91 326.14 2556.10 317.10C2563.28 308.06 2570.47 287.59 2577.66 286.40C2584.85 285.21 2592.04 285.63 2599.23 284.50C2606.42 283.37 2613.61 269.30 2620.80 269.30C2627.99 269.30 2635.18 269.30 2642.37 269.30C2649.55 269.30 2656.74 269.30 2663.93 269.30C2671.12 269.30 2678.31 269.30 2685.50 269.30C2692.69 269.30 2699.88 269.30 2707.07 269.30C2714.26 269.30 2721.45 269.30 2728.64 269.30C2735.82 269.30 2743.01 269.30 2750.20 269.30C2757.39 269.30 2764.58 269.30 2771.77 269.30C2778.96 269.30 2786.15 269.30 2793.34 269.30C2800.53 269.30 2807.72 269.30 2814.91 269.30C2822.09 269.30 2829.28 269.30 2836.47 269.30C2843.66 269.30 2850.85 269.30 2858.04 269.30C2865.23 269.30 2872.42 269.30 2879.61 269.30C2886.80 269.30 2893.99 269.30 2901.18 269.30C2908.36 269.30 2915.55 269.30 2922.74 269.30C2929.93 269.30 2937.12 269.30 2944.31 269.30C2951.50 269.30 2958.69 269.30 2965.88 269.30C2973.07 269.30 2980.26 269.30 2987.45 269.30C2994.63 269.30 3001.82 269.30 3009.01 269.30C3016.20 269.30 3023.39 269.30 3030.58 269.30C3037.77 269.30 3044.96 269.30 3052.15 269.30C3059.34 269.30 3066.53 269.30 3073.72 269.30C3080.90 269.30 3088.09 269.30 3095.28 269.30C3102.47 269.30 3109.66 269.30 3116.85 269.30C3124.04 269.30 3131.23 269.30 3138.42 269.30C3145.61 269.30 3152.80 269.30 3159.99 269.30C3167.17 269.30 3174.36 269.30 3181.55 269.30C3188.74 269.30 3195.93 269.30 3203.12 269.30C3210.31 269.30 3217.50 269.30 3224.69 269.30C3231.88 269.30 3239.07 269.30 3246.26 269.30C3253.44 269.30 3260.63 269.30 3267.82 269.30C3275.01 269.30 3282.20 269.30 3289.39 269.30C3296.58 269.30 3303.77 269.30 3310.96 269.30C3318.15 269.30 3325.34 269.30 3332.53 269.30C3339.71 269.30 3346.90 269.30 3354.09 269.30C3361.28 269.30 3368.47 269.30 3375.66 269.30C3382.85 269.30 3390.04 269.30 3397.23 269.30C3404.42 269.30 3411.61 269.30 3418.80 269.30C3425.98 269.30 3433.17 269.30 3440.36 269.30C3447.55 269.30 3454.74 269.30 3461.93 269.30C3469.12 269.30 3476.31 269.30 3483.50 269.30" fill="none" stroke="rgb(217,182,60)" stroke-width="3.1" stroke-linejoin="round"/><path d="M97.40 269.50C104.59 269.50 111.78 269.50 118.97 269.50C126.16 269.50 133.35 269.50 140.54 269.50C147.72 269.50 154.91 269.50 162.10 269.50C169.29 269.50 176.48 269.50 183.67 269.50C190.86 269.50 198.05 269.50 205.24 269.50C212.43 269.50 219.62 269.50 226.81 269.50C233.99 269.50 241.18 269.50 248.37 269.50C255.56 269.50 262.75 269.50 269.94 269.50C277.13 269.50 284.32 269.50 291.51 269.50C298.70 269.50 305.89 269.50 313.08 269.50C320.26 269.50 327.45 269.50 334.64 269.50C341.83 269.50 349.02 269.50 356.21 269.50C363.40 269.50 370.59 269.50 377.78 269.50C384.97 269.50 392.16 269.50 399.35 269.50C406.53 269.50 413.72 269.50 420.91 269.50C428.10 269.50 435.29 269.50 442.48 269.50C449.67 269.50 456.86 269.50 464.05 269.50C471.24 269.50 478.43 269.50 485.62 269.50C492.80 269.50 499.99 269.50 507.18 269.50C514.37 269.50 521.56 269.50 528.75 269.50C535.94 269.50 543.13 269.50 550.32 269.50C557.51 269.50 564.70 269.50 571.88 269.50C579.07 269.50 586.26 269.50 593.45 269.50C600.64 269.50 607.83 269.50 615.02 269.50C622.21 269.50 629.40 269.50 636.59 269.50C643.78 269.50 650.97 269.50 658.15 269.50C665.34 269.50 672.53 269.50 679.72 269.50C686.91 269.50 694.10 269.50 701.29 269.50C708.48 269.50 715.67 269.50 722.86 269.50C730.05 269.50 737.24 269.50 744.43 269.50C751.61 269.50 758.80 269.50 765.99 269.50C773.18 269.50 780.37 269.50 787.56 269.50C794.75 269.50 801.94 269.50 809.13 269.50C816.32 269.50 823.51 269.50 830.70 269.50C837.88 269.50 845.07 269.50 852.26 269.50C859.45 269.50 866.64 269.50 873.83 269.50C881.02 269.50 888.21 269.50 895.40 269.50C902.59 269.50 909.78 269.50 916.97 269.50C924.15 269.50 931.34 269.50 938.53 269.50C945.72 269.50 952.91 269.50 960.10 269.50C967.29 269.50 974.48 269.50 981.67 269.50C988.86 269.50 996.05 269.50 1003.24 269.50C1010.42 269.50 1017.61 269.50 1024.80 269.50C1031.99 269.50 1039.18 269.50 1046.37 269.50C1053.56 269.50 1060.75 269.50 1067.94 269.50C1075.13 269.50 1082.32 269.50 1089.51 269.50C1096.69 269.50 1103.88 269.50 1111.07 269.50C1118.26 269.50 1125.45 269.50 1132.64 269.50C1139.83 269.50 1147.02 269.50 1154.21 269.50C1161.40 269.50 1168.59 269.50 1175.78 269.50C1182.96 269.50 1190.15 269.50 1197.34 269.50C1204.53 269.50 1211.72 269.50 1218.91 269.50C1226.10 269.50 1233.29 269.50 1240.48 269.50C1247.67 269.50 1254.86 269.50 1262.05 269.50C1269.23 269.50 1276.42 269.50 1283.61 269.50C1290.80 269.50 1297.99 269.50 1305.18 269.50C1312.37 269.50 1319.56 269.50 1326.75 269.50C1333.94 269.50 1341.13 269.50 1348.32 269.50C1355.50 269.50 1362.69 269.50 1369.88 269.50C1377.07 269.50 1384.26 269.50 1391.45 269.50C1398.64 269.50 1405.83 269.50 1413.02 269.50C1420.21 269.50 1427.40 269.50 1434.59 269.50C1441.77 269.50 1448.96 269.50 1456.15 269.50C1463.34 269.50 1470.53 269.50 1477.72 269.50C1484.91 269.50 1492.10 269.50 1499.29 269.50C1506.48 269.50 1513.67 269.50 1520.86 269.50C1528.04 269.50 1535.23 269.50 1542.42 269.50C1549.61 269.50 1556.80 269.50 1563.99 269.50C1571.18 269.50 1578.37 269.50 1585.56 269.50C1592.75 269.50 1599.94 270.00 1607.13 270.00C1614.31 270.00 1621.50 269.50 1628.69 269.50C1635.88 269.50 1643.07 269.50 1650.26 269.50C1657.45 269.50 1664.64 269.50 1671.83 269.50C1679.02 269.50 1686.21 269.50 1693.40 269.50C1700.58 269.50 1707.77 269.50 1714.96 269.50C1722.15 269.50 1729.34 269.50 1736.53 269.50C1743.72 269.50 1750.91 269.50 1758.10 269.50C1765.29 269.50 1772.48 269.50 1779.67 269.50C1786.85 269.50 1794.04 269.50 1801.23 269.50C1808.42 269.50 1815.61 269.50 1822.80 269.50C1829.99 269.50 1837.18 269.50 1844.37 269.50C1851.56 269.50 1858.75 269.50 1865.94 269.50C1873.12 269.50 1880.31 269.50 1887.50 269.50C1894.69 269.50 1901.88 269.50 1909.07 269.50C1916.26 269.50 1923.45 269.50 1930.64 269.50C1937.83 269.50 1945.02 269.50 1952.21 269.50C1959.39 269.50 1966.58 269.50 1973.77 269.50C1980.96 269.50 1988.15 269.50 1995.34 269.50C2002.53 269.50 2009.72 269.50 2016.91 269.50C2024.10 269.50 2031.29 269.50 2038.48 269.50C2045.66 269.50 2052.85 269.50 2060.04 269.50C2067.23 269.50 2074.42 269.50 2081.61 269.50C2088.80 269.50 2095.99 269.50 2103.18 269.50C2110.37 269.50 2117.56 269.50 2124.75 269.50C2131.93 269.50 2139.12 269.50 2146.31 269.50C2153.50 269.50 2160.69 269.50 2167.88 269.50C2175.07 269.50 2182.26 267.60 2189.45 267.60C2196.64 267.60 2203.83 269.18 2211.02 269.30C2218.20 269.42 2225.39 269.50 2232.58 269.50C2239.77 269.50 2246.96 269.50 2254.15 269.50C2261.34 269.50 2268.53 266.80 2275.72 266.80C2282.91 266.80 2290.10 267.86 2297.29 268.30C2304.47 268.74 2311.66 269.30 2318.85 269.50C2326.04 269.70 2333.23 269.90 2340.42 269.90C2347.61 269.90 2354.80 269.00 2361.99 269.00C2369.18 269.00 2376.37 269.50 2383.56 269.50C2390.74 269.50 2397.93 269.50 2405.12 269.50C2412.31 269.50 2419.50 269.13 2426.69 268.70C2433.88 268.27 2441.07 265.20 2448.26 265.20C2455.45 265.20 2462.64 266.75 2469.83 268.40C2477.01 270.05 2484.20 279.30 2491.39 279.30C2498.58 279.30 2505.77 268.50 2512.96 268.50C2520.15 268.50 2527.34 294.62 2534.53 304.50C2541.72 314.38 2548.91 320.05 2556.10 329.70C2563.28 339.35 2570.47 363.70 2577.66 363.70C2584.85 363.70 2592.04 363.70 2599.23 363.70C2606.42 363.70 2613.61 379.57 2620.80 380.20C2627.99 380.83 2635.18 380.88 2642.37 381.20C2649.55 381.52 2656.74 381.63 2663.93 382.10C2671.12 382.57 2678.31 384.33 2685.50 385.40C2692.69 386.47 2699.88 388.08 2707.07 388.50C2714.26 388.92 2721.45 388.88 2728.64 389.30C2735.82 389.72 2743.01 392.40 2750.20 392.40C2757.39 392.40 2764.58 392.40 2771.77 392.40C2778.96 392.40 2786.15 392.78 2793.34 393.20C2800.53 393.62 2807.72 395.01 2814.91 396.30C2822.09 397.59 2829.28 400.23 2836.47 401.50C2843.66 402.77 2850.85 404.50 2858.04 404.50C2865.23 404.50 2872.42 403.60 2879.61 403.60C2886.80 403.60 2893.99 405.63 2901.18 405.90C2908.36 406.17 2915.55 406.40 2922.74 406.40C2929.93 406.40 2937.12 406.40 2944.31 406.40C2951.50 406.40 2958.69 408.90 2965.88 408.90C2973.07 408.90 2980.26 332.60 2987.45 332.60C2994.63 332.60 3001.82 412.21 3009.01 414.20C3016.20 416.19 3023.39 417.30 3030.58 417.30C3037.77 417.30 3044.96 415.70 3052.15 415.70C3059.34 415.70 3066.53 430.70 3073.72 430.70C3080.90 430.70 3088.09 314.60 3095.28 314.60C3102.47 314.60 3109.66 349.50 3116.85 349.50C3124.04 349.50 3131.23 317.70 3138.42 317.70C3145.61 317.70 3152.80 435.90 3159.99 435.90C3167.17 435.90 3174.36 435.50 3181.55 435.50C3188.74 435.50 3195.93 435.50 3203.12 435.50C3210.31 435.50 3217.50 434.49 3224.69 432.60C3231.88 430.71 3239.07 290.50 3246.26 290.50C3253.44 290.50 3260.63 353.40 3267.82 353.40C3275.01 353.40 3282.20 335.90 3289.39 335.90C3296.58 335.90 3303.77 362.07 3310.96 373.40C3318.15 384.73 3325.34 394.07 3332.53 404.50C3339.71 414.93 3346.90 436.00 3354.09 436.00C3361.28 436.00 3368.47 428.05 3375.66 427.40C3382.85 426.75 3390.04 426.65 3397.23 426.30C3404.42 425.95 3411.61 425.76 3418.80 425.30C3425.98 424.84 3433.17 423.36 3440.36 423.00C3447.55 422.64 3454.74 422.30 3461.93 422.30C3469.12 422.30 3476.31 422.30 3483.50 422.30" fill="none" stroke="rgb(101,146,235)" stroke-width="3.1" stroke-linejoin="round"/><path d="M97.40 265.60C104.59 265.60 111.78 265.60 118.97 265.60C126.16 265.60 133.35 265.60 140.54 265.60C147.72 265.60 154.91 265.60 162.10 265.60C169.29 265.60 176.48 266.50 183.67 266.50C190.86 266.50 198.05 265.60 205.24 265.60C212.43 265.60 219.62 265.60 226.81 265.60C233.99 265.60 241.18 264.20 248.37 264.20C255.56 264.20 262.75 265.60 269.94 265.60C277.13 265.60 284.32 265.60 291.51 265.60C298.70 265.60 305.89 265.60 313.08 265.60C320.26 265.60 327.45 266.50 334.64 266.50C341.83 266.50 349.02 265.60 356.21 265.60C363.40 265.60 370.59 265.60 377.78 265.60C384.97 265.60 392.16 265.60 399.35 265.60C406.53 265.60 413.72 265.60 420.91 265.60C428.10 265.60 435.29 266.50 442.48 266.50C449.67 266.50 456.86 265.60 464.05 265.60C471.24 265.60 478.43 265.60 485.62 265.60C492.80 265.60 499.99 264.20 507.18 264.20C514.37 264.20 521.56 265.60 528.75 265.60C535.94 265.60 543.13 265.60 550.32 265.60C557.51 265.60 564.70 265.60 571.88 265.60C579.07 265.60 586.26 266.50 593.45 266.50C600.64 266.50 607.83 265.97 615.02 265.60C622.21 265.23 629.40 264.20 636.59 264.20C643.78 264.20 650.97 265.60 658.15 265.60C665.34 265.60 672.53 265.60 679.72 265.60C686.91 265.60 694.10 266.50 701.29 266.50C708.48 266.50 715.67 265.60 722.86 265.60C730.05 265.60 737.24 265.60 744.43 265.60C751.61 265.60 758.80 264.20 765.99 264.20C773.18 264.20 780.37 265.60 787.56 265.60C794.75 265.60 801.94 265.60 809.13 265.60C816.32 265.60 823.51 265.60 830.70 265.60C837.88 265.60 845.07 265.60 852.26 265.60C859.45 265.60 866.64 266.50 873.83 266.50C881.02 266.50 888.21 265.60 895.40 265.60C902.59 265.60 909.78 265.60 916.97 265.60C924.15 265.60 931.34 264.20 938.53 264.20C945.72 264.20 952.91 265.60 960.10 265.60C967.29 265.60 974.48 265.60 981.67 265.60C988.86 265.60 996.05 265.60 1003.24 265.60C1010.42 265.60 1017.61 266.50 1024.80 266.50C1031.99 266.50 1039.18 265.60 1046.37 265.60C1053.56 265.60 1060.75 265.60 1067.94 265.60C1075.13 265.60 1082.32 265.60 1089.51 265.60C1096.69 265.60 1103.88 264.20 1111.07 264.20C1118.26 264.20 1125.45 265.60 1132.64 265.60C1139.83 265.60 1147.02 265.60 1154.21 265.60C1161.40 265.60 1168.59 265.60 1175.78 265.60C1182.96 265.60 1190.15 266.50 1197.34 266.50C1204.53 266.50 1211.72 265.60 1218.91 265.60C1226.10 265.60 1233.29 265.60 1240.48 265.60C1247.67 265.60 1254.86 265.60 1262.05 265.60C1269.23 265.60 1276.42 264.20 1283.61 264.20C1290.80 264.20 1297.99 265.60 1305.18 265.60C1312.37 265.60 1319.56 265.60 1326.75 265.60C1333.94 265.60 1341.13 266.50 1348.32 266.50C1355.50 266.50 1362.69 265.60 1369.88 265.60C1377.07 265.60 1384.26 265.60 1391.45 265.60C1398.64 265.60 1405.83 265.60 1413.02 265.60C1420.21 265.60 1427.40 264.20 1434.59 264.20C1441.77 264.20 1448.96 265.60 1456.15 265.60C1463.34 265.60 1470.53 265.60 1477.72 265.60C1484.91 265.60 1492.10 265.60 1499.29 265.60C1506.48 265.60 1513.67 264.50 1520.86 264.50C1528.04 264.50 1535.23 266.30 1542.42 266.30C1549.61 266.30 1556.80 266.30 1563.99 266.30C1571.18 266.30 1578.37 266.30 1585.56 266.30C1592.75 266.30 1599.94 238.90 1607.13 238.90C1614.31 238.90 1621.50 265.40 1628.69 265.40C1635.88 265.40 1643.07 264.65 1650.26 264.50C1657.45 264.35 1664.64 264.28 1671.83 264.20C1679.02 264.12 1686.21 264.00 1693.40 264.00C1700.58 264.00 1707.77 264.00 1714.96 264.00C1722.15 264.00 1729.34 264.00 1736.53 264.00C1743.72 264.00 1750.91 263.89 1758.10 263.80C1765.29 263.71 1772.48 263.40 1779.67 263.40C1786.85 263.40 1794.04 263.71 1801.23 263.80C1808.42 263.89 1815.61 263.93 1822.80 264.00C1829.99 264.07 1837.18 264.20 1844.37 264.20C1851.56 264.20 1858.75 263.60 1865.94 263.60C1873.12 263.60 1880.31 264.00 1887.50 264.00C1894.69 264.00 1901.88 263.62 1909.07 263.40C1916.26 263.18 1923.45 262.70 1930.64 262.70C1937.83 262.70 1945.02 263.80 1952.21 263.80C1959.39 263.80 1966.58 262.90 1973.77 262.90C1980.96 262.90 1988.15 262.90 1995.34 262.90C2002.53 262.90 2009.72 263.60 2016.91 263.60C2024.10 263.60 2031.29 262.50 2038.48 262.50C2045.66 262.50 2052.85 262.50 2060.04 262.50C2067.23 262.50 2074.42 229.93 2081.61 226.60C2088.80 223.27 2095.99 222.20 2103.18 220.80C2110.37 219.40 2117.56 218.38 2124.75 217.50C2131.93 216.62 2139.12 216.49 2146.31 215.30C2153.50 214.11 2160.69 205.80 2167.88 205.80C2175.07 205.80 2182.26 206.37 2189.45 207.40C2196.64 208.43 2203.83 258.10 2211.02 258.10C2218.20 258.10 2225.39 236.70 2232.58 236.70C2239.77 236.70 2246.96 263.50 2254.15 263.50C2261.34 263.50 2268.53 198.10 2275.72 198.10C2282.91 198.10 2290.10 209.70 2297.29 209.70C2304.47 209.70 2311.66 180.00 2318.85 180.00C2326.04 180.00 2333.23 184.50 2340.42 186.80C2347.61 189.10 2354.80 193.80 2361.99 193.80C2369.18 193.80 2376.37 190.50 2383.56 189.10C2390.74 187.70 2397.93 185.30 2405.12 185.30C2412.31 185.30 2419.50 186.66 2426.69 188.70C2433.88 190.74 2441.07 218.80 2448.26 218.80C2455.45 218.80 2462.64 187.00 2469.83 187.00C2477.01 187.00 2484.20 263.94 2491.39 264.40C2498.58 264.86 2505.77 265.10 2512.96 265.10C2520.15 265.10 2527.34 264.90 2534.53 264.90C2541.72 264.90 2548.91 266.90 2556.10 266.90C2563.28 266.90 2570.47 264.30 2577.66 264.30C2584.85 264.30 2592.04 264.30 2599.23 264.30C2606.42 264.30 2613.61 266.30 2620.80 266.30C2627.99 266.30 2635.18 265.38 2642.37 264.90C2649.55 264.42 2656.74 263.40 2663.93 263.40C2671.12 263.40 2678.31 263.96 2685.50 264.30C2692.69 264.64 2699.88 265.50 2707.07 265.50C2714.26 265.50 2721.45 263.40 2728.64 263.40C2735.82 263.40 2743.01 265.30 2750.20 265.30C2757.39 265.30 2764.58 265.30 2771.77 265.30C2778.96 265.30 2786.15 264.30 2793.34 264.30C2800.53 264.30 2807.72 264.30 2814.91 264.30C2822.09 264.30 2829.28 265.30 2836.47 265.30C2843.66 265.30 2850.85 264.30 2858.04 264.30C2865.23 264.30 2872.42 265.00 2879.61 265.00C2886.80 265.00 2893.99 264.30 2901.18 264.30C2908.36 264.30 2915.55 264.30 2922.74 264.30C2929.93 264.30 2937.12 264.30 2944.31 264.30C2951.50 264.30 2958.69 264.20 2965.88 264.00C2973.07 263.80 2980.26 186.30 2987.45 186.30C2994.63 186.30 3001.82 264.90 3009.01 264.90C3016.20 264.90 3023.39 264.90 3030.58 264.90C3037.77 264.90 3044.96 263.72 3052.15 263.60C3059.34 263.48 3066.53 263.40 3073.72 263.40C3080.90 263.40 3088.09 263.93 3095.28 264.50C3102.47 265.07 3109.66 268.20 3116.85 268.20C3124.04 268.20 3131.23 263.40 3138.42 263.40C3145.61 263.40 3152.80 263.87 3159.99 264.00C3167.17 264.13 3174.36 264.30 3181.55 264.30C3188.74 264.30 3195.93 262.60 3203.12 262.60C3210.31 262.60 3217.50 263.60 3224.69 263.60C3231.88 263.60 3239.07 245.77 3246.26 232.90C3253.44 220.03 3260.63 180.90 3267.82 180.90C3275.01 180.90 3282.20 209.00 3289.39 209.00C3296.58 209.00 3303.77 199.50 3310.96 199.50C3318.15 199.50 3325.34 215.47 3332.53 225.30C3339.71 235.13 3346.90 257.36 3354.09 259.70C3361.28 262.04 3368.47 263.47 3375.66 263.60C3382.85 263.73 3390.04 263.80 3397.23 263.80C3404.42 263.80 3411.61 263.60 3418.80 263.60C3425.98 263.60 3433.17 263.60 3440.36 263.60C3447.55 263.60 3454.74 263.90 3461.93 263.90C3469.12 263.90 3476.31 263.90 3483.50 263.90L3483.50 269.30 L97.40 269.30Z" fill="rgba(68,115,210,0.1)"/><path d="M97.40 265.60C104.59 265.60 111.78 265.60 118.97 265.60C126.16 265.60 133.35 265.60 140.54 265.60C147.72 265.60 154.91 265.60 162.10 265.60C169.29 265.60 176.48 266.50 183.67 266.50C190.86 266.50 198.05 265.60 205.24 265.60C212.43 265.60 219.62 265.60 226.81 265.60C233.99 265.60 241.18 264.20 248.37 264.20C255.56 264.20 262.75 265.60 269.94 265.60C277.13 265.60 284.32 265.60 291.51 265.60C298.70 265.60 305.89 265.60 313.08 265.60C320.26 265.60 327.45 266.50 334.64 266.50C341.83 266.50 349.02 265.60 356.21 265.60C363.40 265.60 370.59 265.60 377.78 265.60C384.97 265.60 392.16 265.60 399.35 265.60C406.53 265.60 413.72 265.60 420.91 265.60C428.10 265.60 435.29 266.50 442.48 266.50C449.67 266.50 456.86 265.60 464.05 265.60C471.24 265.60 478.43 265.60 485.62 265.60C492.80 265.60 499.99 264.20 507.18 264.20C514.37 264.20 521.56 265.60 528.75 265.60C535.94 265.60 543.13 265.60 550.32 265.60C557.51 265.60 564.70 265.60 571.88 265.60C579.07 265.60 586.26 266.50 593.45 266.50C600.64 266.50 607.83 265.97 615.02 265.60C622.21 265.23 629.40 264.20 636.59 264.20C643.78 264.20 650.97 265.60 658.15 265.60C665.34 265.60 672.53 265.60 679.72 265.60C686.91 265.60 694.10 266.50 701.29 266.50C708.48 266.50 715.67 265.60 722.86 265.60C730.05 265.60 737.24 265.60 744.43 265.60C751.61 265.60 758.80 264.20 765.99 264.20C773.18 264.20 780.37 265.60 787.56 265.60C794.75 265.60 801.94 265.60 809.13 265.60C816.32 265.60 823.51 265.60 830.70 265.60C837.88 265.60 845.07 265.60 852.26 265.60C859.45 265.60 866.64 266.50 873.83 266.50C881.02 266.50 888.21 265.60 895.40 265.60C902.59 265.60 909.78 265.60 916.97 265.60C924.15 265.60 931.34 264.20 938.53 264.20C945.72 264.20 952.91 265.60 960.10 265.60C967.29 265.60 974.48 265.60 981.67 265.60C988.86 265.60 996.05 265.60 1003.24 265.60C1010.42 265.60 1017.61 266.50 1024.80 266.50C1031.99 266.50 1039.18 265.60 1046.37 265.60C1053.56 265.60 1060.75 265.60 1067.94 265.60C1075.13 265.60 1082.32 265.60 1089.51 265.60C1096.69 265.60 1103.88 264.20 1111.07 264.20C1118.26 264.20 1125.45 265.60 1132.64 265.60C1139.83 265.60 1147.02 265.60 1154.21 265.60C1161.40 265.60 1168.59 265.60 1175.78 265.60C1182.96 265.60 1190.15 266.50 1197.34 266.50C1204.53 266.50 1211.72 265.60 1218.91 265.60C1226.10 265.60 1233.29 265.60 1240.48 265.60C1247.67 265.60 1254.86 265.60 1262.05 265.60C1269.23 265.60 1276.42 264.20 1283.61 264.20C1290.80 264.20 1297.99 265.60 1305.18 265.60C1312.37 265.60 1319.56 265.60 1326.75 265.60C1333.94 265.60 1341.13 266.50 1348.32 266.50C1355.50 266.50 1362.69 265.60 1369.88 265.60C1377.07 265.60 1384.26 265.60 1391.45 265.60C1398.64 265.60 1405.83 265.60 1413.02 265.60C1420.21 265.60 1427.40 264.20 1434.59 264.20C1441.77 264.20 1448.96 265.60 1456.15 265.60C1463.34 265.60 1470.53 265.60 1477.72 265.60C1484.91 265.60 1492.10 265.60 1499.29 265.60C1506.48 265.60 1513.67 264.50 1520.86 264.50C1528.04 264.50 1535.23 266.30 1542.42 266.30C1549.61 266.30 1556.80 266.30 1563.99 266.30C1571.18 266.30 1578.37 266.30 1585.56 266.30C1592.75 266.30 1599.94 238.90 1607.13 238.90C1614.31 238.90 1621.50 265.40 1628.69 265.40C1635.88 265.40 1643.07 264.65 1650.26 264.50C1657.45 264.35 1664.64 264.28 1671.83 264.20C1679.02 264.12 1686.21 264.00 1693.40 264.00C1700.58 264.00 1707.77 264.00 1714.96 264.00C1722.15 264.00 1729.34 264.00 1736.53 264.00C1743.72 264.00 1750.91 263.89 1758.10 263.80C1765.29 263.71 1772.48 263.40 1779.67 263.40C1786.85 263.40 1794.04 263.71 1801.23 263.80C1808.42 263.89 1815.61 263.93 1822.80 264.00C1829.99 264.07 1837.18 264.20 1844.37 264.20C1851.56 264.20 1858.75 263.60 1865.94 263.60C1873.12 263.60 1880.31 264.00 1887.50 264.00C1894.69 264.00 1901.88 263.62 1909.07 263.40C1916.26 263.18 1923.45 262.70 1930.64 262.70C1937.83 262.70 1945.02 263.80 1952.21 263.80C1959.39 263.80 1966.58 262.90 1973.77 262.90C1980.96 262.90 1988.15 262.90 1995.34 262.90C2002.53 262.90 2009.72 263.60 2016.91 263.60C2024.10 263.60 2031.29 262.50 2038.48 262.50C2045.66 262.50 2052.85 262.50 2060.04 262.50C2067.23 262.50 2074.42 229.93 2081.61 226.60C2088.80 223.27 2095.99 222.20 2103.18 220.80C2110.37 219.40 2117.56 218.38 2124.75 217.50C2131.93 216.62 2139.12 216.49 2146.31 215.30C2153.50 214.11 2160.69 205.80 2167.88 205.80C2175.07 205.80 2182.26 206.37 2189.45 207.40C2196.64 208.43 2203.83 258.10 2211.02 258.10C2218.20 258.10 2225.39 236.70 2232.58 236.70C2239.77 236.70 2246.96 263.50 2254.15 263.50C2261.34 263.50 2268.53 198.10 2275.72 198.10C2282.91 198.10 2290.10 209.70 2297.29 209.70C2304.47 209.70 2311.66 180.00 2318.85 180.00C2326.04 180.00 2333.23 184.50 2340.42 186.80C2347.61 189.10 2354.80 193.80 2361.99 193.80C2369.18 193.80 2376.37 190.50 2383.56 189.10C2390.74 187.70 2397.93 185.30 2405.12 185.30C2412.31 185.30 2419.50 186.66 2426.69 188.70C2433.88 190.74 2441.07 218.80 2448.26 218.80C2455.45 218.80 2462.64 187.00 2469.83 187.00C2477.01 187.00 2484.20 263.94 2491.39 264.40C2498.58 264.86 2505.77 265.10 2512.96 265.10C2520.15 265.10 2527.34 264.90 2534.53 264.90C2541.72 264.90 2548.91 266.90 2556.10 266.90C2563.28 266.90 2570.47 264.30 2577.66 264.30C2584.85 264.30 2592.04 264.30 2599.23 264.30C2606.42 264.30 2613.61 266.30 2620.80 266.30C2627.99 266.30 2635.18 265.38 2642.37 264.90C2649.55 264.42 2656.74 263.40 2663.93 263.40C2671.12 263.40 2678.31 263.96 2685.50 264.30C2692.69 264.64 2699.88 265.50 2707.07 265.50C2714.26 265.50 2721.45 263.40 2728.64 263.40C2735.82 263.40 2743.01 265.30 2750.20 265.30C2757.39 265.30 2764.58 265.30 2771.77 265.30C2778.96 265.30 2786.15 264.30 2793.34 264.30C2800.53 264.30 2807.72 264.30 2814.91 264.30C2822.09 264.30 2829.28 265.30 2836.47 265.30C2843.66 265.30 2850.85 264.30 2858.04 264.30C2865.23 264.30 2872.42 265.00 2879.61 265.00C2886.80 265.00 2893.99 264.30 2901.18 264.30C2908.36 264.30 2915.55 264.30 2922.74 264.30C2929.93 264.30 2937.12 264.30 2944.31 264.30C2951.50 264.30 2958.69 264.20 2965.88 264.00C2973.07 263.80 2980.26 186.30 2987.45 186.30C2994.63 186.30 3001.82 264.90 3009.01 264.90C3016.20 264.90 3023.39 264.90 3030.58 264.90C3037.77 264.90 3044.96 263.72 3052.15 263.60C3059.34 263.48 3066.53 263.40 3073.72 263.40C3080.90 263.40 3088.09 263.93 3095.28 264.50C3102.47 265.07 3109.66 268.20 3116.85 268.20C3124.04 268.20 3131.23 263.40 3138.42 263.40C3145.61 263.40 3152.80 263.87 3159.99 264.00C3167.17 264.13 3174.36 264.30 3181.55 264.30C3188.74 264.30 3195.93 262.60 3203.12 262.60C3210.31 262.60 3217.50 263.60 3224.69 263.60C3231.88 263.60 3239.07 245.77 3246.26 232.90C3253.44 220.03 3260.63 180.90 3267.82 180.90C3275.01 180.90 3282.20 209.00 3289.39 209.00C3296.58 209.00 3303.77 199.50 3310.96 199.50C3318.15 199.50 3325.34 215.47 3332.53 225.30C3339.71 235.13 3346.90 257.36 3354.09 259.70C3361.28 262.04 3368.47 263.47 3375.66 263.60C3382.85 263.73 3390.04 263.80 3397.23 263.80C3404.42 263.80 3411.61 263.60 3418.80 263.60C3425.98 263.60 3433.17 263.60 3440.36 263.60C3447.55 263.60 3454.74 263.90 3461.93 263.90C3469.12 263.90 3476.31 263.90 3483.50 263.90" fill="none" stroke="rgb(68,115,210)" stroke-width="3.1" stroke-linejoin="round"/><path d="M97.40 125.69C104.59 125.69 111.78 125.69 118.97 125.69C126.16 125.69 133.35 125.69 140.54 125.69C147.72 125.69 154.91 125.69 162.10 125.69C169.29 125.69 176.48 129.73 183.67 129.73C190.86 129.73 198.05 129.73 205.24 129.73C212.43 129.73 219.62 129.73 226.81 129.73C233.99 129.73 241.18 129.73 248.37 129.73C255.56 129.73 262.75 129.73 269.94 129.73C277.13 129.73 284.32 133.77 291.51 133.77C298.70 133.77 305.89 133.77 313.08 133.77C320.26 133.77 327.45 133.77 334.64 133.77C341.83 133.77 349.02 133.77 356.21 133.77C363.40 133.77 370.59 133.77 377.78 133.77C384.97 133.77 392.16 137.81 399.35 137.81C406.53 137.81 413.72 137.81 420.91 137.81C428.10 137.81 435.29 137.81 442.48 137.81C449.67 137.81 456.86 137.81 464.05 137.81C471.24 137.81 478.43 141.85 485.62 141.85C492.80 141.85 499.99 141.85 507.18 141.85C514.37 141.85 521.56 141.85 528.75 141.85C535.94 141.85 543.13 141.85 550.32 141.85C557.51 141.85 564.70 141.85 571.88 141.85C579.07 141.85 586.26 145.88 593.45 145.88C600.64 145.88 607.83 145.88 615.02 145.88C622.21 145.88 629.40 145.88 636.59 145.88C643.78 145.88 650.97 145.88 658.15 145.88C665.34 145.88 672.53 149.92 679.72 149.92C686.91 149.92 694.10 149.92 701.29 149.92C708.48 149.92 715.67 149.92 722.86 149.92C730.05 149.92 737.24 149.92 744.43 149.92C751.61 149.92 758.80 149.92 765.99 149.92C773.18 149.92 780.37 153.96 787.56 153.96C794.75 153.96 801.94 153.96 809.13 153.96C816.32 153.96 823.51 153.96 830.70 153.96C837.88 153.96 845.07 153.96 852.26 153.96C859.45 153.96 866.64 158.00 873.83 158.00C881.02 158.00 888.21 158.00 895.40 158.00C902.59 158.00 909.78 158.00 916.97 158.00C924.15 158.00 931.34 158.00 938.53 158.00C945.72 158.00 952.91 158.00 960.10 158.00C967.29 158.00 974.48 162.04 981.67 162.04C988.86 162.04 996.05 162.04 1003.24 162.04C1010.42 162.04 1017.61 162.04 1024.80 162.04C1031.99 162.04 1039.18 162.04 1046.37 162.04C1053.56 162.04 1060.75 166.07 1067.94 166.07C1075.13 166.07 1082.32 166.07 1089.51 166.07C1096.69 166.07 1103.88 166.07 1111.07 166.07C1118.26 166.07 1125.45 166.07 1132.64 166.07C1139.83 166.07 1147.02 166.07 1154.21 166.07C1161.40 166.07 1168.59 170.11 1175.78 170.11C1182.96 170.11 1190.15 170.11 1197.34 170.11C1204.53 170.11 1211.72 170.11 1218.91 170.11C1226.10 170.11 1233.29 170.11 1240.48 170.11C1247.67 170.11 1254.86 174.15 1262.05 174.15C1269.23 174.15 1276.42 174.15 1283.61 174.15C1290.80 174.15 1297.99 174.15 1305.18 174.15C1312.37 174.15 1319.56 174.15 1326.75 174.15C1333.94 174.15 1341.13 174.15 1348.32 174.15C1355.50 174.15 1362.69 178.19 1369.88 178.19C1377.07 178.19 1384.26 178.19 1391.45 178.19C1398.64 178.19 1405.83 178.19 1413.02 178.19C1420.21 178.19 1427.40 178.19 1434.59 178.19C1441.77 178.19 1448.96 178.19 1456.15 178.19C1463.34 178.19 1470.53 182.23 1477.72 182.23C1484.91 182.23 1492.10 182.23 1499.29 182.23C1506.48 182.23 1513.67 182.23 1520.86 182.23C1528.04 182.23 1535.23 182.23 1542.42 182.23C1549.61 182.23 1556.80 182.23 1563.99 182.23C1571.18 182.23 1578.37 182.23 1585.56 182.23C1592.75 182.23 1599.94 186.26 1607.13 186.26C1614.31 186.26 1621.50 186.26 1628.69 186.26C1635.88 186.26 1643.07 186.26 1650.26 186.26C1657.45 186.26 1664.64 186.26 1671.83 186.26C1679.02 186.26 1686.21 186.26 1693.40 186.26C1700.58 186.26 1707.77 186.26 1714.96 186.26C1722.15 186.26 1729.34 186.26 1736.53 186.26C1743.72 186.26 1750.91 186.26 1758.10 186.26C1765.29 186.26 1772.48 182.23 1779.67 182.23C1786.85 182.23 1794.04 182.23 1801.23 182.23C1808.42 182.23 1815.61 182.23 1822.80 182.23C1829.99 182.23 1837.18 182.23 1844.37 182.23C1851.56 182.23 1858.75 178.19 1865.94 178.19C1873.12 178.19 1880.31 178.19 1887.50 178.19C1894.69 178.19 1901.88 174.15 1909.07 174.15C1916.26 174.15 1923.45 174.15 1930.64 174.15C1937.83 174.15 1945.02 170.11 1952.21 170.11C1959.39 170.11 1966.58 170.11 1973.77 170.11C1980.96 170.11 1988.15 167.42 1995.34 166.07C2002.53 164.73 2009.72 162.04 2016.91 162.04C2024.10 162.04 2031.29 162.04 2038.48 162.04C2045.66 162.04 2052.85 159.34 2060.04 158.00C2067.23 156.65 2074.42 153.96 2081.61 153.96C2088.80 153.96 2095.99 156.65 2103.18 158.00C2110.37 159.34 2117.56 160.69 2124.75 162.04C2131.93 163.38 2139.12 164.73 2146.31 166.07C2153.50 167.42 2160.69 170.11 2167.88 170.11C2175.07 170.11 2182.26 170.11 2189.45 170.11C2196.64 170.11 2203.83 167.42 2211.02 166.07C2218.20 164.73 2225.39 163.83 2232.58 162.04C2239.77 160.24 2246.96 153.96 2254.15 153.96C2261.34 153.96 2268.53 153.96 2275.72 153.96C2282.91 153.96 2290.10 153.96 2297.29 153.96C2304.47 153.96 2311.66 153.96 2318.85 153.96C2326.04 153.96 2333.23 153.96 2340.42 153.96C2347.61 153.96 2354.80 153.96 2361.99 153.96C2369.18 153.96 2376.37 149.92 2383.56 149.92C2390.74 149.92 2397.93 149.92 2405.12 149.92C2412.31 149.92 2419.50 149.92 2426.69 149.92C2433.88 149.92 2441.07 144.54 2448.26 141.85C2455.45 139.15 2462.64 135.56 2469.83 133.77C2477.01 131.98 2484.20 131.89 2491.39 129.73C2498.58 127.58 2505.77 118.96 2512.96 113.58C2520.15 108.20 2527.34 101.02 2534.53 97.43C2541.72 93.84 2548.91 92.04 2556.10 89.35C2563.28 86.66 2570.47 81.28 2577.66 81.28C2584.85 81.28 2592.04 81.28 2599.23 81.28C2606.42 81.28 2613.61 73.20 2620.80 73.20C2627.99 73.20 2635.18 73.20 2642.37 73.20C2649.55 73.20 2656.74 73.20 2663.93 73.20C2671.12 73.20 2678.31 73.20 2685.50 73.20C2692.69 73.20 2699.88 73.20 2707.07 73.20C2714.26 73.20 2721.45 73.20 2728.64 73.20C2735.82 73.20 2743.01 73.20 2750.20 73.20C2757.39 73.20 2764.58 73.20 2771.77 73.20C2778.96 73.20 2786.15 73.20 2793.34 73.20C2800.53 73.20 2807.72 73.20 2814.91 73.20C2822.09 73.20 2829.28 73.20 2836.47 73.20C2843.66 73.20 2850.85 73.20 2858.04 73.20C2865.23 73.20 2872.42 73.20 2879.61 73.20C2886.80 73.20 2893.99 73.20 2901.18 73.20C2908.36 73.20 2915.55 73.20 2922.74 73.20C2929.93 73.20 2937.12 73.20 2944.31 73.20C2951.50 73.20 2958.69 73.20 2965.88 73.20C2973.07 73.20 2980.26 73.20 2987.45 73.20C2994.63 73.20 3001.82 73.20 3009.01 73.20C3016.20 73.20 3023.39 73.20 3030.58 73.20C3037.77 73.20 3044.96 73.20 3052.15 73.20C3059.34 73.20 3066.53 73.20 3073.72 73.20C3080.90 73.20 3088.09 73.20 3095.28 73.20C3102.47 73.20 3109.66 73.20 3116.85 73.20C3124.04 73.20 3131.23 73.20 3138.42 73.20C3145.61 73.20 3152.80 73.20 3159.99 73.20C3167.17 73.20 3174.36 73.20 3181.55 73.20C3188.74 73.20 3195.93 73.20 3203.12 73.20C3210.31 73.20 3217.50 73.20 3224.69 73.20C3231.88 73.20 3239.07 73.20 3246.26 73.20C3253.44 73.20 3260.63 73.20 3267.82 73.20C3275.01 73.20 3282.20 73.20 3289.39 73.20C3296.58 73.20 3303.77 73.20 3310.96 73.20C3318.15 73.20 3325.34 73.20 3332.53 73.20C3339.71 73.20 3346.90 73.20 3354.09 73.20C3361.28 73.20 3368.47 73.20 3375.66 73.20C3382.85 73.20 3390.04 73.20 3397.23 73.20C3404.42 73.20 3411.61 73.20 3418.80 73.20C3425.98 73.20 3433.17 73.20 3440.36 73.20C3447.55 73.20 3454.74 73.20 3461.93 73.20C3469.12 73.20 3476.31 73.20 3483.50 73.20" fill="none" stroke="rgba(232,110,44,0.82)" stroke-width="1.35" stroke-dasharray="7.6 7.6"/></svg>
<div class="t" style="left:32.80px;top:440px;font-size:18.00px;line-height:20px;color:rgb(37,41,45);letter-spacing:-0.228px;-webkit-text-stroke:0.16px rgb(37,41,45);">15 kW</div>
<div class="t" style="left:31.90px;top:502px;font-size:18.00px;line-height:20px;color:rgb(37,41,45);-webkit-text-stroke:0.16px rgb(37,41,45);">10 kW</div>
<div class="t" style="left:41.30px;top:563px;font-size:18.00px;line-height:20px;color:rgb(37,41,45);letter-spacing:0.199px;-webkit-text-stroke:0.16px rgb(37,41,45);">5 kW</div>
<div class="t" style="left:40.70px;top:624px;font-size:18.00px;line-height:20px;color:rgb(37,41,45);letter-spacing:0.399px;-webkit-text-stroke:0.16px rgb(37,41,45);">0 kW</div>
<div class="t" style="left:33.40px;top:685px;font-size:18.00px;line-height:20px;color:rgb(37,41,45);letter-spacing:0.626px;-webkit-text-stroke:0.16px rgb(37,41,45);">-5 kW</div>
<div class="t" style="left:23.90px;top:746px;font-size:18.00px;line-height:20px;color:rgb(37,41,45);letter-spacing:0.399px;-webkit-text-stroke:0.16px rgb(37,41,45);">-10 kW</div>
<div class="t" style="left:24.60px;top:808px;font-size:18.00px;line-height:20px;color:rgb(37,41,45);letter-spacing:0.259px;-webkit-text-stroke:0.16px rgb(37,41,45);">-15 kW</div>
<div class="t" style="left:72.85px;top:857px;font-size:18.00px;line-height:20px;color:rgb(37,41,45);letter-spacing:1.015px;-webkit-text-stroke:0.16px rgb(37,41,45);">00:00</div>
<div class="t" style="left:202.25px;top:857px;font-size:18.00px;line-height:20px;color:rgb(37,41,45);letter-spacing:1.015px;-webkit-text-stroke:0.16px rgb(37,41,45);">00:30</div>
<div class="t" style="left:333.59px;top:857px;font-size:18.00px;line-height:20px;color:rgb(37,41,45);letter-spacing:0.047px;-webkit-text-stroke:0.16px rgb(37,41,45);">01:00</div>
<div class="t" style="left:463.00px;top:857px;font-size:18.00px;line-height:20px;color:rgb(37,41,45);letter-spacing:0.047px;-webkit-text-stroke:0.16px rgb(37,41,45);">01:30</div>
<div class="t" style="left:590.73px;top:857px;font-size:18.00px;line-height:20px;color:rgb(37,41,45);letter-spacing:0.883px;-webkit-text-stroke:0.16px rgb(37,41,45);">02:00</div>
<div class="t" style="left:720.14px;top:857px;font-size:18.00px;line-height:20px;color:rgb(37,41,45);letter-spacing:0.883px;-webkit-text-stroke:0.16px rgb(37,41,45);">02:30</div>
<div class="t" style="left:849.28px;top:857px;font-size:18.00px;line-height:20px;color:rgb(37,41,45);letter-spacing:1.015px;-webkit-text-stroke:0.16px rgb(37,41,45);">03:00</div>
<div class="t" style="left:978.68px;top:857px;font-size:18.00px;line-height:20px;color:rgb(37,41,45);letter-spacing:1.015px;-webkit-text-stroke:0.16px rgb(37,41,45);">03:30</div>
<div class="t" style="left:1107.91px;top:857px;font-size:18.00px;line-height:20px;color:rgb(37,41,45);letter-spacing:1.103px;-webkit-text-stroke:0.16px rgb(37,41,45);">04:00</div>
<div class="t" style="left:1237.32px;top:857px;font-size:18.00px;line-height:20px;color:rgb(37,41,45);letter-spacing:1.103px;-webkit-text-stroke:0.16px rgb(37,41,45);">04:30</div>
<div class="t" style="left:1367.07px;top:857px;font-size:18.00px;line-height:20px;color:rgb(37,41,45);letter-spacing:0.927px;-webkit-text-stroke:0.16px rgb(37,41,45);">05:00</div>
<div class="t" style="left:1496.48px;top:857px;font-size:18.00px;line-height:20px;color:rgb(37,41,45);letter-spacing:0.927px;-webkit-text-stroke:0.16px rgb(37,41,45);">05:30</div>
<div class="t" style="left:1625.71px;top:857px;font-size:18.00px;line-height:20px;color:rgb(37,41,45);letter-spacing:1.015px;-webkit-text-stroke:0.16px rgb(37,41,45);">06:00</div>
<div class="t" style="left:1755.11px;top:857px;font-size:18.00px;line-height:20px;color:rgb(37,41,45);letter-spacing:1.015px;-webkit-text-stroke:0.16px rgb(37,41,45);">06:30</div>
<div class="t" style="left:1885.40px;top:857px;font-size:18.00px;line-height:20px;color:rgb(37,41,45);letter-spacing:0.575px;-webkit-text-stroke:0.16px rgb(37,41,45);">07:00</div>
<div class="t" style="left:2014.80px;top:857px;font-size:18.00px;line-height:20px;color:rgb(37,41,45);letter-spacing:0.575px;-webkit-text-stroke:0.16px rgb(37,41,45);">07:30</div>
<div class="t" style="left:2143.33px;top:857px;font-size:18.00px;line-height:20px;color:rgb(37,41,45);letter-spacing:1.015px;-webkit-text-stroke:0.16px rgb(37,41,45);">08:00</div>
<div class="t" style="left:2272.73px;top:857px;font-size:18.00px;line-height:20px;color:rgb(37,41,45);letter-spacing:1.015px;-webkit-text-stroke:0.16px rgb(37,41,45);">08:30</div>
<div class="t" style="left:2402.14px;top:857px;font-size:18.00px;line-height:20px;color:rgb(37,41,45);letter-spacing:1.015px;-webkit-text-stroke:0.16px rgb(37,41,45);">09:00</div>
<div class="t" style="left:2531.54px;top:857px;font-size:18.00px;line-height:20px;color:rgb(37,41,45);letter-spacing:1.015px;-webkit-text-stroke:0.16px rgb(37,41,45);">09:30</div>
<div class="t" style="left:2662.88px;top:857px;font-size:18.00px;line-height:20px;color:rgb(37,41,45);letter-spacing:0.047px;-webkit-text-stroke:0.16px rgb(37,41,45);">10:00</div>
<div class="t" style="left:2792.29px;top:857px;font-size:18.00px;line-height:20px;color:rgb(37,41,45);letter-spacing:0.047px;-webkit-text-stroke:0.16px rgb(37,41,45);">10:30</div>
<div class="t" style="left:2923.63px;top:857px;font-size:18.00px;line-height:20px;color:rgb(37,41,45);letter-spacing:-0.587px;-webkit-text-stroke:0.16px rgb(37,41,45);">11:00</div>
<div class="t" style="left:3053.04px;top:857px;font-size:18.00px;line-height:20px;color:rgb(37,41,45);letter-spacing:-0.587px;-webkit-text-stroke:0.16px rgb(37,41,45);">11:30</div>
<div class="t" style="left:3180.77px;top:857px;font-size:18.00px;line-height:20px;color:rgb(37,41,45);letter-spacing:-0.085px;-webkit-text-stroke:0.16px rgb(37,41,45);">12:00</div>
<div class="t" style="left:3310.17px;top:857px;font-size:18.00px;line-height:20px;color:rgb(37,41,45);letter-spacing:-0.085px;-webkit-text-stroke:0.16px rgb(37,41,45);">12:30</div>
<div class="t" style="left:3439.31px;top:857px;font-size:18.00px;line-height:20px;color:rgb(37,41,45);letter-spacing:0.047px;-webkit-text-stroke:0.16px rgb(37,41,45);">13:00</div>
<div class="t" style="left:3504.20px;top:428px;font-size:18.00px;line-height:20px;color:rgb(37,41,45);letter-spacing:-0.813px;-webkit-text-stroke:0.16px rgb(37,41,45);">100%</div>
<div class="t" style="left:3504.20px;top:509px;font-size:18.00px;line-height:20px;color:rgb(37,41,45);letter-spacing:-0.414px;-webkit-text-stroke:0.16px rgb(37,41,45);">80%</div>
<div class="t" style="left:3504.20px;top:590px;font-size:18.00px;line-height:20px;color:rgb(37,41,45);letter-spacing:-0.314px;-webkit-text-stroke:0.16px rgb(37,41,45);">60%</div>
<div class="t" style="left:3504.20px;top:670px;font-size:18.00px;line-height:20px;color:rgb(37,41,45);letter-spacing:-0.214px;-webkit-text-stroke:0.16px rgb(37,41,45);">40%</div>
<div class="t" style="left:3504.20px;top:751px;font-size:18.00px;line-height:20px;color:rgb(37,41,45);letter-spacing:-0.514px;-webkit-text-stroke:0.16px rgb(37,41,45);">20%</div>
<div class="t" style="left:3504.20px;top:832px;font-size:18.00px;line-height:20px;color:rgb(37,41,45);letter-spacing:-1.260px;-webkit-text-stroke:0.16px rgb(37,41,45);">0%</div>
<div class="a" style="left:30.30px;top:892.40px;width:20.60px;height:5.80px;background:rgb(106,164,86);border-radius:3px;"></div>
<div class="t" style="left:63.40px;top:884px;font-size:19.20px;line-height:21px;color:rgb(37,41,45);letter-spacing:-0.154px;-webkit-text-stroke:0.16px rgb(37,41,45);">PV Leistung</div>
<div class="a" style="left:182.20px;top:892.40px;width:20.60px;height:5.80px;background:rgb(217,182,60);border-radius:3px;"></div>
<div class="t" style="left:215.50px;top:884px;font-size:19.20px;line-height:21px;color:rgb(37,41,45);letter-spacing:0.033px;-webkit-text-stroke:0.16px rgb(37,41,45);">Batterie</div>
<div class="a" style="left:298.20px;top:892.40px;width:20.60px;height:5.80px;background:rgb(101,146,235);border-radius:3px;"></div>
<div class="t" style="left:331.20px;top:884px;font-size:19.20px;line-height:21px;color:rgb(37,41,45);letter-spacing:0.040px;-webkit-text-stroke:0.16px rgb(37,41,45);">Netz</div>
<div class="a" style="left:387.00px;top:892.40px;width:20.60px;height:5.80px;background:rgb(68,115,210);border-radius:3px;"></div>
<div class="t" style="left:420.50px;top:884px;font-size:19.20px;line-height:21px;color:rgb(37,41,45);letter-spacing:0.016px;-webkit-text-stroke:0.16px rgb(37,41,45);">Hausverbrauch</div>
<div class="a" style="left:3392.20px;top:892.40px;width:20.60px;height:5.80px;background:rgb(232,110,44);border-radius:3px;"></div>
<div class="t" style="left:3425.60px;top:884px;font-size:19.20px;line-height:21px;color:rgb(37,41,45);letter-spacing:-0.160px;-webkit-text-stroke:0.16px rgb(37,41,45);">Batterie SoC</div>
<svg class="a" style="left:10.00px;top:934.00px;" width="1474.00" height="445.00" viewBox="0 0 1474 445"><rect x="1.25" y="1.25" width="1470.50" height="441.70" rx="3.2" fill="#fff" stroke="rgb(227,228,230)" stroke-width="1.70"/></svg>
<div class="t" style="left:24.50px;top:947px;font-size:22.40px;line-height:25px;color:rgb(37,41,45);letter-spacing:0.829px;-webkit-text-stroke:0.45px rgb(37,41,45);">Wasserverbrauch</div>
<svg class="a" style="left:237.30px;top:948.40px;overflow:visible;" width="21.40" height="21.40" viewBox="0 0 24 24"><g fill="none" stroke="rgb(51,97,216)" stroke-width="2.00" stroke-linecap="round" stroke-linejoin="round"><circle cx="12" cy="12" r="10.6"/><path d="M12 6.4V12H7.2"/></g></svg>
<div class="t" style="left:266.60px;top:947px;font-size:22.40px;line-height:25px;color:rgb(51,97,216);letter-spacing:0.494px;-webkit-text-stroke:0.16px rgb(51,97,216);">Last 7 days</div>
<div class="a" style="left:81.50px;top:1043.53px;width:1377.20px;height:1.10px;background:rgb(233,235,236);"></div>
<div class="t" style="left:24.93px;top:1034px;font-size:18.00px;line-height:20px;color:rgb(37,41,45);letter-spacing:0.707px;-webkit-text-stroke:0.16px rgb(37,41,45);">600 L</div>
<div class="a" style="left:81.50px;top:1123.17px;width:1377.20px;height:1.10px;background:rgb(233,235,236);"></div>
<div class="t" style="left:24.58px;top:1114px;font-size:18.00px;line-height:20px;color:rgb(37,41,45);letter-spacing:0.795px;-webkit-text-stroke:0.16px rgb(37,41,45);">400 L</div>
<div class="a" style="left:81.50px;top:1202.81px;width:1377.20px;height:1.10px;background:rgb(233,235,236);"></div>
<div class="t" style="left:25.46px;top:1193px;font-size:18.00px;line-height:20px;color:rgb(37,41,45);letter-spacing:0.575px;-webkit-text-stroke:0.16px rgb(37,41,45);">200 L</div>
<div class="a" style="left:81.50px;top:1282.45px;width:1377.20px;height:1.10px;background:rgb(233,235,236);"></div>
<div class="t" style="left:47.10px;top:1273px;font-size:18.00px;line-height:20px;color:rgb(37,41,45);letter-spacing:0.336px;-webkit-text-stroke:0.16px rgb(37,41,45);">0 L</div>
<svg class="a" style="left:0;top:1000px" width="3586" height="290" viewBox="0 1000 3586 290"><path d="M88.10 1283.00L88.10 1179.17A22.00 22.00 0 0 1 110.10 1157.17L235.82 1157.17A22.00 22.00 0 0 1 257.82 1179.17L257.82 1283.00L88.10 1283.00Z" fill="rgba(180,195,225,0.8)" stroke="rgb(180,195,225)" stroke-width="1.6"/><path d="M259.42 1283.00L259.42 1052.94A22.00 22.00 0 0 1 281.42 1030.94L407.14 1030.94A22.00 22.00 0 0 1 429.14 1052.94L429.14 1283.00L259.42 1283.00Z" fill="rgba(36,76,166,0.8)" stroke="rgb(36,76,166)" stroke-width="1.6"/><path d="M430.74 1283.00L430.74 1102.72A22.00 22.00 0 0 1 452.74 1080.72L578.46 1080.72A22.00 22.00 0 0 1 600.46 1102.72L600.46 1283.00L430.74 1283.00Z" fill="rgba(91,121,189,0.8)" stroke="rgb(91,121,189)" stroke-width="1.6"/><path d="M602.06 1283.00L602.06 1089.58A22.00 22.00 0 0 1 624.06 1067.58L749.78 1067.58A22.00 22.00 0 0 1 771.78 1089.58L771.78 1283.00L602.06 1283.00Z" fill="rgba(76,109,182,0.8)" stroke="rgb(76,109,182)" stroke-width="1.6"/><path d="M773.38 1283.00L773.38 1137.36A22.00 22.00 0 0 1 795.38 1115.36L921.10 1115.36A22.00 22.00 0 0 1 943.10 1137.36L943.10 1283.00L773.38 1283.00Z" fill="rgba(129,152,204,0.8)" stroke="rgb(129,152,204)" stroke-width="1.6"/><path d="M944.70 1283.00L944.70 1097.94A22.00 22.00 0 0 1 966.70 1075.94L1092.42 1075.94A22.00 22.00 0 0 1 1114.42 1097.94L1114.42 1283.00L944.70 1283.00Z" fill="rgba(85,116,186,0.8)" stroke="rgb(85,116,186)" stroke-width="1.6"/><path d="M1116.02 1283.00L1116.02 1146.12A22.00 22.00 0 0 1 1138.02 1124.12L1263.74 1124.12A22.00 22.00 0 0 1 1285.74 1146.12L1285.74 1283.00L1116.02 1283.00Z" fill="rgba(139,160,208,0.8)" stroke="rgb(139,160,208)" stroke-width="1.6"/><path d="M1287.34 1283.00L1287.34 1238.90A22.00 22.00 0 0 1 1309.34 1216.90L1435.06 1216.90A22.00 22.00 0 0 1 1457.06 1238.90L1457.06 1283.00L1287.34 1283.00Z" fill="rgba(240,244,249,0.8)" stroke="rgb(240,244,249)" stroke-width="1.6"/></svg>
<div class="t" style="left:150.25px;top:1136px;font-size:18.00px;line-height:20px;color:rgb(37,41,45);letter-spacing:-0.111px;-webkit-text-stroke:0.16px rgb(37,41,45);">318 L</div>
<div class="t" style="left:149.10px;top:1307px;font-size:18.00px;line-height:20px;color:rgb(37,41,45);letter-spacing:0.465px;-webkit-text-stroke:0.16px rgb(37,41,45);">07.06</div>
<div class="t" style="left:320.02px;top:1010px;font-size:18.00px;line-height:20px;color:rgb(37,41,45);letter-spacing:0.664px;-webkit-text-stroke:0.16px rgb(37,41,45);">635 L</div>
<div class="t" style="left:319.54px;top:1307px;font-size:18.00px;line-height:20px;color:rgb(37,41,45);letter-spacing:0.905px;-webkit-text-stroke:0.16px rgb(37,41,45);">08.06</div>
<div class="t" style="left:492.69px;top:1060px;font-size:18.00px;line-height:20px;color:rgb(37,41,45);letter-spacing:-0.011px;-webkit-text-stroke:0.16px rgb(37,41,45);">510 L</div>
<div class="t" style="left:490.86px;top:1307px;font-size:18.00px;line-height:20px;color:rgb(37,41,45);letter-spacing:0.905px;-webkit-text-stroke:0.16px rgb(37,41,45);">09.06</div>
<div class="t" style="left:662.51px;top:1047px;font-size:18.00px;line-height:20px;color:rgb(37,41,45);letter-spacing:0.739px;-webkit-text-stroke:0.16px rgb(37,41,45);">543 L</div>
<div class="t" style="left:664.11px;top:1307px;font-size:18.00px;line-height:20px;color:rgb(37,41,45);letter-spacing:-0.063px;-webkit-text-stroke:0.16px rgb(37,41,45);">10.06</div>
<div class="t" style="left:833.83px;top:1094px;font-size:18.00px;line-height:20px;color:rgb(37,41,45);letter-spacing:0.739px;-webkit-text-stroke:0.16px rgb(37,41,45);">423 L</div>
<div class="t" style="left:837.37px;top:1307px;font-size:18.00px;line-height:20px;color:rgb(37,41,45);letter-spacing:-0.697px;-webkit-text-stroke:0.16px rgb(37,41,45);">11.06</div>
<div class="t" style="left:1005.85px;top:1055px;font-size:18.00px;line-height:20px;color:rgb(37,41,45);letter-spacing:0.389px;-webkit-text-stroke:0.16px rgb(37,41,45);">522 L</div>
<div class="t" style="left:1007.02px;top:1307px;font-size:18.00px;line-height:20px;color:rgb(37,41,45);letter-spacing:-0.195px;-webkit-text-stroke:0.16px rgb(37,41,45);">12.06</div>
<div class="t" style="left:1178.17px;top:1103px;font-size:18.00px;line-height:20px;color:rgb(37,41,45);letter-spacing:-0.111px;-webkit-text-stroke:0.16px rgb(37,41,45);">401 L</div>
<div class="t" style="left:1178.07px;top:1307px;font-size:18.00px;line-height:20px;color:rgb(37,41,45);letter-spacing:-0.063px;-webkit-text-stroke:0.16px rgb(37,41,45);">13.06</div>
<div class="t" style="left:1349.19px;top:1196px;font-size:18.00px;line-height:20px;color:rgb(37,41,45);letter-spacing:0.039px;-webkit-text-stroke:0.16px rgb(37,41,45);">168 L</div>
<div class="t" style="left:1349.22px;top:1307px;font-size:18.00px;line-height:20px;color:rgb(37,41,45);letter-spacing:0.025px;-webkit-text-stroke:0.16px rgb(37,41,45);">14.06</div>
<div class="t" style="left:62.90px;top:1340px;font-size:19.20px;line-height:21px;color:rgb(37,41,45);letter-spacing:0.076px;-webkit-text-stroke:0.16px rgb(37,41,45);">Wasserverbrauch</div>
<div class="t" style="left:227.10px;top:1340px;font-size:19.20px;line-height:21px;color:rgb(37,41,45);letter-spacing:-0.262px;-webkit-text-stroke:0.16px rgb(37,41,45);">Min: 168 L</div>
<div class="t" style="left:327.80px;top:1340px;font-size:19.20px;line-height:21px;color:rgb(37,41,45);letter-spacing:0.057px;-webkit-text-stroke:0.16px rgb(37,41,45);">Max: 635 L</div>
<div class="t" style="left:436.70px;top:1340px;font-size:19.20px;line-height:21px;color:rgb(37,41,45);letter-spacing:0.105px;-webkit-text-stroke:0.16px rgb(37,41,45);">Mean: 440 L</div>
<div class="t" style="left:557.80px;top:1340px;font-size:19.20px;line-height:21px;color:rgb(37,41,45);letter-spacing:0.130px;-webkit-text-stroke:0.16px rgb(37,41,45);">Total: 3.52 kL</div>
<svg class="a" style="left:1495.00px;top:934.00px;" width="2068.00" height="445.00" viewBox="0 0 2068 445"><rect x="1.25" y="1.25" width="2064.50" height="441.70" rx="3.2" fill="#fff" stroke="rgb(227,228,230)" stroke-width="1.70"/></svg>
<div class="t" style="left:1508.90px;top:947px;font-size:22.40px;line-height:25px;color:rgb(37,41,45);letter-spacing:0.829px;-webkit-text-stroke:0.45px rgb(37,41,45);">Wasserverbrauch</div>
<svg class="a" style="left:1722.10px;top:948.40px;overflow:visible;" width="21.40" height="21.40" viewBox="0 0 24 24"><g fill="none" stroke="rgb(51,97,216)" stroke-width="2.00" stroke-linecap="round" stroke-linejoin="round"><circle cx="12" cy="12" r="10.6"/><path d="M12 6.4V12H7.2"/></g></svg>
<div class="t" style="left:1751.40px;top:947px;font-size:22.40px;line-height:25px;color:rgb(51,97,216);letter-spacing:0.226px;-webkit-text-stroke:0.16px rgb(51,97,216);">Last 1 day</div>
<div class="a" style="left:1556.00px;top:1048.65px;width:1981.60px;height:1.10px;background:rgb(233,235,236);"></div>
<div class="t" style="left:1510.02px;top:1039px;font-size:18.00px;line-height:20px;color:rgb(37,41,45);letter-spacing:0.583px;-webkit-text-stroke:0.16px rgb(37,41,45);">80 L</div>
<div class="a" style="left:1556.00px;top:1107.20px;width:1981.60px;height:1.10px;background:rgb(233,235,236);"></div>
<div class="t" style="left:1510.02px;top:1098px;font-size:18.00px;line-height:20px;color:rgb(37,41,45);letter-spacing:0.583px;-webkit-text-stroke:0.16px rgb(37,41,45);">60 L</div>
<div class="a" style="left:1556.00px;top:1165.75px;width:1981.60px;height:1.10px;background:rgb(233,235,236);"></div>
<div class="t" style="left:1509.66px;top:1156px;font-size:18.00px;line-height:20px;color:rgb(37,41,45);letter-spacing:0.700px;-webkit-text-stroke:0.16px rgb(37,41,45);">40 L</div>
<div class="a" style="left:1556.00px;top:1224.30px;width:1981.60px;height:1.10px;background:rgb(233,235,236);"></div>
<div class="t" style="left:1510.54px;top:1215px;font-size:18.00px;line-height:20px;color:rgb(37,41,45);letter-spacing:0.407px;-webkit-text-stroke:0.16px rgb(37,41,45);">20 L</div>
<div class="a" style="left:1556.00px;top:1282.85px;width:1981.60px;height:1.10px;background:rgb(233,235,236);"></div>
<div class="t" style="left:1521.10px;top:1273px;font-size:18.00px;line-height:20px;color:rgb(37,41,45);letter-spacing:0.336px;-webkit-text-stroke:0.16px rgb(37,41,45);">0 L</div>
<svg class="a" style="left:0;top:1000px" width="3586" height="290" viewBox="0 1000 3586 290"><path d="M1562.00 1283.40L1562.00 1238.32A11.50 11.50 0 0 1 1573.50 1226.82L1627.96 1226.82A11.50 11.50 0 0 1 1639.46 1238.32L1639.46 1283.40L1562.00 1283.40Z" fill="rgba(202,214,234,0.8)" stroke="rgb(202,214,234)" stroke-width="1.6"/><path d="M1641.06 1283.40L1641.06 1234.22A11.50 11.50 0 0 1 1652.56 1222.72L1707.02 1222.72A11.50 11.50 0 0 1 1718.52 1234.22L1718.52 1283.40L1641.06 1283.40Z" fill="rgba(199,210,232,0.8)" stroke="rgb(199,210,232)" stroke-width="1.6"/><path d="M1720.12 1283.40L1720.12 1177.14A11.50 11.50 0 0 1 1731.62 1165.64L1786.08 1165.64A11.50 11.50 0 0 1 1797.58 1177.14L1797.58 1283.40L1720.12 1283.40Z" fill="rgba(142,164,210,0.8)" stroke="rgb(142,164,210)" stroke-width="1.6"/><path d="M1799.18 1283.40L1799.18 1186.21A11.50 11.50 0 0 1 1810.68 1174.71L1865.14 1174.71A11.50 11.50 0 0 1 1876.64 1186.21L1876.64 1283.40L1799.18 1283.40Z" fill="rgba(151,171,212,0.8)" stroke="rgb(151,171,212)" stroke-width="1.6"/><path d="M1878.24 1283.40L1878.24 1180.36A11.50 11.50 0 0 1 1889.74 1168.86L1944.20 1168.86A11.50 11.50 0 0 1 1955.70 1180.36L1955.70 1283.40L1878.24 1283.40Z" fill="rgba(146,166,211,0.8)" stroke="rgb(146,166,211)" stroke-width="1.6"/><path d="M1957.30 1283.40L1957.30 1283.40A1.83 1.83 0 0 1 1959.13 1281.57L2032.93 1281.57A1.83 1.83 0 0 1 2034.76 1283.40L2034.76 1283.40L1957.30 1283.40Z" fill="rgba(239,244,249,0.8)" stroke="rgb(239,244,249)" stroke-width="1.6"/><path d="M2036.36 1283.40L2036.36 1046.86A11.50 11.50 0 0 1 2047.86 1035.36L2102.32 1035.36A11.50 11.50 0 0 1 2113.82 1046.86L2113.82 1283.40L2036.36 1283.40Z" fill="rgba(36,76,166,0.8)" stroke="rgb(36,76,166)" stroke-width="1.6"/><path d="M2194.48 1283.40L2194.48 1283.40A9.45 9.45 0 0 1 2203.93 1273.95L2262.49 1273.95A9.45 9.45 0 0 1 2271.94 1283.40L2271.94 1283.40L2194.48 1283.40Z" fill="rgba(236,241,248,0.8)" stroke="rgb(236,241,248)" stroke-width="1.6"/><path d="M2273.54 1283.40L2273.54 1220.76A11.50 11.50 0 0 1 2285.04 1209.26L2339.50 1209.26A11.50 11.50 0 0 1 2351.00 1220.76L2351.00 1283.40L2273.54 1283.40Z" fill="rgba(186,199,226,0.8)" stroke="rgb(186,199,226)" stroke-width="1.6"/><path d="M2352.60 1283.40L2352.60 1275.50A11.50 11.50 0 0 1 2364.10 1264.00L2418.56 1264.00A11.50 11.50 0 0 1 2430.06 1275.50L2430.06 1283.40L2352.60 1283.40Z" fill="rgba(231,238,245,0.8)" stroke="rgb(231,238,245)" stroke-width="1.6"/><path d="M2510.72 1283.40L2510.72 1275.21A11.50 11.50 0 0 1 2522.22 1263.71L2576.68 1263.71A11.50 11.50 0 0 1 2588.18 1275.21L2588.18 1283.40L2510.72 1283.40Z" fill="rgba(231,238,245,0.8)" stroke="rgb(231,238,245)" stroke-width="1.6"/><path d="M2668.84 1283.40L2668.84 1261.16A11.50 11.50 0 0 1 2680.34 1249.66L2734.80 1249.66A11.50 11.50 0 0 1 2746.30 1261.16L2746.30 1283.40L2668.84 1283.40Z" fill="rgba(222,229,241,0.8)" stroke="rgb(222,229,241)" stroke-width="1.6"/><path d="M2826.96 1283.40L2826.96 1263.79A11.50 11.50 0 0 1 2838.46 1252.29L2892.92 1252.29A11.50 11.50 0 0 1 2904.42 1263.79L2904.42 1283.40L2826.96 1283.40Z" fill="rgba(224,231,242,0.8)" stroke="rgb(224,231,242)" stroke-width="1.6"/><path d="M2906.02 1283.40L2906.02 1209.63A11.50 11.50 0 0 1 2917.52 1198.13L2971.98 1198.13A11.50 11.50 0 0 1 2983.48 1209.63L2983.48 1283.40L2906.02 1283.40Z" fill="rgba(175,190,222,0.8)" stroke="rgb(175,190,222)" stroke-width="1.6"/><path d="M2985.08 1283.40L2985.08 1282.82A11.50 11.50 0 0 1 2996.58 1271.32L3051.04 1271.32A11.50 11.50 0 0 1 3062.54 1282.82L3062.54 1283.40L2985.08 1283.40Z" fill="rgba(235,240,248,0.8)" stroke="rgb(235,240,248)" stroke-width="1.6"/><path d="M3064.14 1283.40L3064.14 1159.86A11.50 11.50 0 0 1 3075.64 1148.36L3130.10 1148.36A11.50 11.50 0 0 1 3141.60 1159.86L3141.60 1283.40L3064.14 1283.40Z" fill="rgba(129,152,204,0.8)" stroke="rgb(129,152,204)" stroke-width="1.6"/><path d="M3143.20 1283.40L3143.20 1227.20A11.50 11.50 0 0 1 3154.70 1215.70L3209.16 1215.70A11.50 11.50 0 0 1 3220.66 1227.20L3220.66 1283.40L3143.20 1283.40Z" fill="rgba(192,205,229,0.8)" stroke="rgb(192,205,229)" stroke-width="1.6"/><path d="M3301.32 1283.40L3301.32 1239.49A11.50 11.50 0 0 1 3312.82 1227.99L3367.28 1227.99A11.50 11.50 0 0 1 3378.78 1239.49L3378.78 1283.40L3301.32 1283.40Z" fill="rgba(204,214,234,0.8)" stroke="rgb(204,214,234)" stroke-width="1.6"/><path d="M3380.38 1283.40L3380.38 1229.54A11.50 11.50 0 0 1 3391.88 1218.04L3446.34 1218.04A11.50 11.50 0 0 1 3457.84 1229.54L3457.84 1283.40L3380.38 1283.40Z" fill="rgba(195,206,230,0.8)" stroke="rgb(195,206,230)" stroke-width="1.6"/><path d="M3459.44 1283.40L3459.44 1283.40A0.29 0.29 0 0 1 3459.73 1283.11L3536.61 1283.11A0.29 0.29 0 0 1 3536.90 1283.40L3536.90 1283.40L3459.44 1283.40Z" fill="rgba(240,244,249,0.8)" stroke="rgb(240,244,249)" stroke-width="0.6"/></svg>
<div class="t" style="left:1577.51px;top:1307px;font-size:18.00px;line-height:20px;color:rgb(37,41,45);letter-spacing:0.135px;-webkit-text-stroke:0.16px rgb(37,41,45);">14:00</div>
<div class="t" style="left:1582.05px;top:1210px;font-size:13.60px;line-height:15px;color:rgb(37,41,45);letter-spacing:-0.261px;-webkit-text-stroke:0.16px rgb(37,41,45);">19.6 L</div>
<div class="t" style="left:1656.92px;top:1307px;font-size:18.00px;line-height:20px;color:rgb(37,41,45);letter-spacing:-0.041px;-webkit-text-stroke:0.16px rgb(37,41,45);">15:00</div>
<div class="t" style="left:1661.31px;top:1206px;font-size:13.60px;line-height:15px;color:rgb(37,41,45);letter-spacing:-0.341px;-webkit-text-stroke:0.16px rgb(37,41,45);">21.0 L</div>
<div class="t" style="left:1735.80px;top:1307px;font-size:18.00px;line-height:20px;color:rgb(37,41,45);letter-spacing:0.047px;-webkit-text-stroke:0.16px rgb(37,41,45);">16:00</div>
<div class="t" style="left:1738.70px;top:1149px;font-size:13.60px;line-height:15px;color:rgb(37,41,45);letter-spacing:0.324px;-webkit-text-stroke:0.16px rgb(37,41,45);">40.5 L</div>
<div class="t" style="left:1815.74px;top:1307px;font-size:18.00px;line-height:20px;color:rgb(37,41,45);letter-spacing:-0.393px;-webkit-text-stroke:0.16px rgb(37,41,45);">17:00</div>
<div class="t" style="left:1818.29px;top:1158px;font-size:13.60px;line-height:15px;color:rgb(37,41,45);letter-spacing:0.111px;-webkit-text-stroke:0.16px rgb(37,41,45);">37.4 L</div>
<div class="t" style="left:1893.92px;top:1307px;font-size:18.00px;line-height:20px;color:rgb(37,41,45);letter-spacing:0.047px;-webkit-text-stroke:0.16px rgb(37,41,45);">18:00</div>
<div class="t" style="left:1896.69px;top:1152px;font-size:13.60px;line-height:15px;color:rgb(37,41,45);letter-spacing:0.377px;-webkit-text-stroke:0.16px rgb(37,41,45);">39.4 L</div>
<div class="t" style="left:1972.98px;top:1307px;font-size:18.00px;line-height:20px;color:rgb(37,41,45);letter-spacing:0.047px;-webkit-text-stroke:0.16px rgb(37,41,45);">19:00</div>
<div class="t" style="left:1971.73px;top:1265px;font-size:13.60px;line-height:15px;color:rgb(37,41,45);letter-spacing:0.477px;-webkit-text-stroke:0.16px rgb(37,41,45);">900 mL</div>
<div class="t" style="left:2050.37px;top:1307px;font-size:18.00px;line-height:20px;color:rgb(37,41,45);letter-spacing:0.883px;-webkit-text-stroke:0.16px rgb(37,41,45);">20:00</div>
<div class="t" style="left:2055.08px;top:1019px;font-size:13.60px;line-height:15px;color:rgb(37,41,45);letter-spacing:0.271px;-webkit-text-stroke:0.16px rgb(37,41,45);">85.0 L</div>
<div class="t" style="left:2131.37px;top:1307px;font-size:18.00px;line-height:20px;color:rgb(37,41,45);letter-spacing:-0.085px;-webkit-text-stroke:0.16px rgb(37,41,45);">21:00</div>
<div class="t" style="left:2208.76px;top:1307px;font-size:18.00px;line-height:20px;color:rgb(37,41,45);letter-spacing:0.751px;-webkit-text-stroke:0.16px rgb(37,41,45);">22:00</div>
<div class="t" style="left:2213.20px;top:1257px;font-size:13.60px;line-height:15px;color:rgb(37,41,45);letter-spacing:0.271px;-webkit-text-stroke:0.16px rgb(37,41,45);">3.50 L</div>
<div class="t" style="left:2287.55px;top:1307px;font-size:18.00px;line-height:20px;color:rgb(37,41,45);letter-spacing:0.883px;-webkit-text-stroke:0.16px rgb(37,41,45);">23:00</div>
<div class="t" style="left:2292.46px;top:1193px;font-size:13.60px;line-height:15px;color:rgb(37,41,45);letter-spacing:0.191px;-webkit-text-stroke:0.16px rgb(37,41,45);">25.6 L</div>
<div class="t" style="left:2366.35px;top:1307px;font-size:18.00px;line-height:20px;color:rgb(37,41,45);letter-spacing:1.015px;-webkit-text-stroke:0.16px rgb(37,41,45);">00:00</div>
<div class="t" style="left:2371.18px;top:1247px;font-size:13.60px;line-height:15px;color:rgb(37,41,45);letter-spacing:0.324px;-webkit-text-stroke:0.16px rgb(37,41,45);">6.90 L</div>
<div class="t" style="left:2447.34px;top:1307px;font-size:18.00px;line-height:20px;color:rgb(37,41,45);letter-spacing:0.047px;-webkit-text-stroke:0.16px rgb(37,41,45);">01:00</div>
<div class="t" style="left:2460.25px;top:1268px;font-size:13.60px;line-height:15px;color:rgb(37,41,45);letter-spacing:0.256px;-webkit-text-stroke:0.16px rgb(37,41,45);">0 L</div>
<div class="t" style="left:2524.73px;top:1307px;font-size:18.00px;line-height:20px;color:rgb(37,41,45);letter-spacing:0.883px;-webkit-text-stroke:0.16px rgb(37,41,45);">02:00</div>
<div class="t" style="left:2529.97px;top:1247px;font-size:13.60px;line-height:15px;color:rgb(37,41,45);letter-spacing:0.058px;-webkit-text-stroke:0.16px rgb(37,41,45);">7.00 L</div>
<div class="t" style="left:2603.53px;top:1307px;font-size:18.00px;line-height:20px;color:rgb(37,41,45);letter-spacing:1.015px;-webkit-text-stroke:0.16px rgb(37,41,45);">03:00</div>
<div class="t" style="left:2682.41px;top:1307px;font-size:18.00px;line-height:20px;color:rgb(37,41,45);letter-spacing:1.103px;-webkit-text-stroke:0.16px rgb(37,41,45);">04:00</div>
<div class="t" style="left:2690.35px;top:1233px;font-size:13.60px;line-height:15px;color:rgb(37,41,45);letter-spacing:-0.644px;-webkit-text-stroke:0.16px rgb(37,41,45);">11.8 L</div>
<div class="t" style="left:2761.82px;top:1307px;font-size:18.00px;line-height:20px;color:rgb(37,41,45);letter-spacing:0.927px;-webkit-text-stroke:0.16px rgb(37,41,45);">05:00</div>
<div class="t" style="left:2840.71px;top:1307px;font-size:18.00px;line-height:20px;color:rgb(37,41,45);letter-spacing:1.015px;-webkit-text-stroke:0.16px rgb(37,41,45);">06:00</div>
<div class="t" style="left:2847.01px;top:1236px;font-size:13.60px;line-height:15px;color:rgb(37,41,45);letter-spacing:-0.261px;-webkit-text-stroke:0.16px rgb(37,41,45);">10.9 L</div>
<div class="t" style="left:2920.65px;top:1307px;font-size:18.00px;line-height:20px;color:rgb(37,41,45);letter-spacing:0.575px;-webkit-text-stroke:0.16px rgb(37,41,45);">07:00</div>
<div class="t" style="left:2924.67px;top:1182px;font-size:13.60px;line-height:15px;color:rgb(37,41,45);letter-spacing:0.298px;-webkit-text-stroke:0.16px rgb(37,41,45);">29.4 L</div>
<div class="t" style="left:2998.83px;top:1307px;font-size:18.00px;line-height:20px;color:rgb(37,41,45);letter-spacing:1.015px;-webkit-text-stroke:0.16px rgb(37,41,45);">08:00</div>
<div class="t" style="left:3003.40px;top:1255px;font-size:13.60px;line-height:15px;color:rgb(37,41,45);letter-spacing:0.431px;-webkit-text-stroke:0.16px rgb(37,41,45);">4.40 L</div>
<div class="t" style="left:3077.89px;top:1307px;font-size:18.00px;line-height:20px;color:rgb(37,41,45);letter-spacing:1.015px;-webkit-text-stroke:0.16px rgb(37,41,45);">09:00</div>
<div class="t" style="left:3082.46px;top:1132px;font-size:13.60px;line-height:15px;color:rgb(37,41,45);letter-spacing:0.431px;-webkit-text-stroke:0.16px rgb(37,41,45);">46.4 L</div>
<div class="t" style="left:3158.88px;top:1307px;font-size:18.00px;line-height:20px;color:rgb(37,41,45);letter-spacing:0.047px;-webkit-text-stroke:0.16px rgb(37,41,45);">10:00</div>
<div class="t" style="left:3161.85px;top:1199px;font-size:13.60px;line-height:15px;color:rgb(37,41,45);letter-spacing:0.298px;-webkit-text-stroke:0.16px rgb(37,41,45);">23.4 L</div>
<div class="t" style="left:3239.88px;top:1307px;font-size:18.00px;line-height:20px;color:rgb(37,41,45);letter-spacing:-0.587px;-webkit-text-stroke:0.16px rgb(37,41,45);">11:00</div>
<div class="t" style="left:3317.27px;top:1307px;font-size:18.00px;line-height:20px;color:rgb(37,41,45);letter-spacing:-0.085px;-webkit-text-stroke:0.16px rgb(37,41,45);">12:00</div>
<div class="t" style="left:3321.57px;top:1211px;font-size:13.60px;line-height:15px;color:rgb(37,41,45);letter-spacing:-0.341px;-webkit-text-stroke:0.16px rgb(37,41,45);">19.2 L</div>
<div class="t" style="left:3396.06px;top:1307px;font-size:18.00px;line-height:20px;color:rgb(37,41,45);letter-spacing:0.047px;-webkit-text-stroke:0.16px rgb(37,41,45);">13:00</div>
<div class="t" style="left:3399.36px;top:1201px;font-size:13.60px;line-height:15px;color:rgb(37,41,45);letter-spacing:0.165px;-webkit-text-stroke:0.16px rgb(37,41,45);">22.6 L</div>
<div class="t" style="left:3475.12px;top:1307px;font-size:18.00px;line-height:20px;color:rgb(37,41,45);letter-spacing:0.047px;-webkit-text-stroke:0.16px rgb(37,41,45);">13:06</div>
<div class="t" style="left:3474.07px;top:1267px;font-size:13.60px;line-height:15px;color:rgb(37,41,45);letter-spacing:0.397px;-webkit-text-stroke:0.16px rgb(37,41,45);">200 mL</div>
<div class="t" style="left:1548.70px;top:1340px;font-size:19.20px;line-height:21px;color:rgb(37,41,45);letter-spacing:-0.024px;-webkit-text-stroke:0.16px rgb(37,41,45);">Wasserverbrauch</div>
<div class="t" style="left:1712.50px;top:1340px;font-size:19.20px;line-height:21px;color:rgb(37,41,45);letter-spacing:-0.228px;-webkit-text-stroke:0.16px rgb(37,41,45);">Min: 0 L</div>
<div class="t" style="left:1793.60px;top:1340px;font-size:19.20px;line-height:21px;color:rgb(37,41,45);letter-spacing:-0.243px;-webkit-text-stroke:0.16px rgb(37,41,45);">Max: 85.0 L</div>
<div class="t" style="left:1906.30px;top:1340px;font-size:19.20px;line-height:21px;color:rgb(37,41,45);letter-spacing:-0.535px;-webkit-text-stroke:0.16px rgb(37,41,45);">Mean: 21.7 L</div>
<div class="t" style="left:2026.90px;top:1340px;font-size:19.20px;line-height:21px;color:rgb(37,41,45);letter-spacing:0.175px;-webkit-text-stroke:0.16px rgb(37,41,45);">Total: 455 L</div>
<svg class="a" style="left:10.00px;top:1390.00px;" width="1474.00" height="445.00" viewBox="0 0 1474 445"><rect x="1.25" y="1.35" width="1470.50" height="441.60" rx="3.2" fill="#fff" stroke="rgb(227,228,230)" stroke-width="1.70"/></svg>
<div class="t" style="left:24.50px;top:1403px;font-size:22.40px;line-height:25px;color:rgb(37,41,45);letter-spacing:1.171px;-webkit-text-stroke:0.45px rgb(37,41,45);">Import/Export</div>
<svg class="a" style="left:199.00px;top:1404.40px;overflow:visible;" width="21.40" height="21.40" viewBox="0 0 24 24"><g fill="none" stroke="rgb(51,97,216)" stroke-width="2.00" stroke-linecap="round" stroke-linejoin="round"><circle cx="12" cy="12" r="10.6"/><path d="M12 6.4V12H7.2"/></g></svg>
<div class="t" style="left:228.30px;top:1403px;font-size:22.40px;line-height:25px;color:rgb(51,97,216);letter-spacing:0.791px;-webkit-text-stroke:0.16px rgb(51,97,216);">Last 4 months</div>
<div class="a" style="left:116.50px;top:1495.38px;width:1342.20px;height:1.10px;background:rgb(233,235,236);"></div>
<div class="t" style="left:33.80px;top:1486px;font-size:18.00px;line-height:20px;color:rgb(37,41,45);letter-spacing:0.677px;-webkit-text-stroke:0.16px rgb(37,41,45);">250 kWh</div>
<div class="a" style="left:116.50px;top:1548.35px;width:1342.20px;height:1.10px;background:rgb(233,235,236);"></div>
<div class="t" style="left:55.90px;top:1539px;font-size:18.00px;line-height:20px;color:rgb(37,41,45);letter-spacing:0.497px;-webkit-text-stroke:0.16px rgb(37,41,45);">0 kWh</div>
<div class="a" style="left:116.50px;top:1601.33px;width:1342.20px;height:1.10px;background:rgb(233,235,236);"></div>
<div class="t" style="left:26.80px;top:1592px;font-size:18.00px;line-height:20px;color:rgb(37,41,45);letter-spacing:0.724px;-webkit-text-stroke:0.16px rgb(37,41,45);">-250 kWh</div>
<div class="a" style="left:116.50px;top:1654.30px;width:1342.20px;height:1.10px;background:rgb(233,235,236);"></div>
<div class="t" style="left:26.10px;top:1645px;font-size:18.00px;line-height:20px;color:rgb(37,41,45);letter-spacing:0.824px;-webkit-text-stroke:0.16px rgb(37,41,45);">-500 kWh</div>
<div class="a" style="left:116.50px;top:1707.28px;width:1342.20px;height:1.10px;background:rgb(233,235,236);"></div>
<div class="t" style="left:27.30px;top:1698px;font-size:18.00px;line-height:20px;color:rgb(37,41,45);letter-spacing:0.653px;-webkit-text-stroke:0.16px rgb(37,41,45);">-750 kWh</div>
<svg class="a" style="left:0;top:1480px" width="3586" height="240" viewBox="0 1480 3586 240"><path d="M123.70 1548.10L123.70 1511.56L318.90 1511.56L318.90 1548.10L123.70 1548.10Z" fill="rgba(245,223,85,0.8)" stroke="rgb(245,223,85)" stroke-width="1.60"/><path d="M123.70 1593.45L123.70 1549.70L318.90 1549.70L318.90 1593.45L123.70 1593.45Z" fill="rgba(133,189,114,0.8)" stroke="rgb(133,189,114)" stroke-width="1.60"/><path d="M408.30 1548.10L408.30 1491.64L603.50 1491.64L603.50 1548.10L408.30 1548.10Z" fill="rgba(245,223,85,0.8)" stroke="rgb(245,223,85)" stroke-width="1.60"/><path d="M408.30 1627.56L408.30 1549.70L603.50 1549.70L603.50 1627.56L408.30 1627.56Z" fill="rgba(133,189,114,0.8)" stroke="rgb(133,189,114)" stroke-width="1.60"/><path d="M692.90 1548.10L692.90 1521.94L888.10 1521.94L888.10 1548.10L692.90 1548.10Z" fill="rgba(245,223,85,0.8)" stroke="rgb(245,223,85)" stroke-width="1.60"/><path d="M692.90 1693.25L692.90 1549.70L888.10 1549.70L888.10 1693.25L692.90 1693.25Z" fill="rgba(133,189,114,0.8)" stroke="rgb(133,189,114)" stroke-width="1.60"/><path d="M977.50 1548.10L977.50 1543.83L1172.70 1543.83L1172.70 1548.10L977.50 1548.10Z" fill="rgba(245,223,85,0.8)" stroke="rgb(245,223,85)" stroke-width="1.60"/><path d="M977.50 1710.20L977.50 1549.70L1172.70 1549.70L1172.70 1710.20L977.50 1710.20Z" fill="rgba(133,189,114,0.8)" stroke="rgb(133,189,114)" stroke-width="1.60"/><path d="M1262.10 1548.59L1262.10 1547.96L1457.30 1547.96L1457.30 1548.59L1262.10 1548.59Z" fill="rgba(245,223,85,0.8)" stroke="rgb(245,223,85)" stroke-width="0.63"/><path d="M1262.10 1673.54L1262.10 1549.70L1457.30 1549.70L1457.30 1673.54L1262.10 1673.54Z" fill="rgba(133,189,114,0.8)" stroke="rgb(133,189,114)" stroke-width="1.60"/></svg>
<div class="t" style="left:176.20px;top:1485px;font-size:24.00px;line-height:27px;color:rgb(37,41,45);letter-spacing:-0.752px;-webkit-text-stroke:0.16px rgb(37,41,45);">180 kWh</div>
<div class="t" style="left:171.20px;top:1598px;font-size:24.00px;line-height:27px;color:rgb(37,41,45);letter-spacing:-0.358px;-webkit-text-stroke:0.16px rgb(37,41,45);">-214 kWh</div>
<div class="t" style="left:191.50px;top:1763px;font-size:18.00px;line-height:20px;color:rgb(37,41,45);letter-spacing:0.262px;-webkit-text-stroke:0.16px rgb(37,41,45);">Februar</div>
<div class="t" style="left:460.20px;top:1465px;font-size:24.00px;line-height:27px;color:rgb(37,41,45);letter-spacing:-0.552px;-webkit-text-stroke:0.16px rgb(37,41,45);">274 kWh</div>
<div class="t" style="left:454.40px;top:1632px;font-size:24.00px;line-height:27px;color:rgb(37,41,45);letter-spacing:0.042px;-webkit-text-stroke:0.16px rgb(37,41,45);">-375 kWh</div>
<div class="t" style="left:487.15px;top:1763px;font-size:18.00px;line-height:20px;color:rgb(37,41,45);letter-spacing:0.834px;-webkit-text-stroke:0.16px rgb(37,41,45);">März</div>
<div class="t" style="left:747.10px;top:1496px;font-size:24.00px;line-height:27px;color:rgb(37,41,45);letter-spacing:-1.319px;-webkit-text-stroke:0.16px rgb(37,41,45);">131 kWh</div>
<div class="t" style="left:738.70px;top:1698px;font-size:24.00px;line-height:27px;color:rgb(37,41,45);letter-spacing:0.128px;-webkit-text-stroke:0.16px rgb(37,41,45);">-685 kWh</div>
<div class="t" style="left:773.80px;top:1763px;font-size:18.00px;line-height:20px;color:rgb(37,41,45);letter-spacing:0.598px;-webkit-text-stroke:0.16px rgb(37,41,45);">April</div>
<div class="t" style="left:1028.20px;top:1517px;font-size:24.00px;line-height:27px;color:rgb(37,41,45);letter-spacing:-1.083px;-webkit-text-stroke:0.16px rgb(37,41,45);">27.7 kWh</div>
<div class="t" style="left:1024.10px;top:1715px;font-size:24.00px;line-height:27px;color:rgb(37,41,45);letter-spacing:-0.101px;-webkit-text-stroke:0.16px rgb(37,41,45);">-765 kWh</div>
<div class="t" style="left:1062.75px;top:1763px;font-size:18.00px;line-height:20px;color:rgb(37,41,45);letter-spacing:0.348px;-webkit-text-stroke:0.16px rgb(37,41,45);">Mai</div>
<div class="t" style="left:1310.50px;top:1522px;font-size:24.00px;line-height:27px;color:rgb(37,41,45);letter-spacing:-0.426px;-webkit-text-stroke:0.16px rgb(37,41,45);">5.90 kWh</div>
<div class="t" style="left:1308.20px;top:1678px;font-size:24.00px;line-height:27px;color:rgb(37,41,45);letter-spacing:0.042px;-webkit-text-stroke:0.16px rgb(37,41,45);">-592 kWh</div>
<div class="t" style="left:1344.75px;top:1763px;font-size:18.00px;line-height:20px;color:rgb(37,41,45);letter-spacing:0.626px;-webkit-text-stroke:0.16px rgb(37,41,45);">Juni</div>
<div class="a" style="left:30.30px;top:1804.40px;width:20.60px;height:5.80px;background:rgb(245,223,85);border-radius:3px;"></div>
<div class="t" style="left:62.90px;top:1796px;font-size:19.20px;line-height:21px;color:rgb(37,41,45);letter-spacing:-0.101px;-webkit-text-stroke:0.16px rgb(37,41,45);">Einspeisung</div>
<div class="t" style="left:179.40px;top:1796px;font-size:19.20px;line-height:21px;color:rgb(37,41,45);letter-spacing:-0.043px;-webkit-text-stroke:0.16px rgb(37,41,45);">Min: 5.90 kWh</div>
<div class="t" style="left:315.60px;top:1796px;font-size:19.20px;line-height:21px;color:rgb(37,41,45);letter-spacing:-0.147px;-webkit-text-stroke:0.16px rgb(37,41,45);">Max: 274 kWh</div>
<div class="t" style="left:450.10px;top:1796px;font-size:19.20px;line-height:21px;color:rgb(37,41,45);letter-spacing:-0.189px;-webkit-text-stroke:0.16px rgb(37,41,45);">Mean: 124 kWh</div>
<div class="t" style="left:595.70px;top:1796px;font-size:19.20px;line-height:21px;color:rgb(37,41,45);letter-spacing:-0.008px;-webkit-text-stroke:0.16px rgb(37,41,45);">Total: 619 kWh</div>
<div class="a" style="left:739.50px;top:1804.40px;width:20.60px;height:5.80px;background:rgb(133,189,114);border-radius:3px;"></div>
<div class="t" style="left:771.60px;top:1796px;font-size:19.20px;line-height:21px;color:rgb(37,41,45);letter-spacing:-0.235px;-webkit-text-stroke:0.16px rgb(37,41,45);">Bezug</div>
<div class="t" style="left:838.50px;top:1796px;font-size:19.20px;line-height:21px;color:rgb(37,41,45);letter-spacing:0.119px;-webkit-text-stroke:0.16px rgb(37,41,45);">Min: -765 kWh</div>
<div class="t" style="left:977.10px;top:1796px;font-size:19.20px;line-height:21px;color:rgb(37,41,45);letter-spacing:-0.084px;-webkit-text-stroke:0.16px rgb(37,41,45);">Max: -214 kWh</div>
<div class="t" style="left:1118.00px;top:1796px;font-size:19.20px;line-height:21px;color:rgb(37,41,45);letter-spacing:0.187px;-webkit-text-stroke:0.16px rgb(37,41,45);">Mean: -526 kWh</div>
<div class="t" style="left:1275.30px;top:1796px;font-size:19.20px;line-height:21px;color:rgb(37,41,45);letter-spacing:0.219px;-webkit-text-stroke:0.16px rgb(37,41,45);">Total: -2.63 MWh</div>
<svg class="a" style="left:1495.00px;top:1390.00px;" width="2068.00" height="445.00" viewBox="0 0 2068 445"><rect x="1.25" y="1.35" width="2064.50" height="441.60" rx="3.2" fill="#fff" stroke="rgb(227,228,230)" stroke-width="1.70"/></svg>
<div class="t" style="left:1508.90px;top:1403px;font-size:22.40px;line-height:25px;color:rgb(37,41,45);letter-spacing:1.171px;-webkit-text-stroke:0.45px rgb(37,41,45);">Import/Export</div>
<svg class="a" style="left:1684.30px;top:1404.40px;overflow:visible;" width="21.40" height="21.40" viewBox="0 0 24 24"><g fill="none" stroke="rgb(51,97,216)" stroke-width="2.00" stroke-linecap="round" stroke-linejoin="round"><circle cx="12" cy="12" r="10.6"/><path d="M12 6.4V12H7.2"/></g></svg>
<div class="t" style="left:1713.60px;top:1403px;font-size:22.40px;line-height:25px;color:rgb(51,97,216);letter-spacing:0.391px;-webkit-text-stroke:0.16px rgb(51,97,216);">Last 1 month</div>
<div class="a" style="left:1591.00px;top:1496.65px;width:1946.60px;height:1.10px;background:rgb(233,235,236);"></div>
<div class="t" style="left:1530.40px;top:1487px;font-size:18.00px;line-height:20px;color:rgb(37,41,45);letter-spacing:0.372px;-webkit-text-stroke:0.16px rgb(37,41,45);">0 kWh</div>
<div class="a" style="left:1591.00px;top:1552.40px;width:1946.60px;height:1.10px;background:rgb(233,235,236);"></div>
<div class="t" style="left:1512.10px;top:1543px;font-size:18.00px;line-height:20px;color:rgb(37,41,45);letter-spacing:0.630px;-webkit-text-stroke:0.16px rgb(37,41,45);">-20 kWh</div>
<div class="a" style="left:1591.00px;top:1608.15px;width:1946.60px;height:1.10px;background:rgb(233,235,236);"></div>
<div class="t" style="left:1511.30px;top:1598px;font-size:18.00px;line-height:20px;color:rgb(37,41,45);letter-spacing:0.764px;-webkit-text-stroke:0.16px rgb(37,41,45);">-40 kWh</div>
<div class="a" style="left:1591.00px;top:1663.90px;width:1946.60px;height:1.10px;background:rgb(233,235,236);"></div>
<div class="t" style="left:1511.50px;top:1654px;font-size:18.00px;line-height:20px;color:rgb(37,41,45);letter-spacing:0.730px;-webkit-text-stroke:0.16px rgb(37,41,45);">-60 kWh</div>
<div class="a" style="left:1591.00px;top:1719.65px;width:1946.60px;height:1.10px;background:rgb(233,235,236);"></div>
<div class="t" style="left:1511.50px;top:1710px;font-size:18.00px;line-height:20px;color:rgb(37,41,45);letter-spacing:0.730px;-webkit-text-stroke:0.16px rgb(37,41,45);">-80 kWh</div>
<svg class="a" style="left:0;top:1480px" width="3586" height="250" viewBox="0 1480 3586 250"><path d="M1598.40 1498.00L1598.40 1498.00L1642.90 1498.00L1642.90 1498.00A3.14 3.14 0 0 1 1639.76 1501.14L1601.54 1501.14A3.14 3.14 0 0 1 1598.40 1498.00Z" fill="rgba(133,189,114,0.8)" stroke="rgb(133,189,114)" stroke-width="1.60"/><path d="M1598.40 1497.06L1598.40 1496.78L1642.90 1496.78L1642.90 1497.06L1598.40 1497.06Z" fill="rgba(245,223,85,0.8)" stroke="rgb(245,223,85)" stroke-width="0.28"/><path d="M1661.51 1536.55L1661.51 1498.00L1706.01 1498.00L1706.01 1536.55A7.80 7.80 0 0 1 1698.21 1544.35L1669.31 1544.35A7.80 7.80 0 0 1 1661.51 1536.55Z" fill="rgba(133,189,114,0.8)" stroke="rgb(133,189,114)" stroke-width="1.60"/><path d="M1661.51 1496.80L1661.51 1495.93L1706.01 1495.93L1706.01 1496.80L1661.51 1496.80Z" fill="rgba(245,223,85,0.8)" stroke="rgb(245,223,85)" stroke-width="0.80"/><path d="M1724.62 1496.40L1724.62 1489.36L1769.12 1489.36L1769.12 1496.40L1724.62 1496.40Z" fill="rgba(245,223,85,0.8)" stroke="rgb(245,223,85)" stroke-width="1.60"/><path d="M1787.73 1496.40L1787.73 1490.19L1832.23 1490.19L1832.23 1496.40L1787.73 1496.40Z" fill="rgba(245,223,85,0.8)" stroke="rgb(245,223,85)" stroke-width="1.60"/><path d="M1850.84 1496.80L1850.84 1494.81L1895.34 1494.81L1895.34 1496.80L1850.84 1496.80Z" fill="rgba(245,223,85,0.8)" stroke="rgb(245,223,85)" stroke-width="0.80"/><path d="M1913.95 1559.12L1913.95 1498.00L1958.45 1498.00L1958.45 1559.12A7.80 7.80 0 0 1 1950.65 1566.92L1921.75 1566.92A7.80 7.80 0 0 1 1913.95 1559.12Z" fill="rgba(133,189,114,0.8)" stroke="rgb(133,189,114)" stroke-width="1.60"/><path d="M1913.95 1496.92L1913.95 1496.36L1958.45 1496.36L1958.45 1496.92L1913.95 1496.92Z" fill="rgba(245,223,85,0.8)" stroke="rgb(245,223,85)" stroke-width="0.56"/><path d="M1977.06 1542.40L1977.06 1498.00L2021.56 1498.00L2021.56 1542.40A7.80 7.80 0 0 1 2013.76 1550.20L1984.86 1550.20A7.80 7.80 0 0 1 1977.06 1542.40Z" fill="rgba(133,189,114,0.8)" stroke="rgb(133,189,114)" stroke-width="1.60"/><path d="M1977.06 1496.80L1977.06 1495.93L2021.56 1495.93L2021.56 1496.80L1977.06 1496.80Z" fill="rgba(245,223,85,0.8)" stroke="rgb(245,223,85)" stroke-width="0.80"/><path d="M2040.17 1547.70L2040.17 1498.00L2084.67 1498.00L2084.67 1547.70A7.80 7.80 0 0 1 2076.87 1555.50L2047.97 1555.50A7.80 7.80 0 0 1 2040.17 1547.70Z" fill="rgba(133,189,114,0.8)" stroke="rgb(133,189,114)" stroke-width="1.60"/><path d="M2040.17 1496.85L2040.17 1496.15L2084.67 1496.15L2084.67 1496.85L2040.17 1496.85Z" fill="rgba(245,223,85,0.8)" stroke="rgb(245,223,85)" stroke-width="0.70"/><path d="M2103.28 1645.26L2103.28 1498.00L2147.78 1498.00L2147.78 1645.26A7.80 7.80 0 0 1 2139.98 1653.06L2111.08 1653.06A7.80 7.80 0 0 1 2103.28 1645.26Z" fill="rgba(133,189,114,0.8)" stroke="rgb(133,189,114)" stroke-width="1.60"/><path d="M2103.28 1496.99L2103.28 1496.57L2147.78 1496.57L2147.78 1496.99L2103.28 1496.99Z" fill="rgba(245,223,85,0.8)" stroke="rgb(245,223,85)" stroke-width="0.42"/><path d="M2166.39 1554.11L2166.39 1498.00L2210.89 1498.00L2210.89 1554.11A7.80 7.80 0 0 1 2203.09 1561.91L2174.19 1561.91A7.80 7.80 0 0 1 2166.39 1554.11Z" fill="rgba(133,189,114,0.8)" stroke="rgb(133,189,114)" stroke-width="1.60"/><path d="M2166.39 1496.85L2166.39 1496.15L2210.89 1496.15L2210.89 1496.85L2166.39 1496.85Z" fill="rgba(245,223,85,0.8)" stroke="rgb(245,223,85)" stroke-width="0.70"/><path d="M2229.50 1498.00L2229.50 1498.00L2274.00 1498.00L2274.00 1498.00A7.60 7.60 0 0 1 2266.40 1505.60L2237.10 1505.60A7.60 7.60 0 0 1 2229.50 1498.00Z" fill="rgba(133,189,114,0.8)" stroke="rgb(133,189,114)" stroke-width="1.60"/><path d="M2229.50 1496.92L2229.50 1496.36L2274.00 1496.36L2274.00 1496.92L2229.50 1496.92Z" fill="rgba(245,223,85,0.8)" stroke="rgb(245,223,85)" stroke-width="0.56"/><path d="M2292.61 1706.03L2292.61 1498.00L2337.11 1498.00L2337.11 1706.03A7.80 7.80 0 0 1 2329.31 1713.83L2300.41 1713.83A7.80 7.80 0 0 1 2292.61 1706.03Z" fill="rgba(133,189,114,0.8)" stroke="rgb(133,189,114)" stroke-width="1.60"/><path d="M2292.61 1496.40L2292.61 1493.82L2337.11 1493.82L2337.11 1496.40L2292.61 1496.40Z" fill="rgba(245,223,85,0.8)" stroke="rgb(245,223,85)" stroke-width="1.60"/><path d="M2355.72 1629.65L2355.72 1498.00L2400.22 1498.00L2400.22 1629.65A7.80 7.80 0 0 1 2392.42 1637.45L2363.52 1637.45A7.80 7.80 0 0 1 2355.72 1629.65Z" fill="rgba(133,189,114,0.8)" stroke="rgb(133,189,114)" stroke-width="1.60"/><path d="M2355.72 1496.92L2355.72 1496.36L2400.22 1496.36L2400.22 1496.92L2355.72 1496.92Z" fill="rgba(245,223,85,0.8)" stroke="rgb(245,223,85)" stroke-width="0.56"/><path d="M2418.83 1576.41L2418.83 1498.00L2463.33 1498.00L2463.33 1576.41A7.80 7.80 0 0 1 2455.53 1584.21L2426.63 1584.21A7.80 7.80 0 0 1 2418.83 1576.41Z" fill="rgba(133,189,114,0.8)" stroke="rgb(133,189,114)" stroke-width="1.60"/><path d="M2418.83 1496.92L2418.83 1496.36L2463.33 1496.36L2463.33 1496.92L2418.83 1496.92Z" fill="rgba(245,223,85,0.8)" stroke="rgb(245,223,85)" stroke-width="0.56"/><path d="M2481.94 1587.28L2481.94 1498.00L2526.44 1498.00L2526.44 1587.28A7.80 7.80 0 0 1 2518.64 1595.08L2489.74 1595.08A7.80 7.80 0 0 1 2481.94 1587.28Z" fill="rgba(133,189,114,0.8)" stroke="rgb(133,189,114)" stroke-width="1.60"/><path d="M2481.94 1496.80L2481.94 1495.93L2526.44 1495.93L2526.44 1496.80L2481.94 1496.80Z" fill="rgba(245,223,85,0.8)" stroke="rgb(245,223,85)" stroke-width="0.80"/><path d="M2545.05 1647.49L2545.05 1498.00L2589.55 1498.00L2589.55 1647.49A7.80 7.80 0 0 1 2581.75 1655.29L2552.85 1655.29A7.80 7.80 0 0 1 2545.05 1647.49Z" fill="rgba(133,189,114,0.8)" stroke="rgb(133,189,114)" stroke-width="1.60"/><path d="M2545.05 1496.99L2545.05 1496.57L2589.55 1496.57L2589.55 1496.99L2545.05 1496.99Z" fill="rgba(245,223,85,0.8)" stroke="rgb(245,223,85)" stroke-width="0.42"/><path d="M2608.16 1597.87L2608.16 1498.00L2652.66 1498.00L2652.66 1597.87A7.80 7.80 0 0 1 2644.86 1605.67L2615.96 1605.67A7.80 7.80 0 0 1 2608.16 1597.87Z" fill="rgba(133,189,114,0.8)" stroke="rgb(133,189,114)" stroke-width="1.60"/><path d="M2608.16 1496.99L2608.16 1496.57L2652.66 1496.57L2652.66 1496.99L2608.16 1496.99Z" fill="rgba(245,223,85,0.8)" stroke="rgb(245,223,85)" stroke-width="0.42"/><path d="M2671.27 1624.63L2671.27 1498.00L2715.77 1498.00L2715.77 1624.63A7.80 7.80 0 0 1 2707.97 1632.43L2679.07 1632.43A7.80 7.80 0 0 1 2671.27 1624.63Z" fill="rgba(133,189,114,0.8)" stroke="rgb(133,189,114)" stroke-width="1.60"/><path d="M2671.27 1496.99L2671.27 1496.57L2715.77 1496.57L2715.77 1496.99L2671.27 1496.99Z" fill="rgba(245,223,85,0.8)" stroke="rgb(245,223,85)" stroke-width="0.42"/><path d="M2734.38 1641.36L2734.38 1498.00L2778.88 1498.00L2778.88 1641.36A7.80 7.80 0 0 1 2771.08 1649.15L2742.18 1649.15A7.80 7.80 0 0 1 2734.38 1641.36Z" fill="rgba(133,189,114,0.8)" stroke="rgb(133,189,114)" stroke-width="1.60"/><path d="M2734.38 1496.92L2734.38 1496.36L2778.88 1496.36L2778.88 1496.92L2734.38 1496.92Z" fill="rgba(245,223,85,0.8)" stroke="rgb(245,223,85)" stroke-width="0.56"/><path d="M2797.49 1609.86L2797.49 1498.00L2841.99 1498.00L2841.99 1609.86A7.80 7.80 0 0 1 2834.19 1617.66L2805.29 1617.66A7.80 7.80 0 0 1 2797.49 1609.86Z" fill="rgba(133,189,114,0.8)" stroke="rgb(133,189,114)" stroke-width="1.60"/><path d="M2797.49 1496.85L2797.49 1496.15L2841.99 1496.15L2841.99 1496.85L2797.49 1496.85Z" fill="rgba(245,223,85,0.8)" stroke="rgb(245,223,85)" stroke-width="0.70"/><path d="M2860.60 1533.76L2860.60 1498.00L2905.10 1498.00L2905.10 1533.76A7.80 7.80 0 0 1 2897.30 1541.56L2868.40 1541.56A7.80 7.80 0 0 1 2860.60 1533.76Z" fill="rgba(133,189,114,0.8)" stroke="rgb(133,189,114)" stroke-width="1.60"/><path d="M2860.60 1496.80L2860.60 1495.93L2905.10 1495.93L2905.10 1496.80L2860.60 1496.80Z" fill="rgba(245,223,85,0.8)" stroke="rgb(245,223,85)" stroke-width="0.80"/><path d="M2923.71 1497.55L2923.71 1497.55L2968.21 1497.55L2968.21 1497.55A0.70 0.70 0 0 1 2967.51 1498.25L2924.41 1498.25A0.70 0.70 0 0 1 2923.71 1497.55Z" fill="rgba(133,189,114,0.8)" stroke="rgb(133,189,114)" stroke-width="0.70"/><path d="M2923.71 1496.80L2923.71 1495.65L2968.21 1495.65L2968.21 1496.80L2923.71 1496.80Z" fill="rgba(245,223,85,0.8)" stroke="rgb(245,223,85)" stroke-width="0.80"/><path d="M2986.82 1600.38L2986.82 1498.00L3031.32 1498.00L3031.32 1600.38A7.80 7.80 0 0 1 3023.52 1608.18L2994.62 1608.18A7.80 7.80 0 0 1 2986.82 1600.38Z" fill="rgba(133,189,114,0.8)" stroke="rgb(133,189,114)" stroke-width="1.60"/><path d="M2986.82 1496.99L2986.82 1496.57L3031.32 1496.57L3031.32 1496.99L2986.82 1496.99Z" fill="rgba(245,223,85,0.8)" stroke="rgb(245,223,85)" stroke-width="0.42"/><path d="M3049.93 1612.64L3049.93 1498.00L3094.43 1498.00L3094.43 1612.64A7.80 7.80 0 0 1 3086.63 1620.44L3057.73 1620.44A7.80 7.80 0 0 1 3049.93 1612.64Z" fill="rgba(133,189,114,0.8)" stroke="rgb(133,189,114)" stroke-width="1.60"/><path d="M3049.93 1496.92L3049.93 1496.36L3094.43 1496.36L3094.43 1496.92L3049.93 1496.92Z" fill="rgba(245,223,85,0.8)" stroke="rgb(245,223,85)" stroke-width="0.56"/><path d="M3113.04 1622.12L3113.04 1498.00L3157.54 1498.00L3157.54 1622.12A7.80 7.80 0 0 1 3149.74 1629.92L3120.84 1629.92A7.80 7.80 0 0 1 3113.04 1622.12Z" fill="rgba(133,189,114,0.8)" stroke="rgb(133,189,114)" stroke-width="1.60"/><path d="M3113.04 1496.92L3113.04 1496.36L3157.54 1496.36L3157.54 1496.92L3113.04 1496.92Z" fill="rgba(245,223,85,0.8)" stroke="rgb(245,223,85)" stroke-width="0.56"/><path d="M3176.15 1679.27L3176.15 1498.00L3220.65 1498.00L3220.65 1679.27A7.80 7.80 0 0 1 3212.85 1687.07L3183.95 1687.07A7.80 7.80 0 0 1 3176.15 1679.27Z" fill="rgba(133,189,114,0.8)" stroke="rgb(133,189,114)" stroke-width="1.60"/><path d="M3176.15 1496.92L3176.15 1496.36L3220.65 1496.36L3220.65 1496.92L3176.15 1496.92Z" fill="rgba(245,223,85,0.8)" stroke="rgb(245,223,85)" stroke-width="0.56"/><path d="M3239.26 1549.37L3239.26 1498.00L3283.76 1498.00L3283.76 1549.37A7.80 7.80 0 0 1 3275.96 1557.17L3247.06 1557.17A7.80 7.80 0 0 1 3239.26 1549.37Z" fill="rgba(133,189,114,0.8)" stroke="rgb(133,189,114)" stroke-width="1.60"/><path d="M3239.26 1496.85L3239.26 1496.15L3283.76 1496.15L3283.76 1496.85L3239.26 1496.85Z" fill="rgba(245,223,85,0.8)" stroke="rgb(245,223,85)" stroke-width="0.70"/><path d="M3302.37 1553.55L3302.37 1498.00L3346.87 1498.00L3346.87 1553.55A7.80 7.80 0 0 1 3339.07 1561.35L3310.17 1561.35A7.80 7.80 0 0 1 3302.37 1553.55Z" fill="rgba(133,189,114,0.8)" stroke="rgb(133,189,114)" stroke-width="1.60"/><path d="M3302.37 1496.85L3302.37 1496.15L3346.87 1496.15L3346.87 1496.85L3302.37 1496.85Z" fill="rgba(245,223,85,0.8)" stroke="rgb(245,223,85)" stroke-width="0.70"/><path d="M3365.48 1682.33L3365.48 1498.00L3409.98 1498.00L3409.98 1682.33A7.80 7.80 0 0 1 3402.18 1690.13L3373.28 1690.13A7.80 7.80 0 0 1 3365.48 1682.33Z" fill="rgba(133,189,114,0.8)" stroke="rgb(133,189,114)" stroke-width="1.60"/><path d="M3365.48 1496.92L3365.48 1496.36L3409.98 1496.36L3409.98 1496.92L3365.48 1496.92Z" fill="rgba(245,223,85,0.8)" stroke="rgb(245,223,85)" stroke-width="0.56"/><path d="M3428.59 1706.30L3428.59 1498.00L3473.09 1498.00L3473.09 1706.30A7.80 7.80 0 0 1 3465.29 1714.10L3436.39 1714.10A7.80 7.80 0 0 1 3428.59 1706.30Z" fill="rgba(133,189,114,0.8)" stroke="rgb(133,189,114)" stroke-width="1.60"/><path d="M3428.59 1496.99L3428.59 1496.57L3473.09 1496.57L3473.09 1496.99L3428.59 1496.99Z" fill="rgba(245,223,85,0.8)" stroke="rgb(245,223,85)" stroke-width="0.42"/><path d="M3491.70 1585.05L3491.70 1498.00L3536.20 1498.00L3536.20 1585.05A7.80 7.80 0 0 1 3528.40 1592.85L3499.50 1592.85A7.80 7.80 0 0 1 3491.70 1585.05Z" fill="rgba(133,189,114,0.8)" stroke="rgb(133,189,114)" stroke-width="1.60"/><path d="M3491.70 1497.06L3491.70 1496.78L3536.20 1496.78L3536.20 1497.06L3491.70 1497.06Z" fill="rgba(245,223,85,0.8)" stroke="rgb(245,223,85)" stroke-width="0.28"/></svg>
<div class="t" style="left:1606.29px;top:1506px;font-size:6.30px;line-height:7px;color:rgb(37,41,45);">-1.70 kWh</div>
<div class="t" style="left:1609.79px;top:1487px;font-size:6.30px;line-height:7px;color:rgb(37,41,45);">200 Wh</div>
<div class="t" style="left:1612.07px;top:1763px;font-size:18.00px;line-height:20px;color:rgb(37,41,45);letter-spacing:-1.260px;-webkit-text-stroke:0.16px rgb(37,41,45);">14</div>
<div class="t" style="left:1669.40px;top:1549px;font-size:6.30px;line-height:7px;color:rgb(37,41,45);">-17.2 kWh</div>
<div class="t" style="left:1672.90px;top:1486px;font-size:6.30px;line-height:7px;color:rgb(37,41,45);">600 Wh</div>
<div class="t" style="left:1675.18px;top:1763px;font-size:18.00px;line-height:20px;color:rgb(37,41,45);letter-spacing:-1.260px;-webkit-text-stroke:0.16px rgb(37,41,45);">15</div>
<div class="t" style="left:1733.56px;top:1479px;font-size:6.30px;line-height:7px;color:rgb(37,41,45);">3.10 kWh</div>
<div class="t" style="left:1738.29px;top:1763px;font-size:18.00px;line-height:20px;color:rgb(37,41,45);letter-spacing:-1.260px;-webkit-text-stroke:0.16px rgb(37,41,45);">16</div>
<div class="a" style="left:1786.93px;top:1497.20px;width:46.10px;height:1.40px;background:rgba(133,189,114,0.9);"></div>
<div class="t" style="left:1796.67px;top:1480px;font-size:6.30px;line-height:7px;color:rgb(37,41,45);">2.80 kWh</div>
<div class="t" style="left:1801.05px;top:1488px;font-size:6.30px;line-height:7px;color:rgb(37,41,45);">0 kWh</div>
<div class="t" style="left:1801.40px;top:1763px;font-size:18.00px;line-height:20px;color:rgb(37,41,45);letter-spacing:-1.260px;-webkit-text-stroke:0.16px rgb(37,41,45);">17</div>
<div class="t" style="left:1864.16px;top:1485px;font-size:6.30px;line-height:7px;color:rgb(37,41,45);">1 kWh</div>
<div class="t" style="left:1864.51px;top:1763px;font-size:18.00px;line-height:20px;color:rgb(37,41,45);letter-spacing:-1.260px;-webkit-text-stroke:0.16px rgb(37,41,45);">18</div>
<div class="t" style="left:1921.84px;top:1572px;font-size:6.30px;line-height:7px;color:rgb(37,41,45);">-25.3 kWh</div>
<div class="t" style="left:1925.34px;top:1487px;font-size:6.30px;line-height:7px;color:rgb(37,41,45);">400 Wh</div>
<div class="t" style="left:1927.62px;top:1763px;font-size:18.00px;line-height:20px;color:rgb(37,41,45);letter-spacing:-1.260px;-webkit-text-stroke:0.16px rgb(37,41,45);">19</div>
<div class="t" style="left:1984.95px;top:1555px;font-size:6.30px;line-height:7px;color:rgb(37,41,45);">-19.3 kWh</div>
<div class="t" style="left:1988.45px;top:1486px;font-size:6.30px;line-height:7px;color:rgb(37,41,45);">600 Wh</div>
<div class="t" style="left:1989.29px;top:1763px;font-size:18.00px;line-height:20px;color:rgb(37,41,45);letter-spacing:1.626px;-webkit-text-stroke:0.16px rgb(37,41,45);">20</div>
<div class="t" style="left:2048.06px;top:1560px;font-size:6.30px;line-height:7px;color:rgb(37,41,45);">-21.2 kWh</div>
<div class="t" style="left:2051.56px;top:1487px;font-size:6.30px;line-height:7px;color:rgb(37,41,45);">500 Wh</div>
<div class="t" style="left:2053.84px;top:1763px;font-size:18.00px;line-height:20px;color:rgb(37,41,45);letter-spacing:-1.260px;-webkit-text-stroke:0.16px rgb(37,41,45);">21</div>
<div class="t" style="left:2111.17px;top:1658px;font-size:6.30px;line-height:7px;color:rgb(37,41,45);">-56.2 kWh</div>
<div class="t" style="left:2114.67px;top:1487px;font-size:6.30px;line-height:7px;color:rgb(37,41,45);">300 Wh</div>
<div class="t" style="left:2115.77px;top:1763px;font-size:18.00px;line-height:20px;color:rgb(37,41,45);letter-spacing:1.098px;-webkit-text-stroke:0.16px rgb(37,41,45);">22</div>
<div class="t" style="left:2174.28px;top:1567px;font-size:6.30px;line-height:7px;color:rgb(37,41,45);">-23.5 kWh</div>
<div class="t" style="left:2177.78px;top:1487px;font-size:6.30px;line-height:7px;color:rgb(37,41,45);">500 Wh</div>
<div class="t" style="left:2178.62px;top:1763px;font-size:18.00px;line-height:20px;color:rgb(37,41,45);letter-spacing:1.626px;-webkit-text-stroke:0.16px rgb(37,41,45);">23</div>
<div class="t" style="left:2237.39px;top:1510px;font-size:6.30px;line-height:7px;color:rgb(37,41,45);">-3.30 kWh</div>
<div class="t" style="left:2240.89px;top:1487px;font-size:6.30px;line-height:7px;color:rgb(37,41,45);">400 Wh</div>
<div class="t" style="left:2241.55px;top:1763px;font-size:18.00px;line-height:20px;color:rgb(37,41,45);letter-spacing:1.978px;-webkit-text-stroke:0.16px rgb(37,41,45);">24</div>
<div class="t" style="left:2303.13px;top:1719px;font-size:6.30px;line-height:7px;color:rgb(37,41,45);">-78 kWh</div>
<div class="t" style="left:2301.55px;top:1484px;font-size:6.30px;line-height:7px;color:rgb(37,41,45);">1.50 kWh</div>
<div class="t" style="left:2304.84px;top:1763px;font-size:18.00px;line-height:20px;color:rgb(37,41,45);letter-spacing:1.626px;-webkit-text-stroke:0.16px rgb(37,41,45);">26</div>
<div class="t" style="left:2363.61px;top:1642px;font-size:6.30px;line-height:7px;color:rgb(37,41,45);">-50.6 kWh</div>
<div class="t" style="left:2367.11px;top:1487px;font-size:6.30px;line-height:7px;color:rgb(37,41,45);">400 Wh</div>
<div class="t" style="left:2368.83px;top:1763px;font-size:18.00px;line-height:20px;color:rgb(37,41,45);letter-spacing:-0.134px;-webkit-text-stroke:0.16px rgb(37,41,45);">27</div>
<div class="t" style="left:2426.72px;top:1589px;font-size:6.30px;line-height:7px;color:rgb(37,41,45);">-31.5 kWh</div>
<div class="t" style="left:2430.22px;top:1487px;font-size:6.30px;line-height:7px;color:rgb(37,41,45);">400 Wh</div>
<div class="t" style="left:2431.06px;top:1763px;font-size:18.00px;line-height:20px;color:rgb(37,41,45);letter-spacing:1.626px;-webkit-text-stroke:0.16px rgb(37,41,45);">28</div>
<div class="t" style="left:2489.83px;top:1600px;font-size:6.30px;line-height:7px;color:rgb(37,41,45);">-35.4 kWh</div>
<div class="t" style="left:2493.33px;top:1486px;font-size:6.30px;line-height:7px;color:rgb(37,41,45);">600 Wh</div>
<div class="t" style="left:2494.17px;top:1763px;font-size:18.00px;line-height:20px;color:rgb(37,41,45);letter-spacing:1.626px;-webkit-text-stroke:0.16px rgb(37,41,45);">29</div>
<div class="t" style="left:2555.57px;top:1660px;font-size:6.30px;line-height:7px;color:rgb(37,41,45);">-57 kWh</div>
<div class="t" style="left:2556.44px;top:1487px;font-size:6.30px;line-height:7px;color:rgb(37,41,45);">300 Wh</div>
<div class="t" style="left:2557.01px;top:1763px;font-size:18.00px;line-height:20px;color:rgb(37,41,45);letter-spacing:2.154px;-webkit-text-stroke:0.16px rgb(37,41,45);">30</div>
<div class="t" style="left:2616.05px;top:1610px;font-size:6.30px;line-height:7px;color:rgb(37,41,45);">-39.2 kWh</div>
<div class="t" style="left:2619.55px;top:1487px;font-size:6.30px;line-height:7px;color:rgb(37,41,45);">300 Wh</div>
<div class="t" style="left:2621.83px;top:1763px;font-size:18.00px;line-height:20px;color:rgb(37,41,45);letter-spacing:-1.260px;-webkit-text-stroke:0.16px rgb(37,41,45);">31</div>
<div class="t" style="left:2679.16px;top:1637px;font-size:6.30px;line-height:7px;color:rgb(37,41,45);">-48.8 kWh</div>
<div class="t" style="left:2682.66px;top:1487px;font-size:6.30px;line-height:7px;color:rgb(37,41,45);">300 Wh</div>
<div class="t" style="left:2684.94px;top:1763px;font-size:18.00px;line-height:20px;color:rgb(37,41,45);letter-spacing:-1.260px;-webkit-text-stroke:0.16px rgb(37,41,45);">01</div>
<div class="t" style="left:2742.27px;top:1654px;font-size:6.30px;line-height:7px;color:rgb(37,41,45);">-54.8 kWh</div>
<div class="t" style="left:2745.77px;top:1487px;font-size:6.30px;line-height:7px;color:rgb(37,41,45);">400 Wh</div>
<div class="t" style="left:2746.61px;top:1763px;font-size:18.00px;line-height:20px;color:rgb(37,41,45);letter-spacing:1.626px;-webkit-text-stroke:0.16px rgb(37,41,45);">02</div>
<div class="t" style="left:2805.38px;top:1622px;font-size:6.30px;line-height:7px;color:rgb(37,41,45);">-43.5 kWh</div>
<div class="t" style="left:2808.88px;top:1487px;font-size:6.30px;line-height:7px;color:rgb(37,41,45);">500 Wh</div>
<div class="t" style="left:2809.45px;top:1763px;font-size:18.00px;line-height:20px;color:rgb(37,41,45);letter-spacing:2.154px;-webkit-text-stroke:0.16px rgb(37,41,45);">03</div>
<div class="t" style="left:2868.49px;top:1546px;font-size:6.30px;line-height:7px;color:rgb(37,41,45);">-16.2 kWh</div>
<div class="t" style="left:2871.99px;top:1486px;font-size:6.30px;line-height:7px;color:rgb(37,41,45);">600 Wh</div>
<div class="t" style="left:2872.39px;top:1763px;font-size:18.00px;line-height:20px;color:rgb(37,41,45);letter-spacing:2.506px;-webkit-text-stroke:0.16px rgb(37,41,45);">04</div>
<div class="t" style="left:2934.05px;top:1502px;font-size:6.30px;line-height:7px;color:rgb(37,41,45);">-500 Wh</div>
<div class="t" style="left:2935.10px;top:1486px;font-size:6.30px;line-height:7px;color:rgb(37,41,45);">700 Wh</div>
<div class="t" style="left:2935.85px;top:1763px;font-size:18.00px;line-height:20px;color:rgb(37,41,45);letter-spacing:1.802px;-webkit-text-stroke:0.16px rgb(37,41,45);">05</div>
<div class="t" style="left:2994.71px;top:1613px;font-size:6.30px;line-height:7px;color:rgb(37,41,45);">-40.1 kWh</div>
<div class="t" style="left:2998.21px;top:1487px;font-size:6.30px;line-height:7px;color:rgb(37,41,45);">300 Wh</div>
<div class="t" style="left:2998.78px;top:1763px;font-size:18.00px;line-height:20px;color:rgb(37,41,45);letter-spacing:2.154px;-webkit-text-stroke:0.16px rgb(37,41,45);">06</div>
<div class="t" style="left:3057.82px;top:1625px;font-size:6.30px;line-height:7px;color:rgb(37,41,45);">-44.5 kWh</div>
<div class="t" style="left:3061.32px;top:1487px;font-size:6.30px;line-height:7px;color:rgb(37,41,45);">400 Wh</div>
<div class="t" style="left:3062.77px;top:1763px;font-size:18.00px;line-height:20px;color:rgb(37,41,45);letter-spacing:0.394px;-webkit-text-stroke:0.16px rgb(37,41,45);">07</div>
<div class="t" style="left:3120.93px;top:1635px;font-size:6.30px;line-height:7px;color:rgb(37,41,45);">-47.9 kWh</div>
<div class="t" style="left:3124.43px;top:1487px;font-size:6.30px;line-height:7px;color:rgb(37,41,45);">400 Wh</div>
<div class="t" style="left:3125.00px;top:1763px;font-size:18.00px;line-height:20px;color:rgb(37,41,45);letter-spacing:2.154px;-webkit-text-stroke:0.16px rgb(37,41,45);">08</div>
<div class="t" style="left:3184.04px;top:1692px;font-size:6.30px;line-height:7px;color:rgb(37,41,45);">-68.4 kWh</div>
<div class="t" style="left:3187.54px;top:1487px;font-size:6.30px;line-height:7px;color:rgb(37,41,45);">400 Wh</div>
<div class="t" style="left:3188.11px;top:1763px;font-size:18.00px;line-height:20px;color:rgb(37,41,45);letter-spacing:2.154px;-webkit-text-stroke:0.16px rgb(37,41,45);">09</div>
<div class="t" style="left:3247.15px;top:1562px;font-size:6.30px;line-height:7px;color:rgb(37,41,45);">-21.8 kWh</div>
<div class="t" style="left:3250.65px;top:1487px;font-size:6.30px;line-height:7px;color:rgb(37,41,45);">500 Wh</div>
<div class="t" style="left:3252.93px;top:1763px;font-size:18.00px;line-height:20px;color:rgb(37,41,45);letter-spacing:-1.260px;-webkit-text-stroke:0.16px rgb(37,41,45);">10</div>
<div class="t" style="left:3310.26px;top:1566px;font-size:6.30px;line-height:7px;color:rgb(37,41,45);">-23.3 kWh</div>
<div class="t" style="left:3313.76px;top:1487px;font-size:6.30px;line-height:7px;color:rgb(37,41,45);">500 Wh</div>
<div class="t" style="left:3316.71px;top:1763px;font-size:18.00px;line-height:20px;color:rgb(37,41,45);letter-spacing:-1.260px;-webkit-text-stroke:0.16px rgb(37,41,45);">11</div>
<div class="t" style="left:3373.37px;top:1695px;font-size:6.30px;line-height:7px;color:rgb(37,41,45);">-69.5 kWh</div>
<div class="t" style="left:3376.87px;top:1487px;font-size:6.30px;line-height:7px;color:rgb(37,41,45);">400 Wh</div>
<div class="t" style="left:3379.15px;top:1763px;font-size:18.00px;line-height:20px;color:rgb(37,41,45);letter-spacing:-1.260px;-webkit-text-stroke:0.16px rgb(37,41,45);">12</div>
<div class="t" style="left:3436.48px;top:1719px;font-size:6.30px;line-height:7px;color:rgb(37,41,45);">-78.1 kWh</div>
<div class="t" style="left:3439.98px;top:1487px;font-size:6.30px;line-height:7px;color:rgb(37,41,45);">300 Wh</div>
<div class="t" style="left:3442.26px;top:1763px;font-size:18.00px;line-height:20px;color:rgb(37,41,45);letter-spacing:-1.260px;-webkit-text-stroke:0.16px rgb(37,41,45);">13</div>
<div class="t" style="left:3499.59px;top:1598px;font-size:6.30px;line-height:7px;color:rgb(37,41,45);">-34.6 kWh</div>
<div class="t" style="left:3503.09px;top:1487px;font-size:6.30px;line-height:7px;color:rgb(37,41,45);">200 Wh</div>
<div class="t" style="left:3505.37px;top:1763px;font-size:18.00px;line-height:20px;color:rgb(37,41,45);letter-spacing:-1.260px;-webkit-text-stroke:0.16px rgb(37,41,45);">14</div>
<div class="a" style="left:1515.00px;top:1804.40px;width:20.60px;height:5.80px;background:rgb(245,223,85);border-radius:3px;"></div>
<div class="t" style="left:1548.30px;top:1796px;font-size:19.20px;line-height:21px;color:rgb(37,41,45);letter-spacing:-0.335px;-webkit-text-stroke:0.16px rgb(37,41,45);">Bezug</div>
<div class="t" style="left:1614.60px;top:1796px;font-size:19.20px;line-height:21px;color:rgb(37,41,45);letter-spacing:-0.038px;-webkit-text-stroke:0.16px rgb(37,41,45);">Min: 200 Wh</div>
<div class="t" style="left:1736.00px;top:1796px;font-size:19.20px;line-height:21px;color:rgb(37,41,45);letter-spacing:-0.387px;-webkit-text-stroke:0.16px rgb(37,41,45);">Max: 3.10 kWh</div>
<div class="t" style="left:1873.80px;top:1796px;font-size:19.20px;line-height:21px;color:rgb(37,41,45);letter-spacing:-0.015px;-webkit-text-stroke:0.16px rgb(37,41,45);">Mean: 639 Wh</div>
<div class="t" style="left:2013.00px;top:1796px;font-size:19.20px;line-height:21px;color:rgb(37,41,45);letter-spacing:-0.138px;-webkit-text-stroke:0.16px rgb(37,41,45);">Total: 19.8 kWh</div>
<div class="a" style="left:2161.00px;top:1804.40px;width:20.60px;height:5.80px;background:rgb(133,189,114);border-radius:3px;"></div>
<div class="t" style="left:2193.20px;top:1796px;font-size:19.20px;line-height:21px;color:rgb(37,41,45);letter-spacing:-0.221px;-webkit-text-stroke:0.16px rgb(37,41,45);">Einspeisung</div>
<div class="t" style="left:2309.20px;top:1796px;font-size:19.20px;line-height:21px;color:rgb(37,41,45);letter-spacing:-0.339px;-webkit-text-stroke:0.16px rgb(37,41,45);">Min: -78.1 kWh</div>
<div class="t" style="left:2447.90px;top:1796px;font-size:19.20px;line-height:21px;color:rgb(37,41,45);letter-spacing:-0.073px;-webkit-text-stroke:0.16px rgb(37,41,45);">Max: 0 kWh</div>
<div class="t" style="left:2562.20px;top:1796px;font-size:19.20px;line-height:21px;color:rgb(37,41,45);letter-spacing:0.050px;-webkit-text-stroke:0.16px rgb(37,41,45);">Mean: -36.3 kWh</div>
<div class="t" style="left:2723.50px;top:1796px;font-size:19.20px;line-height:21px;color:rgb(37,41,45);letter-spacing:-0.015px;-webkit-text-stroke:0.16px rgb(37,41,45);">Total: -1.05 MWh</div>
</body></html>
